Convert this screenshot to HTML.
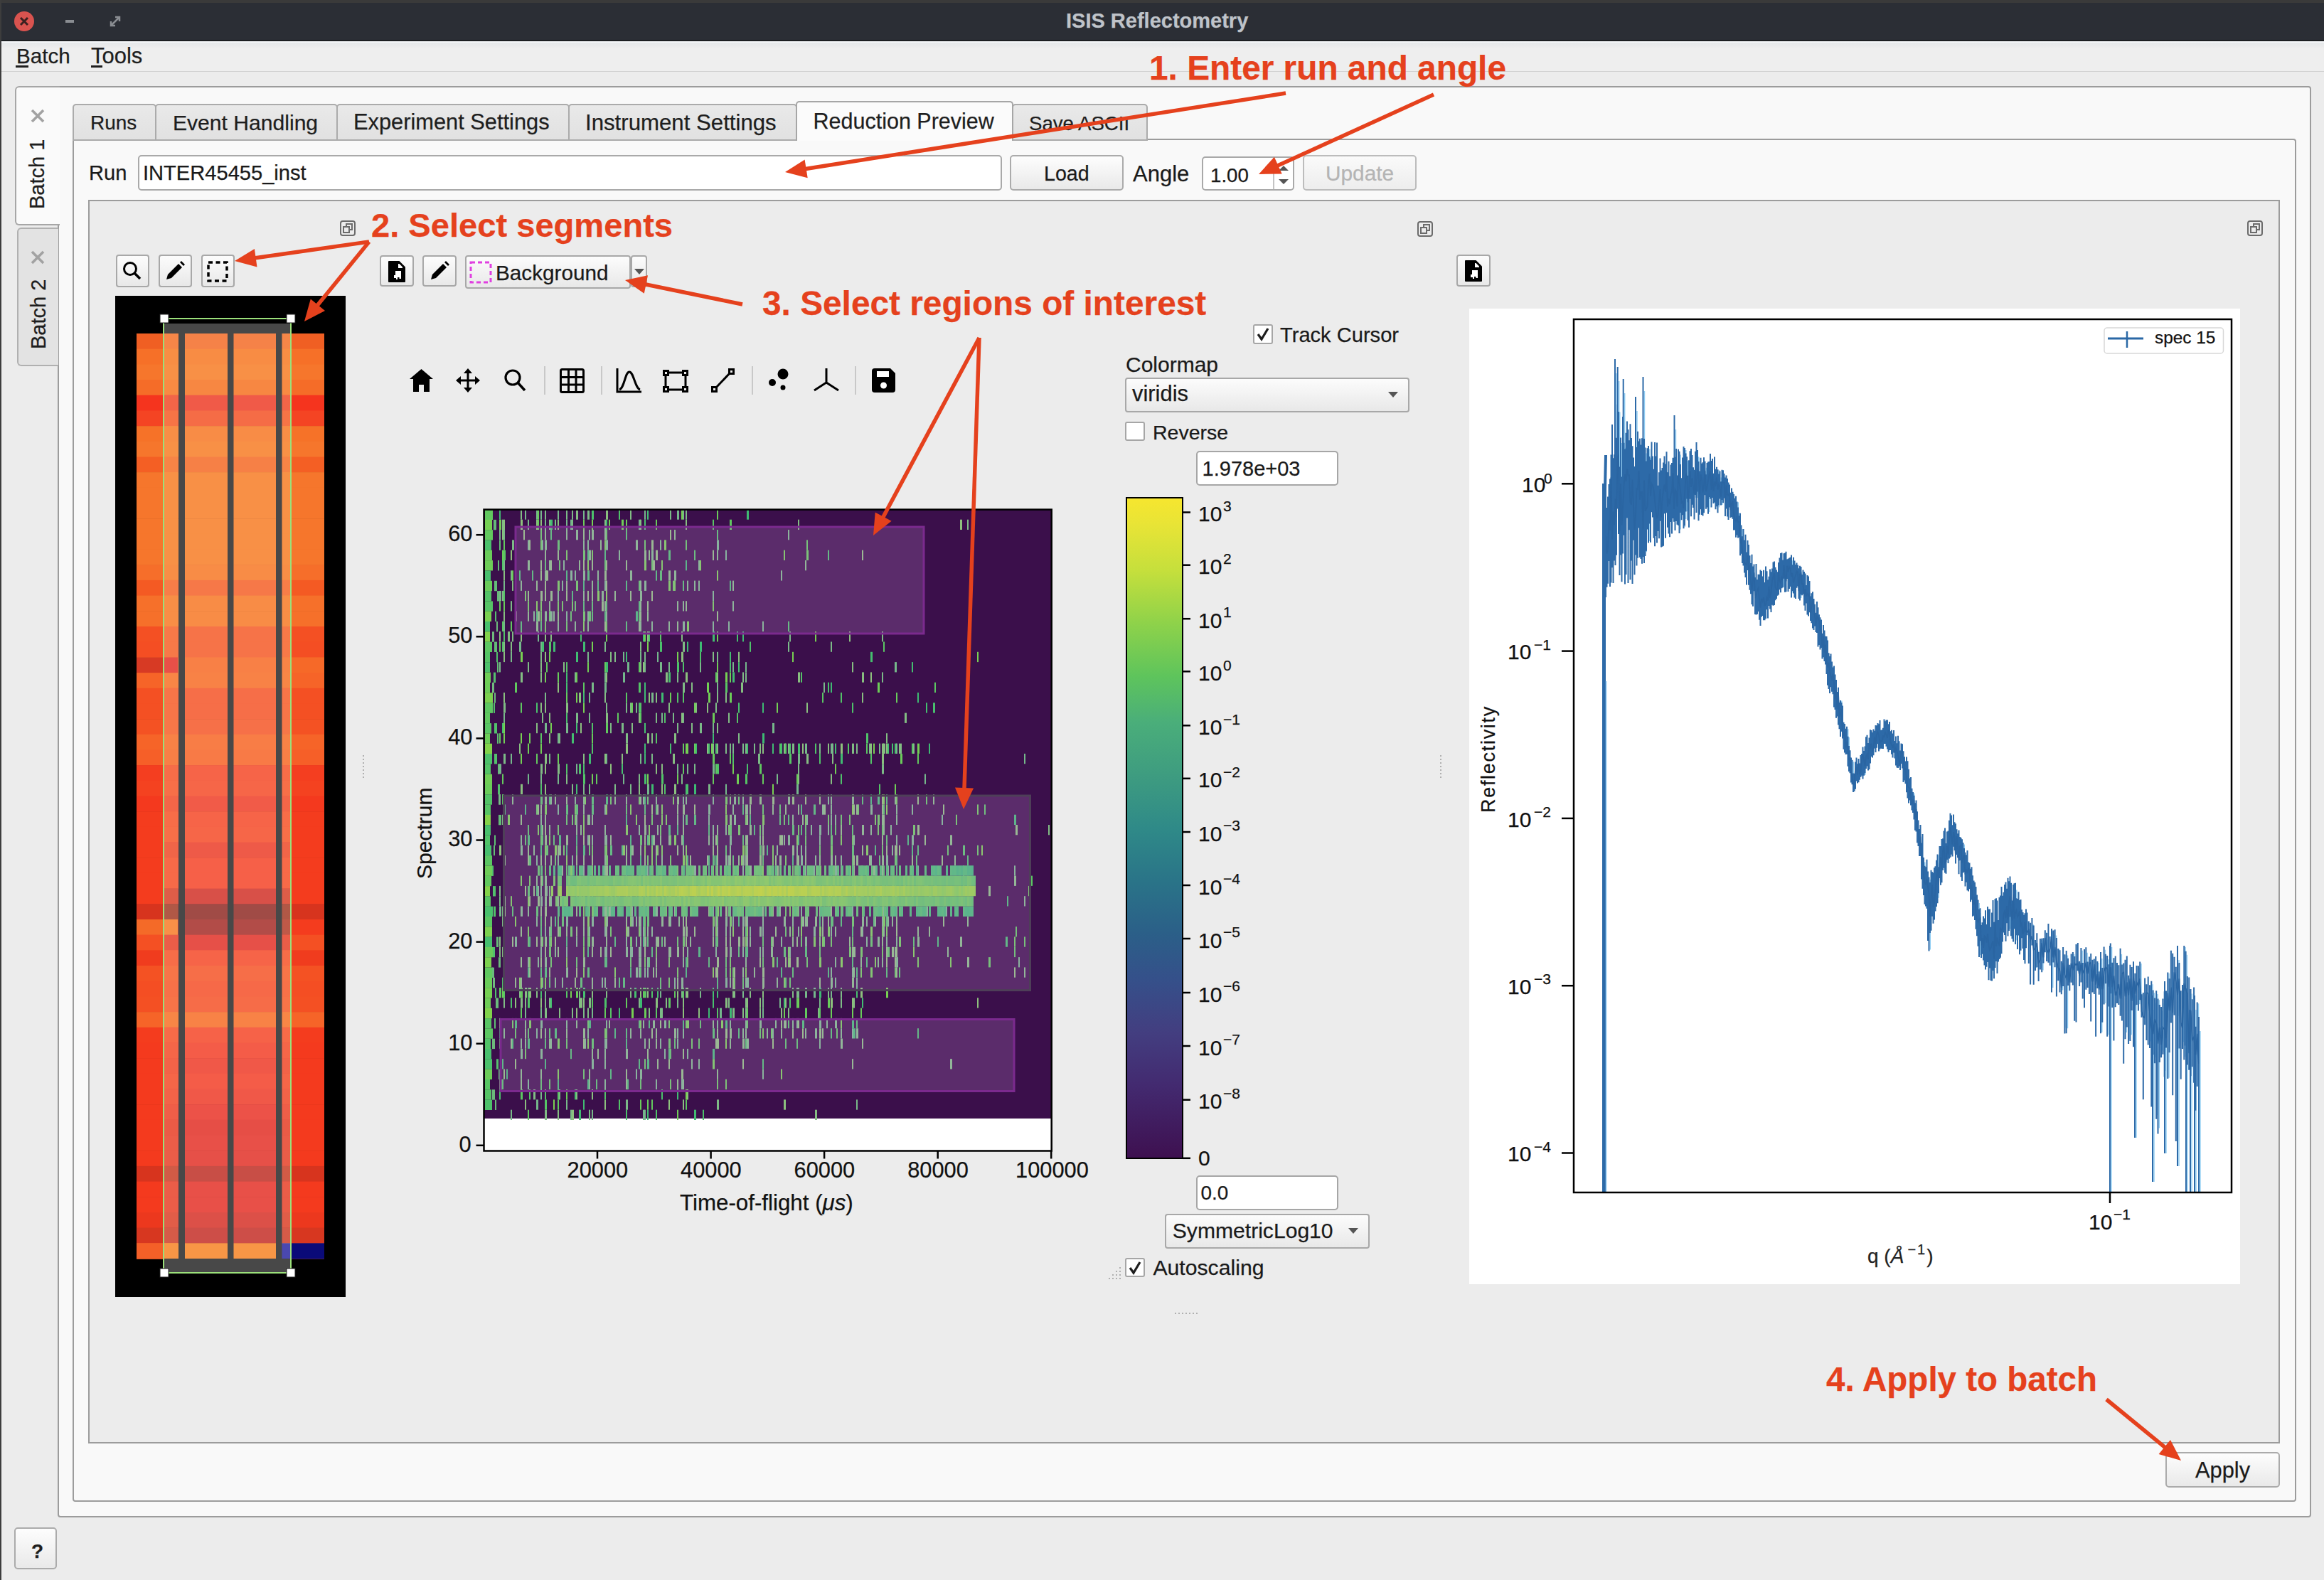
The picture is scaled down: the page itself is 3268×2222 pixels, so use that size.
<!DOCTYPE html><html><head><meta charset="utf-8"><style>html,body{margin:0;padding:0;width:3268px;height:2222px;overflow:hidden;background:#ececec;font-family:"Liberation Sans", sans-serif;position:relative}div{-webkit-text-stroke:0.25px currentColor}</style></head><body>
<div style="position:absolute;left:0.0px;top:0.0px;width:3268.0px;height:58.0px;background:#2b2e35"></div>
<div style="position:absolute;left:0.0px;top:0.0px;width:3268.0px;height:4.0px;background:#3a3a3a"></div>
<div style="position:absolute;left:0.0px;top:56.0px;width:3268.0px;height:2.0px;background:#1c1e21"></div>
<div style="position:absolute;left:0.0px;top:0.0px;width:2.0px;height:2222.0px;background:#3d3d3d"></div>
<div style="position:absolute;left:20px;top:16px;width:28px;height:28px;border-radius:50%;background:#d9534f"></div>
<svg style="position:absolute;left:20px;top:16px" width="28" height="28"><path d="M9 9 L19 19 M19 9 L9 19" stroke="#3a2020" stroke-width="3"/></svg>
<div style="position:absolute;left:92.0px;top:28.0px;width:12.0px;height:4.0px;background:#8a8d92"></div>
<svg style="position:absolute;left:152px;top:20px" width="20" height="20"><path d="M4 16 L16 4 M10 4 L16 4 L16 10 M4 10 L4 16 L10 16" stroke="#8a8d92" stroke-width="2.5" fill="none"/></svg>
<div style="position:absolute;left:1499.0px;top:15.1px;font-size:29px;line-height:1;font-weight:bold;color:#bfc3c9;white-space:nowrap;font-family:"Liberation Sans", sans-serif;letter-spacing:0.8px">ISIS Reflectometry</div>
<div style="position:absolute;left:2.0px;top:58.0px;width:3266.0px;height:42.0px;background:#eeeeee"></div>
<div style="position:absolute;left:2.0px;top:100.0px;width:3266.0px;height:2.0px;background:#d2d2d2"></div>
<div style="position:absolute;left:2.0px;top:58.0px;width:3266.0px;height:2.0px;background:#f4f6f8"></div>
<div style="position:absolute;left:2.0px;top:60.0px;width:3266.0px;height:7.0px;background:linear-gradient(#e6e8ea,#ececec)"></div>
<div style="position:absolute;left:23.0px;top:63.9px;font-size:29.6px;line-height:1;font-weight:normal;color:#1e1e1e;white-space:nowrap;font-family:"Liberation Sans", sans-serif;">Batch</div>
<div style="position:absolute;left:22.0px;top:92.0px;width:18.0px;height:3.0px;background:#1e1e1e"></div>
<div style="position:absolute;left:128.0px;top:62.8px;font-size:31px;line-height:1;font-weight:normal;color:#1e1e1e;white-space:nowrap;font-family:"Liberation Sans", sans-serif;">Tools</div>
<div style="position:absolute;left:128.0px;top:92.0px;width:16.0px;height:3.0px;background:#1e1e1e"></div>
<div style="position:absolute;left:2.0px;top:101.0px;width:3266.0px;height:2121.0px;background:#ececec"></div>
<div style="position:absolute;left:81.0px;top:121.0px;width:3169.0px;height:2013.0px;background:#f9f9f9;border:2px solid #9c9c9c;box-sizing:border-box;border-radius:0 4px 4px 4px"></div>
<div style="position:absolute;left:21.0px;top:121.0px;width:63.0px;height:196.0px;background:#fafafa;border:2px solid #a6a6a6;border-right:none;box-sizing:border-box;border-radius:6px 0 0 6px"></div>
<div style="position:absolute;left:24.0px;top:320.0px;width:58.0px;height:195.0px;background:#e3e3e3;border:2px solid #b0b0b0;border-right:none;box-sizing:border-box;border-radius:6px 0 0 6px"></div>
<svg style="position:absolute;left:43px;top:153px" width="20" height="20"><path d="M2 2 L18 18 M18 2 L2 18" stroke="#a2a2a2" stroke-width="3.6"/></svg>
<svg style="position:absolute;left:43px;top:352px" width="20" height="20"><path d="M2 2 L18 18 M18 2 L2 18" stroke="#a2a2a2" stroke-width="3.6"/></svg>
<div style="position:absolute;left:38px;top:294px;transform-origin:0 0;transform:rotate(-90deg);font-size:29px;line-height:1;color:#1e1e1e;white-space:nowrap">Batch 1</div>
<div style="position:absolute;left:40px;top:491px;transform-origin:0 0;transform:rotate(-90deg);font-size:29px;line-height:1;color:#1e1e1e;white-space:nowrap">Batch 2</div>
<div style="position:absolute;left:102.0px;top:195.0px;width:3127.0px;height:1917.0px;background:#f9f9f9;border:2px solid #9c9c9c;box-sizing:border-box;border-radius:0 4px 4px 4px"></div>
<div style="position:absolute;left:102.0px;top:146.0px;width:118.0px;height:52.0px;background:linear-gradient(#e9e9e9,#e1e1e1);border:2px solid #ababab;box-sizing:border-box;border-radius:5px 5px 0 0"></div>
<div style="position:absolute;left:218.0px;top:146.0px;width:257.0px;height:52.0px;background:linear-gradient(#e9e9e9,#e1e1e1);border:2px solid #ababab;box-sizing:border-box;border-radius:5px 5px 0 0"></div>
<div style="position:absolute;left:473.0px;top:146.0px;width:328.0px;height:52.0px;background:linear-gradient(#e9e9e9,#e1e1e1);border:2px solid #ababab;box-sizing:border-box;border-radius:5px 5px 0 0"></div>
<div style="position:absolute;left:799.0px;top:146.0px;width:322.0px;height:52.0px;background:linear-gradient(#e9e9e9,#e1e1e1);border:2px solid #ababab;box-sizing:border-box;border-radius:5px 5px 0 0"></div>
<div style="position:absolute;left:1423.0px;top:146.0px;width:191.0px;height:52.0px;background:linear-gradient(#e9e9e9,#e1e1e1);border:2px solid #ababab;box-sizing:border-box;border-radius:5px 5px 0 0"></div>
<div style="position:absolute;left:127.0px;top:159.3px;font-size:28px;line-height:1;font-weight:normal;color:#1e1e1e;white-space:nowrap;font-family:"Liberation Sans", sans-serif;">Runs</div>
<div style="position:absolute;left:243.0px;top:157.5px;font-size:30.1px;line-height:1;font-weight:normal;color:#1e1e1e;white-space:nowrap;font-family:"Liberation Sans", sans-serif;">Event Handling</div>
<div style="position:absolute;left:497.0px;top:156.9px;font-size:30.8px;line-height:1;font-weight:normal;color:#1e1e1e;white-space:nowrap;font-family:"Liberation Sans", sans-serif;">Experiment Settings</div>
<div style="position:absolute;left:823.0px;top:156.6px;font-size:31.2px;line-height:1;font-weight:normal;color:#1e1e1e;white-space:nowrap;font-family:"Liberation Sans", sans-serif;">Instrument Settings</div>
<div style="position:absolute;left:1447.0px;top:159.6px;font-size:27.6px;line-height:1;font-weight:normal;color:#1e1e1e;white-space:nowrap;font-family:"Liberation Sans", sans-serif;">Save ASCII</div>
<div style="position:absolute;left:1119.0px;top:142.0px;width:306.0px;height:56.0px;background:#fbfbfb;border:2px solid #a6a6a6;border-bottom:none;box-sizing:border-box;border-radius:5px 5px 0 0"></div>
<div style="position:absolute;left:1143.5px;top:155.2px;font-size:30.5px;line-height:1;font-weight:normal;color:#1e1e1e;white-space:nowrap;font-family:"Liberation Sans", sans-serif;">Reduction Preview</div>
<div style="position:absolute;left:125.0px;top:229.4px;font-size:29.1px;line-height:1;font-weight:normal;color:#1a1a1a;white-space:nowrap;font-family:"Liberation Sans", sans-serif;">Run</div>
<div style="position:absolute;left:194.0px;top:218.0px;width:1215.0px;height:50.0px;background:#fff;border:2px solid #a9a9a9;box-sizing:border-box;border-radius:5px"></div>
<div style="position:absolute;left:201.0px;top:229.4px;font-size:29.1px;line-height:1;font-weight:normal;color:#1a1a1a;white-space:nowrap;font-family:"Liberation Sans", sans-serif;">INTER45455_inst</div>
<div style="position:absolute;left:1420.0px;top:218.0px;width:160.0px;height:50.0px;background:linear-gradient(#fdfdfd,#e9e9e9);border:2px solid #ababab;box-sizing:border-box;border-radius:5px"></div>
<div style="position:absolute;left:1468.0px;top:229.8px;font-size:28.6px;line-height:1;font-weight:normal;color:#1a1a1a;white-space:nowrap;font-family:"Liberation Sans", sans-serif;">Load</div>
<div style="position:absolute;left:1593.0px;top:228.8px;font-size:31px;line-height:1;font-weight:normal;color:#1a1a1a;white-space:nowrap;font-family:"Liberation Sans", sans-serif;">Angle</div>
<div style="position:absolute;left:1690.0px;top:220.0px;width:130.0px;height:48.0px;background:#fff;border:2px solid #a9a9a9;box-sizing:border-box;border-radius:5px"></div>
<div style="position:absolute;left:1790.0px;top:222.0px;width:2.0px;height:44.0px;background:#c4c4c4"></div>
<svg style="position:absolute;left:1794px;top:226px" width="22" height="40"><path d="M4 14 L11 7 L18 14 Z M4 26 L11 33 L18 26 Z" fill="#555"/></svg>
<div style="position:absolute;left:1702.0px;top:232.6px;font-size:27.7px;line-height:1;font-weight:normal;color:#1a1a1a;white-space:nowrap;font-family:"Liberation Sans", sans-serif;">1.00</div>
<div style="position:absolute;left:1832.0px;top:218.0px;width:160.0px;height:50.0px;background:linear-gradient(#fafafa,#ededed);border:2px solid #bcbcbc;box-sizing:border-box;border-radius:5px"></div>
<div style="position:absolute;left:1864.0px;top:228.8px;font-size:29.8px;line-height:1;font-weight:normal;color:#b4b4b4;white-space:nowrap;font-family:"Liberation Sans", sans-serif;">Update</div>
<div style="position:absolute;left:124.0px;top:281.0px;width:3082.0px;height:1749.0px;background:#ececec;border:2px solid #9c9c9c;box-sizing:border-box"></div>
<div style="position:absolute;left:3045.0px;top:2042.0px;width:161.0px;height:50.0px;background:linear-gradient(#fdfdfd,#e9e9e9);border:2px solid #ababab;box-sizing:border-box;border-radius:5px"></div>
<div style="position:absolute;left:3087.0px;top:2052.9px;font-size:30.8px;line-height:1;font-weight:normal;color:#1a1a1a;white-space:nowrap;font-family:"Liberation Sans", sans-serif;">Apply</div>
<div style="position:absolute;left:20.0px;top:2148.0px;width:60.0px;height:59.0px;background:linear-gradient(#fdfdfd,#e9e9e9);border:2px solid #ababab;box-sizing:border-box;border-radius:5px"></div>
<div style="position:absolute;left:44.0px;top:2168.3px;font-size:28px;line-height:1;font-weight:bold;color:#1e1e1e;white-space:nowrap;font-family:"Liberation Sans", sans-serif;">?</div>
<svg style="position:absolute;left:478px;top:310px" width="22" height="22"><rect x="1" y="1" width="20" height="20" rx="3" fill="none" stroke="#6b6b6b" stroke-width="2"/><rect x="5" y="9" width="8" height="8" fill="none" stroke="#6b6b6b" stroke-width="2"/><path d="M9 9 V5 H17 V13 H13" fill="none" stroke="#6b6b6b" stroke-width="2"/></svg>
<div style="position:absolute;left:163.0px;top:358.0px;width:47.0px;height:46.0px;background:linear-gradient(#fcfcfc,#e8e8e8);border:2px solid #a8a8a8;box-sizing:border-box;border-radius:4px"></div>
<div style="position:absolute;left:223.0px;top:358.0px;width:47.0px;height:46.0px;background:linear-gradient(#fcfcfc,#e8e8e8);border:2px solid #a8a8a8;box-sizing:border-box;border-radius:4px"></div>
<div style="position:absolute;left:283.0px;top:358.0px;width:47.0px;height:46.0px;background:linear-gradient(#fcfcfc,#e8e8e8);border:2px solid #a8a8a8;box-sizing:border-box;border-radius:4px"></div>
<svg style="position:absolute;left:170px;top:365px" width="34" height="34"><circle cx="13" cy="13" r="8.5" fill="none" stroke="#000" stroke-width="3"/><path d="M19 19 L27 27" stroke="#000" stroke-width="3.5"/></svg>
<svg style="position:absolute;left:231px;top:366px" width="30" height="30"><path d="M3 27 L5 20 L20 5 L25 10 L10 25 Z" fill="#000"/><path d="M22 3 L24 1 L29 6 L27 8 Z" fill="#000"/></svg>
<svg style="position:absolute;left:289px;top:365px" width="34" height="34"><rect x="4" y="4" width="26" height="26" fill="none" stroke="#000" stroke-width="3.5" stroke-dasharray="6 4.5"/></svg>
<svg style="position:absolute;left:1993px;top:311px" width="22" height="22"><rect x="1" y="1" width="20" height="20" rx="3" fill="none" stroke="#6b6b6b" stroke-width="2"/><rect x="5" y="9" width="8" height="8" fill="none" stroke="#6b6b6b" stroke-width="2"/><path d="M9 9 V5 H17 V13 H13" fill="none" stroke="#6b6b6b" stroke-width="2"/></svg>
<div style="position:absolute;left:534.0px;top:359.0px;width:48.0px;height:44.0px;background:linear-gradient(#fcfcfc,#e8e8e8);border:2px solid #a8a8a8;box-sizing:border-box;border-radius:4px"></div>
<svg style="position:absolute;left:545px;top:365px" width="28" height="34"><g transform="translate(1,2)"><path d="M0 1 Q0 0 1 0 H15.5 L24 8.5 V29 Q24 30 23 30 H1 Q0 30 0 29 Z" fill="#000"/><path d="M14 4 L14 10 L20 10 L20 8.5 L15.5 4 Z" fill="#fff"/><path d="M10 14 H18 V25 H15.5 V23 H13 V26 H11 V24 H8 V20 H10 Z" fill="#fff"/></g></svg>
<div style="position:absolute;left:594.0px;top:359.0px;width:48.0px;height:44.0px;background:linear-gradient(#fcfcfc,#e8e8e8);border:2px solid #a8a8a8;box-sizing:border-box;border-radius:4px"></div>
<svg style="position:absolute;left:603px;top:366px" width="30" height="30"><path d="M3 27 L5 20 L20 5 L25 10 L10 25 Z" fill="#000"/><path d="M22 3 L24 1 L29 6 L27 8 Z" fill="#000"/></svg>
<div style="position:absolute;left:654.0px;top:359.0px;width:233.0px;height:47.0px;background:linear-gradient(#fcfcfc,#e8e8e8);border:2px solid #a8a8a8;box-sizing:border-box;border-radius:4px"></div>
<div style="position:absolute;left:887.0px;top:359.0px;width:23.0px;height:45.0px;background:linear-gradient(#fcfcfc,#e8e8e8);border:2px solid #a8a8a8;box-sizing:border-box;border-radius:4px"></div>
<svg style="position:absolute;left:890px;top:376px" width="18" height="12"><path d="M2 2 H16 L9 10 Z" fill="#555"/></svg>
<svg style="position:absolute;left:660px;top:367px" width="32" height="32"><rect x="2" y="2" width="28" height="28" fill="none" stroke="#e040e0" stroke-width="3" stroke-dasharray="6 4"/></svg>
<div style="position:absolute;left:697.0px;top:368.6px;font-size:29.7px;line-height:1;font-weight:normal;color:#1a1a1a;white-space:nowrap;font-family:"Liberation Sans", sans-serif;">Background</div>
<svg style="position:absolute;left:0;top:0" width="1300" height="600"><path transform="translate(576,518)" d="M16.5 1 L33 15 H28 V33 H20 V23 H13 V33 H5 V15 H0 Z" fill="#000"/><g transform="translate(641,518)" stroke="#000" stroke-width="3" fill="#000"><path d="M17 3 V31 M3 17 H31"/><path d="M17 0 L11 7 H23 Z M17 34 L11 27 H23 Z M0 17 L7 11 V23 Z M34 17 L27 11 V23 Z" stroke="none"/></g><g transform="translate(708,518)"><circle cx="13" cy="13" r="10" fill="none" stroke="#000" stroke-width="3.2"/><path d="M20 20 L30 31" stroke="#000" stroke-width="3.5"/></g><path d="M766 515 V555" stroke="#c8c8c8" stroke-width="2"/><g transform="translate(787,518)" fill="none" stroke="#000" stroke-width="3"><rect x="1.5" y="1.5" width="32" height="32" rx="2"/><path d="M12.5 1.5 V33.5 M23 1.5 V33.5 M1.5 12.5 H33.5 M1.5 23 H33.5"/></g><path d="M846 515 V555" stroke="#c8c8c8" stroke-width="2"/><g transform="translate(866,518)" fill="none" stroke="#000" stroke-width="3"><path d="M2 0 V33 H36"/><path d="M5 30 C12 28 13 5 19 5 C25 5 27 28 34 30"/></g><g transform="translate(932,520)" fill="none" stroke="#000" stroke-width="3"><path d="M6 4 H30 M6 28 H30 M4 6 V26 M32 6 V26"/><rect x="1.5" y="1.5" width="6" height="6"/><rect x="28.5" y="1.5" width="6" height="6"/><rect x="1.5" y="24.5" width="6" height="6"/><rect x="28.5" y="24.5" width="6" height="6"/></g><g transform="translate(1000,518)" fill="none" stroke="#000" stroke-width="3"><rect x="1.5" y="26.5" width="6" height="6"/><rect x="25.5" y="1.5" width="6" height="6"/><path d="M7 27 L26 7"/></g><path d="M1058 515 V555" stroke="#c8c8c8" stroke-width="2"/><g transform="translate(1081,518)" fill="#000"><circle cx="20" cy="8" r="7.5"/><circle cx="5" cy="20" r="5"/><circle cx="20" cy="27" r="3.5"/></g><g transform="translate(1144,518)" fill="none" stroke="#000" stroke-width="3"><path d="M18 0 V20 L1 31 M18 20 L35 31"/></g><path d="M1203 515 V555" stroke="#c8c8c8" stroke-width="2"/><g transform="translate(1226,518)"><path d="M0 4 Q0 0 4 0 H26 L33 7 V30 Q33 34 29 34 H4 Q0 34 0 30 Z" fill="#000"/><rect x="7" y="4" width="17" height="8" fill="#fff"/><circle cx="16.5" cy="24" r="4.5" fill="#fff"/></g></svg>
<div style="position:absolute;left:1762.0px;top:456.0px;width:28.0px;height:28.0px;background:#fff;border:2px solid #a6a6a6;box-sizing:border-box;border-radius:3px"></div>
<svg style="position:absolute;left:1764px;top:458px" width="24" height="24"><path d="M5 12 L10 19 L19 4" fill="none" stroke="#1e1e1e" stroke-width="3.2"/></svg>
<div style="position:absolute;left:1800.0px;top:456.9px;font-size:29.1px;line-height:1;font-weight:normal;color:#1a1a1a;white-space:nowrap;font-family:"Liberation Sans", sans-serif;">Track Cursor</div>
<div style="position:absolute;left:1583.0px;top:497.6px;font-size:30px;line-height:1;font-weight:normal;color:#1a1a1a;white-space:nowrap;font-family:"Liberation Sans", sans-serif;">Colormap</div>
<div style="position:absolute;left:1582.0px;top:531.0px;width:400.0px;height:49.0px;background:linear-gradient(#fcfcfc,#e8e8e8);border:2px solid #a8a8a8;box-sizing:border-box;border-radius:4px"></div>
<svg style="position:absolute;left:1950px;top:549px" width="18" height="12"><path d="M2 2 H16 L9 10 Z" fill="#555"/></svg>
<div style="position:absolute;left:1592.0px;top:538.8px;font-size:30.9px;line-height:1;font-weight:normal;color:#1a1a1a;white-space:nowrap;font-family:"Liberation Sans", sans-serif;">viridis</div>
<div style="position:absolute;left:1582.0px;top:593.0px;width:28.0px;height:27.0px;background:#fff;border:2px solid #a6a6a6;box-sizing:border-box;border-radius:3px"></div>
<div style="position:absolute;left:1621.0px;top:593.7px;font-size:28.5px;line-height:1;font-weight:normal;color:#1a1a1a;white-space:nowrap;font-family:"Liberation Sans", sans-serif;">Reverse</div>
<div style="position:absolute;left:1682.0px;top:634.0px;width:200.0px;height:49.0px;background:#fff;border:2px solid #a6a6a6;box-sizing:border-box;border-radius:5px"></div>
<div style="position:absolute;left:1690.6px;top:644.5px;font-size:29px;line-height:1;font-weight:normal;color:#1a1a1a;white-space:nowrap;font-family:"Liberation Sans", sans-serif;">1.978e+03</div>
<div style="position:absolute;left:1682.0px;top:1653.0px;width:200.0px;height:49.0px;background:#fff;border:2px solid #a6a6a6;box-sizing:border-box;border-radius:5px"></div>
<div style="position:absolute;left:1688.6px;top:1663.7px;font-size:27.9px;line-height:1;font-weight:normal;color:#1a1a1a;white-space:nowrap;font-family:"Liberation Sans", sans-serif;">0.0</div>
<div style="position:absolute;left:1638.0px;top:1707.0px;width:288.0px;height:49.0px;background:linear-gradient(#fcfcfc,#e8e8e8);border:2px solid #a8a8a8;box-sizing:border-box;border-radius:4px"></div>
<div style="position:absolute;left:1648.8px;top:1715.5px;font-size:30.1px;line-height:1;font-weight:normal;color:#1a1a1a;white-space:nowrap;font-family:"Liberation Sans", sans-serif;">SymmetricLog10</div>
<svg style="position:absolute;left:1894px;top:1725px" width="18" height="12"><path d="M2 2 H16 L9 10 Z" fill="#555"/></svg>
<div style="position:absolute;left:1582.0px;top:1769.0px;width:28.0px;height:27.0px;background:#fff;border:2px solid #a6a6a6;box-sizing:border-box;border-radius:3px"></div>
<svg style="position:absolute;left:1584px;top:1771px" width="24" height="24"><path d="M5 12 L10 19 L19 4" fill="none" stroke="#1e1e1e" stroke-width="3.2"/></svg>
<div style="position:absolute;left:1621.4px;top:1768.4px;font-size:30.2px;line-height:1;font-weight:normal;color:#1a1a1a;white-space:nowrap;font-family:"Liberation Sans", sans-serif;">Autoscaling</div>
<svg style="position:absolute;left:0;top:0" width="2100" height="1900"><rect x="510" y="1062" width="2" height="2" fill="#b0b0b0"/><rect x="2025" y="1062" width="2" height="2" fill="#b0b0b0"/><rect x="510" y="1067" width="2" height="2" fill="#b0b0b0"/><rect x="2025" y="1067" width="2" height="2" fill="#b0b0b0"/><rect x="510" y="1072" width="2" height="2" fill="#b0b0b0"/><rect x="2025" y="1072" width="2" height="2" fill="#b0b0b0"/><rect x="510" y="1077" width="2" height="2" fill="#b0b0b0"/><rect x="2025" y="1077" width="2" height="2" fill="#b0b0b0"/><rect x="510" y="1082" width="2" height="2" fill="#b0b0b0"/><rect x="2025" y="1082" width="2" height="2" fill="#b0b0b0"/><rect x="510" y="1087" width="2" height="2" fill="#b0b0b0"/><rect x="2025" y="1087" width="2" height="2" fill="#b0b0b0"/><rect x="510" y="1092" width="2" height="2" fill="#b0b0b0"/><rect x="2025" y="1092" width="2" height="2" fill="#b0b0b0"/><rect x="1652" y="1846" width="2" height="2" fill="#b0b0b0"/><rect x="1657" y="1846" width="2" height="2" fill="#b0b0b0"/><rect x="1662" y="1846" width="2" height="2" fill="#b0b0b0"/><rect x="1667" y="1846" width="2" height="2" fill="#b0b0b0"/><rect x="1672" y="1846" width="2" height="2" fill="#b0b0b0"/><rect x="1677" y="1846" width="2" height="2" fill="#b0b0b0"/><rect x="1682" y="1846" width="2" height="2" fill="#b0b0b0"/><rect x="1574" y="1782" width="2" height="2" fill="#b0b0b0"/><rect x="1569" y="1787" width="2" height="2" fill="#b0b0b0"/><rect x="1574" y="1787" width="2" height="2" fill="#b0b0b0"/><rect x="1564" y="1792" width="2" height="2" fill="#b0b0b0"/><rect x="1569" y="1792" width="2" height="2" fill="#b0b0b0"/><rect x="1574" y="1792" width="2" height="2" fill="#b0b0b0"/><rect x="1559" y="1797" width="2" height="2" fill="#b0b0b0"/><rect x="1564" y="1797" width="2" height="2" fill="#b0b0b0"/><rect x="1569" y="1797" width="2" height="2" fill="#b0b0b0"/><rect x="1574" y="1797" width="2" height="2" fill="#b0b0b0"/></svg>
<svg style="position:absolute;left:3160px;top:310px" width="22" height="22"><rect x="1" y="1" width="20" height="20" rx="3" fill="none" stroke="#6b6b6b" stroke-width="2"/><rect x="5" y="9" width="8" height="8" fill="none" stroke="#6b6b6b" stroke-width="2"/><path d="M9 9 V5 H17 V13 H13" fill="none" stroke="#6b6b6b" stroke-width="2"/></svg>
<div style="position:absolute;left:2048.0px;top:358.0px;width:48.0px;height:45.0px;background:linear-gradient(#fcfcfc,#e8e8e8);border:2px solid #a8a8a8;box-sizing:border-box;border-radius:4px"></div>
<svg style="position:absolute;left:2059px;top:364px" width="28" height="34"><g transform="translate(1,2)"><path d="M0 1 Q0 0 1 0 H15.5 L24 8.5 V29 Q24 30 23 30 H1 Q0 30 0 29 Z" fill="#000"/><path d="M14 4 L14 10 L20 10 L20 8.5 L15.5 4 Z" fill="#fff"/><path d="M10 14 H18 V25 H15.5 V23 H13 V26 H11 V24 H8 V20 H10 Z" fill="#fff"/></g></svg>
<div style="position:absolute;left:162.0px;top:416.0px;width:324.0px;height:1408.0px;background:#000"></div>
<svg style="position:absolute;left:0;top:0" width="500" height="1830"><rect x="192" y="469.0" width="38" height="22.3" fill="#f05f23"/><rect x="230" y="469.0" width="179" height="22.3" fill="#f58248"/><rect x="409" y="469.0" width="47" height="22.3" fill="#f05f23"/><rect x="230" y="469.0" width="20" height="22.3" fill="#f68648"/><rect x="396" y="469.0" width="13" height="22.3" fill="#f68648"/><rect x="192" y="490.7" width="38" height="22.3" fill="#f67028"/><rect x="230" y="490.7" width="179" height="22.3" fill="#f88c44"/><rect x="409" y="490.7" width="47" height="22.3" fill="#f67028"/><rect x="230" y="490.7" width="20" height="22.3" fill="#f88e44"/><rect x="396" y="490.7" width="13" height="22.3" fill="#f88e44"/><rect x="192" y="512.4" width="38" height="22.3" fill="#f6762c"/><rect x="230" y="512.4" width="179" height="22.3" fill="#f89046"/><rect x="409" y="512.4" width="47" height="22.3" fill="#f6762c"/><rect x="230" y="512.4" width="20" height="22.3" fill="#f89146"/><rect x="396" y="512.4" width="13" height="22.3" fill="#f89146"/><rect x="192" y="534.0" width="38" height="22.3" fill="#f56c28"/><rect x="230" y="534.0" width="179" height="22.3" fill="#f78742"/><rect x="409" y="534.0" width="47" height="22.3" fill="#f56c28"/><rect x="230" y="534.0" width="20" height="22.3" fill="#f88a43"/><rect x="396" y="534.0" width="13" height="22.3" fill="#f88a43"/><rect x="192" y="555.7" width="38" height="22.3" fill="#f5341e"/><rect x="230" y="555.7" width="179" height="22.3" fill="#f05a48"/><rect x="409" y="555.7" width="47" height="22.3" fill="#f5341e"/><rect x="230" y="555.7" width="20" height="22.3" fill="#f26548"/><rect x="396" y="555.7" width="13" height="22.3" fill="#f26548"/><rect x="192" y="577.4" width="38" height="22.3" fill="#f44423"/><rect x="230" y="577.4" width="179" height="22.3" fill="#f56c46"/><rect x="409" y="577.4" width="47" height="22.3" fill="#f44423"/><rect x="230" y="577.4" width="20" height="22.3" fill="#f67446"/><rect x="396" y="577.4" width="13" height="22.3" fill="#f67446"/><rect x="192" y="599.1" width="38" height="22.3" fill="#f67228"/><rect x="230" y="599.1" width="179" height="22.3" fill="#f88c46"/><rect x="409" y="599.1" width="47" height="22.3" fill="#f67228"/><rect x="230" y="599.1" width="20" height="22.3" fill="#f88e46"/><rect x="396" y="599.1" width="13" height="22.3" fill="#f88e46"/><rect x="192" y="620.8" width="38" height="22.3" fill="#f6762c"/><rect x="230" y="620.8" width="179" height="22.3" fill="#f89046"/><rect x="409" y="620.8" width="47" height="22.3" fill="#f6762c"/><rect x="230" y="620.8" width="20" height="22.3" fill="#f89146"/><rect x="396" y="620.8" width="13" height="22.3" fill="#f89146"/><rect x="192" y="642.5" width="38" height="22.3" fill="#f45f24"/><rect x="230" y="642.5" width="179" height="22.3" fill="#f68046"/><rect x="409" y="642.5" width="47" height="22.3" fill="#f45f24"/><rect x="230" y="642.5" width="20" height="22.3" fill="#f78446"/><rect x="396" y="642.5" width="13" height="22.3" fill="#f78446"/><rect x="192" y="664.1" width="38" height="22.3" fill="#f6762c"/><rect x="230" y="664.1" width="179" height="22.3" fill="#f89046"/><rect x="409" y="664.1" width="47" height="22.3" fill="#f6762c"/><rect x="230" y="664.1" width="20" height="22.3" fill="#f89146"/><rect x="396" y="664.1" width="13" height="22.3" fill="#f89146"/><rect x="192" y="685.8" width="38" height="22.3" fill="#f6762c"/><rect x="230" y="685.8" width="179" height="22.3" fill="#f89046"/><rect x="409" y="685.8" width="47" height="22.3" fill="#f6762c"/><rect x="230" y="685.8" width="20" height="22.3" fill="#f89146"/><rect x="396" y="685.8" width="13" height="22.3" fill="#f89146"/><rect x="192" y="707.5" width="38" height="22.3" fill="#f6762c"/><rect x="230" y="707.5" width="179" height="22.3" fill="#f89046"/><rect x="409" y="707.5" width="47" height="22.3" fill="#f6762c"/><rect x="230" y="707.5" width="20" height="22.3" fill="#f89146"/><rect x="396" y="707.5" width="13" height="22.3" fill="#f89146"/><rect x="192" y="729.2" width="38" height="22.3" fill="#f6762c"/><rect x="230" y="729.2" width="179" height="22.3" fill="#f89046"/><rect x="409" y="729.2" width="47" height="22.3" fill="#f6762c"/><rect x="230" y="729.2" width="20" height="22.3" fill="#f89146"/><rect x="396" y="729.2" width="13" height="22.3" fill="#f89146"/><rect x="192" y="750.9" width="38" height="22.3" fill="#f6762c"/><rect x="230" y="750.9" width="179" height="22.3" fill="#f89046"/><rect x="409" y="750.9" width="47" height="22.3" fill="#f6762c"/><rect x="230" y="750.9" width="20" height="22.3" fill="#f89146"/><rect x="396" y="750.9" width="13" height="22.3" fill="#f89146"/><rect x="192" y="772.6" width="38" height="22.3" fill="#f6762c"/><rect x="230" y="772.6" width="179" height="22.3" fill="#f89046"/><rect x="409" y="772.6" width="47" height="22.3" fill="#f6762c"/><rect x="230" y="772.6" width="20" height="22.3" fill="#f89146"/><rect x="396" y="772.6" width="13" height="22.3" fill="#f89146"/><rect x="192" y="794.2" width="38" height="22.3" fill="#f66e2a"/><rect x="230" y="794.2" width="179" height="22.3" fill="#f88c46"/><rect x="409" y="794.2" width="47" height="22.3" fill="#f66e2a"/><rect x="230" y="794.2" width="20" height="22.3" fill="#f88e46"/><rect x="396" y="794.2" width="13" height="22.3" fill="#f88e46"/><rect x="192" y="815.9" width="38" height="22.3" fill="#f45a23"/><rect x="230" y="815.9" width="179" height="22.3" fill="#f67848"/><rect x="409" y="815.9" width="47" height="22.3" fill="#f45a23"/><rect x="230" y="815.9" width="20" height="22.3" fill="#f77d48"/><rect x="396" y="815.9" width="13" height="22.3" fill="#f77d48"/><rect x="192" y="837.6" width="38" height="22.3" fill="#f6702a"/><rect x="230" y="837.6" width="179" height="22.3" fill="#f88c46"/><rect x="409" y="837.6" width="47" height="22.3" fill="#f6702a"/><rect x="230" y="837.6" width="20" height="22.3" fill="#f88e46"/><rect x="396" y="837.6" width="13" height="22.3" fill="#f88e46"/><rect x="192" y="859.3" width="38" height="22.3" fill="#f6702a"/><rect x="230" y="859.3" width="179" height="22.3" fill="#f88c46"/><rect x="409" y="859.3" width="47" height="22.3" fill="#f6702a"/><rect x="230" y="859.3" width="20" height="22.3" fill="#f88e46"/><rect x="396" y="859.3" width="13" height="22.3" fill="#f88e46"/><rect x="192" y="881.0" width="38" height="22.3" fill="#f45023"/><rect x="230" y="881.0" width="179" height="22.3" fill="#f67348"/><rect x="409" y="881.0" width="47" height="22.3" fill="#f45023"/><rect x="230" y="881.0" width="20" height="22.3" fill="#f77948"/><rect x="396" y="881.0" width="13" height="22.3" fill="#f77948"/><rect x="192" y="902.7" width="38" height="22.3" fill="#f44e23"/><rect x="230" y="902.7" width="179" height="22.3" fill="#f67348"/><rect x="409" y="902.7" width="47" height="22.3" fill="#f44e23"/><rect x="230" y="902.7" width="20" height="22.3" fill="#f77948"/><rect x="396" y="902.7" width="13" height="22.3" fill="#f77948"/><rect x="192" y="924.4" width="38" height="22.3" fill="#f66928"/><rect x="230" y="924.4" width="179" height="22.3" fill="#f88046"/><rect x="409" y="924.4" width="47" height="22.3" fill="#f66928"/><rect x="230" y="924.4" width="20" height="22.3" fill="#f88446"/><rect x="396" y="924.4" width="13" height="22.3" fill="#f88446"/><rect x="192" y="946.0" width="38" height="22.3" fill="#f66428"/><rect x="230" y="946.0" width="179" height="22.3" fill="#f88246"/><rect x="409" y="946.0" width="47" height="22.3" fill="#f66428"/><rect x="230" y="946.0" width="20" height="22.3" fill="#f88646"/><rect x="396" y="946.0" width="13" height="22.3" fill="#f88646"/><rect x="192" y="967.7" width="38" height="22.3" fill="#f45023"/><rect x="230" y="967.7" width="179" height="22.3" fill="#f66e48"/><rect x="409" y="967.7" width="47" height="22.3" fill="#f45023"/><rect x="230" y="967.7" width="20" height="22.3" fill="#f77548"/><rect x="396" y="967.7" width="13" height="22.3" fill="#f77548"/><rect x="192" y="989.4" width="38" height="22.3" fill="#f45023"/><rect x="230" y="989.4" width="179" height="22.3" fill="#f66e48"/><rect x="409" y="989.4" width="47" height="22.3" fill="#f45023"/><rect x="230" y="989.4" width="20" height="22.3" fill="#f77548"/><rect x="396" y="989.4" width="13" height="22.3" fill="#f77548"/><rect x="192" y="1011.1" width="38" height="22.3" fill="#f45223"/><rect x="230" y="1011.1" width="179" height="22.3" fill="#f67048"/><rect x="409" y="1011.1" width="47" height="22.3" fill="#f45223"/><rect x="230" y="1011.1" width="20" height="22.3" fill="#f77748"/><rect x="396" y="1011.1" width="13" height="22.3" fill="#f77748"/><rect x="192" y="1032.8" width="38" height="22.3" fill="#f66428"/><rect x="230" y="1032.8" width="179" height="22.3" fill="#f87d46"/><rect x="409" y="1032.8" width="47" height="22.3" fill="#f66428"/><rect x="230" y="1032.8" width="20" height="22.3" fill="#f88246"/><rect x="396" y="1032.8" width="13" height="22.3" fill="#f88246"/><rect x="192" y="1054.5" width="38" height="22.3" fill="#f65f28"/><rect x="230" y="1054.5" width="179" height="22.3" fill="#f87a46"/><rect x="409" y="1054.5" width="47" height="22.3" fill="#f65f28"/><rect x="230" y="1054.5" width="20" height="22.3" fill="#f87f46"/><rect x="396" y="1054.5" width="13" height="22.3" fill="#f87f46"/><rect x="192" y="1076.1" width="38" height="22.3" fill="#f43e20"/><rect x="230" y="1076.1" width="179" height="22.3" fill="#f66448"/><rect x="409" y="1076.1" width="47" height="22.3" fill="#f43e20"/><rect x="230" y="1076.1" width="20" height="22.3" fill="#f76d48"/><rect x="396" y="1076.1" width="13" height="22.3" fill="#f76d48"/><rect x="192" y="1097.8" width="38" height="22.3" fill="#f44220"/><rect x="230" y="1097.8" width="179" height="22.3" fill="#f66648"/><rect x="409" y="1097.8" width="47" height="22.3" fill="#f44220"/><rect x="230" y="1097.8" width="20" height="22.3" fill="#f76f48"/><rect x="396" y="1097.8" width="13" height="22.3" fill="#f76f48"/><rect x="192" y="1119.5" width="38" height="22.3" fill="#f4391e"/><rect x="230" y="1119.5" width="179" height="22.3" fill="#f15b48"/><rect x="409" y="1119.5" width="47" height="22.3" fill="#f4391e"/><rect x="230" y="1119.5" width="20" height="22.3" fill="#f36648"/><rect x="396" y="1119.5" width="13" height="22.3" fill="#f36648"/><rect x="192" y="1141.2" width="38" height="22.3" fill="#f43c1e"/><rect x="230" y="1141.2" width="179" height="22.3" fill="#f66448"/><rect x="409" y="1141.2" width="47" height="22.3" fill="#f43c1e"/><rect x="230" y="1141.2" width="20" height="22.3" fill="#f76d48"/><rect x="396" y="1141.2" width="13" height="22.3" fill="#f76d48"/><rect x="192" y="1162.9" width="38" height="22.3" fill="#f43c1e"/><rect x="230" y="1162.9" width="179" height="22.3" fill="#f66648"/><rect x="409" y="1162.9" width="47" height="22.3" fill="#f43c1e"/><rect x="230" y="1162.9" width="20" height="22.3" fill="#f76f48"/><rect x="396" y="1162.9" width="13" height="22.3" fill="#f76f48"/><rect x="192" y="1184.5" width="38" height="22.3" fill="#f43c1e"/><rect x="230" y="1184.5" width="179" height="22.3" fill="#ee5a48"/><rect x="409" y="1184.5" width="47" height="22.3" fill="#f43c1e"/><rect x="230" y="1184.5" width="20" height="22.3" fill="#f06548"/><rect x="396" y="1184.5" width="13" height="22.3" fill="#f06548"/><rect x="192" y="1206.2" width="38" height="22.3" fill="#f43c1e"/><rect x="230" y="1206.2" width="179" height="22.3" fill="#f66048"/><rect x="409" y="1206.2" width="47" height="22.3" fill="#f43c1e"/><rect x="230" y="1206.2" width="20" height="22.3" fill="#f76a48"/><rect x="396" y="1206.2" width="13" height="22.3" fill="#f76a48"/><rect x="192" y="1227.9" width="38" height="22.3" fill="#f43c1e"/><rect x="230" y="1227.9" width="179" height="22.3" fill="#f66048"/><rect x="409" y="1227.9" width="47" height="22.3" fill="#f43c1e"/><rect x="230" y="1227.9" width="20" height="22.3" fill="#f76a48"/><rect x="396" y="1227.9" width="13" height="22.3" fill="#f76a48"/><rect x="192" y="1249.6" width="38" height="22.3" fill="#f43c1e"/><rect x="230" y="1249.6" width="179" height="22.3" fill="#d85048"/><rect x="409" y="1249.6" width="47" height="22.3" fill="#f43c1e"/><rect x="230" y="1249.6" width="20" height="22.3" fill="#de5d48"/><rect x="396" y="1249.6" width="13" height="22.3" fill="#de5d48"/><rect x="192" y="1271.3" width="38" height="22.3" fill="#d7341e"/><rect x="230" y="1271.3" width="179" height="22.3" fill="#a04b46"/><rect x="409" y="1271.3" width="47" height="22.3" fill="#d7341e"/><rect x="230" y="1271.3" width="20" height="22.3" fill="#b05846"/><rect x="396" y="1271.3" width="13" height="22.3" fill="#b05846"/><rect x="192" y="1293.0" width="38" height="22.3" fill="#f43c1e"/><rect x="230" y="1293.0" width="179" height="22.3" fill="#b24c48"/><rect x="409" y="1293.0" width="47" height="22.3" fill="#f43c1e"/><rect x="230" y="1293.0" width="20" height="22.3" fill="#bf5948"/><rect x="396" y="1293.0" width="13" height="22.3" fill="#bf5948"/><rect x="192" y="1314.7" width="38" height="22.3" fill="#f45023"/><rect x="230" y="1314.7" width="179" height="22.3" fill="#e65048"/><rect x="409" y="1314.7" width="47" height="22.3" fill="#f45023"/><rect x="230" y="1314.7" width="20" height="22.3" fill="#ea5d48"/><rect x="396" y="1314.7" width="13" height="22.3" fill="#ea5d48"/><rect x="192" y="1336.3" width="38" height="22.3" fill="#f03c1e"/><rect x="230" y="1336.3" width="179" height="22.3" fill="#f66448"/><rect x="409" y="1336.3" width="47" height="22.3" fill="#f03c1e"/><rect x="230" y="1336.3" width="20" height="22.3" fill="#f76d48"/><rect x="396" y="1336.3" width="13" height="22.3" fill="#f76d48"/><rect x="192" y="1358.0" width="38" height="22.3" fill="#f45223"/><rect x="230" y="1358.0" width="179" height="22.3" fill="#f66e48"/><rect x="409" y="1358.0" width="47" height="22.3" fill="#f45223"/><rect x="230" y="1358.0" width="20" height="22.3" fill="#f77548"/><rect x="396" y="1358.0" width="13" height="22.3" fill="#f77548"/><rect x="192" y="1379.7" width="38" height="22.3" fill="#f44e23"/><rect x="230" y="1379.7" width="179" height="22.3" fill="#f66948"/><rect x="409" y="1379.7" width="47" height="22.3" fill="#f44e23"/><rect x="230" y="1379.7" width="20" height="22.3" fill="#f77148"/><rect x="396" y="1379.7" width="13" height="22.3" fill="#f77148"/><rect x="192" y="1401.4" width="38" height="22.3" fill="#f45023"/><rect x="230" y="1401.4" width="179" height="22.3" fill="#f66c48"/><rect x="409" y="1401.4" width="47" height="22.3" fill="#f45023"/><rect x="230" y="1401.4" width="20" height="22.3" fill="#f77448"/><rect x="396" y="1401.4" width="13" height="22.3" fill="#f77448"/><rect x="192" y="1423.1" width="38" height="22.3" fill="#f66428"/><rect x="230" y="1423.1" width="179" height="22.3" fill="#f88246"/><rect x="409" y="1423.1" width="47" height="22.3" fill="#f66428"/><rect x="230" y="1423.1" width="20" height="22.3" fill="#f88646"/><rect x="396" y="1423.1" width="13" height="22.3" fill="#f88646"/><rect x="192" y="1444.8" width="38" height="22.3" fill="#f43c1e"/><rect x="230" y="1444.8" width="179" height="22.3" fill="#f66248"/><rect x="409" y="1444.8" width="47" height="22.3" fill="#f43c1e"/><rect x="230" y="1444.8" width="20" height="22.3" fill="#f76b48"/><rect x="396" y="1444.8" width="13" height="22.3" fill="#f76b48"/><rect x="192" y="1466.4" width="38" height="22.3" fill="#f43a1e"/><rect x="230" y="1466.4" width="179" height="22.3" fill="#f45c48"/><rect x="409" y="1466.4" width="47" height="22.3" fill="#f43a1e"/><rect x="230" y="1466.4" width="20" height="22.3" fill="#f56648"/><rect x="396" y="1466.4" width="13" height="22.3" fill="#f56648"/><rect x="192" y="1488.1" width="38" height="22.3" fill="#f43a1e"/><rect x="230" y="1488.1" width="179" height="22.3" fill="#f05848"/><rect x="409" y="1488.1" width="47" height="22.3" fill="#f43a1e"/><rect x="230" y="1488.1" width="20" height="22.3" fill="#f26348"/><rect x="396" y="1488.1" width="13" height="22.3" fill="#f26348"/><rect x="192" y="1509.8" width="38" height="22.3" fill="#f43a1e"/><rect x="230" y="1509.8" width="179" height="22.3" fill="#f45c48"/><rect x="409" y="1509.8" width="47" height="22.3" fill="#f43a1e"/><rect x="230" y="1509.8" width="20" height="22.3" fill="#f56648"/><rect x="396" y="1509.8" width="13" height="22.3" fill="#f56648"/><rect x="192" y="1531.5" width="38" height="22.3" fill="#f43a1e"/><rect x="230" y="1531.5" width="179" height="22.3" fill="#f05848"/><rect x="409" y="1531.5" width="47" height="22.3" fill="#f43a1e"/><rect x="230" y="1531.5" width="20" height="22.3" fill="#f26348"/><rect x="396" y="1531.5" width="13" height="22.3" fill="#f26348"/><rect x="192" y="1553.2" width="38" height="22.3" fill="#f43a1e"/><rect x="230" y="1553.2" width="179" height="22.3" fill="#ec5248"/><rect x="409" y="1553.2" width="47" height="22.3" fill="#f43a1e"/><rect x="230" y="1553.2" width="20" height="22.3" fill="#ef5e48"/><rect x="396" y="1553.2" width="13" height="22.3" fill="#ef5e48"/><rect x="192" y="1574.8" width="38" height="22.3" fill="#f43a1e"/><rect x="230" y="1574.8" width="179" height="22.3" fill="#e64e46"/><rect x="409" y="1574.8" width="47" height="22.3" fill="#f43a1e"/><rect x="230" y="1574.8" width="20" height="22.3" fill="#ea5b46"/><rect x="396" y="1574.8" width="13" height="22.3" fill="#ea5b46"/><rect x="192" y="1596.5" width="38" height="22.3" fill="#f43a1e"/><rect x="230" y="1596.5" width="179" height="22.3" fill="#e85048"/><rect x="409" y="1596.5" width="47" height="22.3" fill="#f43a1e"/><rect x="230" y="1596.5" width="20" height="22.3" fill="#eb5d48"/><rect x="396" y="1596.5" width="13" height="22.3" fill="#eb5d48"/><rect x="192" y="1618.2" width="38" height="22.3" fill="#f43a1e"/><rect x="230" y="1618.2" width="179" height="22.3" fill="#e65048"/><rect x="409" y="1618.2" width="47" height="22.3" fill="#f43a1e"/><rect x="230" y="1618.2" width="20" height="22.3" fill="#ea5d48"/><rect x="396" y="1618.2" width="13" height="22.3" fill="#ea5d48"/><rect x="192" y="1639.9" width="38" height="22.3" fill="#d7341e"/><rect x="230" y="1639.9" width="179" height="22.3" fill="#c84e46"/><rect x="409" y="1639.9" width="47" height="22.3" fill="#d7341e"/><rect x="230" y="1639.9" width="20" height="22.3" fill="#d15b46"/><rect x="396" y="1639.9" width="13" height="22.3" fill="#d15b46"/><rect x="192" y="1661.6" width="38" height="22.3" fill="#f43a1e"/><rect x="230" y="1661.6" width="179" height="22.3" fill="#e85048"/><rect x="409" y="1661.6" width="47" height="22.3" fill="#f43a1e"/><rect x="230" y="1661.6" width="20" height="22.3" fill="#eb5d48"/><rect x="396" y="1661.6" width="13" height="22.3" fill="#eb5d48"/><rect x="192" y="1683.3" width="38" height="22.3" fill="#f43a1e"/><rect x="230" y="1683.3" width="179" height="22.3" fill="#e85048"/><rect x="409" y="1683.3" width="47" height="22.3" fill="#f43a1e"/><rect x="230" y="1683.3" width="20" height="22.3" fill="#eb5d48"/><rect x="396" y="1683.3" width="13" height="22.3" fill="#eb5d48"/><rect x="192" y="1705.0" width="38" height="22.3" fill="#ec381e"/><rect x="230" y="1705.0" width="179" height="22.3" fill="#dc5048"/><rect x="409" y="1705.0" width="47" height="22.3" fill="#ec381e"/><rect x="230" y="1705.0" width="20" height="22.3" fill="#e15d48"/><rect x="396" y="1705.0" width="13" height="22.3" fill="#e15d48"/><rect x="192" y="1726.6" width="38" height="22.3" fill="#d73720"/><rect x="230" y="1726.6" width="179" height="22.3" fill="#cd4e48"/><rect x="409" y="1726.6" width="47" height="22.3" fill="#d73720"/><rect x="230" y="1726.6" width="20" height="22.3" fill="#d55b48"/><rect x="396" y="1726.6" width="13" height="22.3" fill="#d55b48"/><rect x="192" y="1748.3" width="38" height="22.3" fill="#f65f28"/><rect x="230" y="1748.3" width="179" height="22.3" fill="#f89646"/><rect x="409" y="1748.3" width="47" height="22.3" fill="#f65f28"/><rect x="230" y="1748.3" width="20" height="22.3" fill="#f89646"/><rect x="396" y="1748.3" width="13" height="22.3" fill="#f89646"/><rect x="192" y="924.4" width="38" height="21.7" fill="#d73a24"/><rect x="230" y="924.4" width="20" height="21.7" fill="#e85048"/><rect x="192" y="1293.0" width="38" height="21.7" fill="#f46a28"/><rect x="230" y="1293.0" width="20" height="21.7" fill="#f89048"/><rect x="396" y="1748.3" width="13" height="22.3" fill="#4a48b0"/><rect x="409" y="1748.3" width="47" height="22.3" fill="#0a0a78"/><rect x="192" y="1748.3" width="38" height="22.3" fill="#f46028"/><rect x="231" y="455" width="178" height="14" fill="#484848"/><rect x="231" y="1770" width="178" height="20" fill="#484848"/><rect x="251" y="455" width="9" height="1335" fill="#484848"/><rect x="320" y="455" width="8.5" height="1335" fill="#484848"/><rect x="388" y="455" width="8.5" height="1335" fill="#484848"/><rect x="230" y="448" width="179" height="1342" fill="none" stroke="#9be07a" stroke-width="2"/><rect x="225" y="442" width="12" height="12" fill="#fff" stroke="#222" stroke-width="1"/><rect x="403" y="442" width="12" height="12" fill="#fff" stroke="#222" stroke-width="1"/><rect x="225" y="1784" width="12" height="12" fill="#fff" stroke="#222" stroke-width="1"/><rect x="403" y="1784" width="12" height="12" fill="#fff" stroke="#222" stroke-width="1"/></svg>
<svg style="position:absolute;left:0;top:0" width="1500" height="1700"><rect x="680.5" y="716.6" width="798.2" height="901.9" fill="#fff"/><rect x="680.5" y="716.6" width="798.2" height="856.4" fill="#3b0f4b"/><rect x="682" y="716.6" width="11" height="14.4" fill="#61c85f"/><rect x="682" y="730.9" width="10" height="14.4" fill="#76d053"/><rect x="694" y="730.9" width="4" height="14.4" fill="#64bc77"/><rect x="682" y="745.2" width="11" height="14.4" fill="#62c95e"/><rect x="682" y="759.5" width="9" height="14.4" fill="#4ac06c"/><rect x="702" y="759.5" width="2" height="14.4" fill="#62bd76"/><rect x="682" y="773.8" width="10" height="14.4" fill="#6acc5a"/><rect x="682" y="788.1" width="11" height="14.4" fill="#6ecd58"/><rect x="700" y="788.1" width="2" height="14.4" fill="#65bc78"/><rect x="682" y="802.5" width="8" height="14.4" fill="#48bf6e"/><rect x="682" y="816.8" width="10" height="14.4" fill="#6acc5a"/><rect x="695" y="816.8" width="4" height="14.4" fill="#64bc77"/><rect x="682" y="831.1" width="9" height="14.4" fill="#53c367"/><rect x="699" y="831.1" width="4" height="14.4" fill="#67bc79"/><rect x="682" y="845.4" width="11" height="14.4" fill="#56c466"/><rect x="682" y="859.7" width="9" height="14.4" fill="#7ad151"/><rect x="696" y="859.7" width="2" height="14.4" fill="#57c06f"/><rect x="682" y="874.0" width="7" height="14.4" fill="#48c06d"/><rect x="698" y="874.0" width="2" height="14.4" fill="#6dba7d"/><rect x="682" y="888.3" width="7" height="14.4" fill="#83d34b"/><rect x="692" y="888.3" width="3" height="14.4" fill="#70b97e"/><rect x="682" y="902.6" width="10" height="14.4" fill="#5cc762"/><rect x="695" y="902.6" width="4" height="14.4" fill="#63bd76"/><rect x="682" y="916.9" width="7" height="14.4" fill="#55c466"/><rect x="698" y="916.9" width="2" height="14.4" fill="#50c26a"/><rect x="682" y="931.2" width="7" height="14.4" fill="#4dc16b"/><rect x="699" y="931.2" width="2" height="14.4" fill="#60be74"/><rect x="682" y="945.6" width="8" height="14.4" fill="#6fce57"/><rect x="694" y="945.6" width="3" height="14.4" fill="#56c06e"/><rect x="682" y="959.9" width="7" height="14.4" fill="#6dcd58"/><rect x="692" y="959.9" width="3" height="14.4" fill="#72b980"/><rect x="682" y="974.2" width="11" height="14.4" fill="#7cd14f"/><rect x="695" y="974.2" width="2" height="14.4" fill="#6eba7d"/><rect x="682" y="988.5" width="11" height="14.4" fill="#5dc761"/><rect x="694" y="988.5" width="2" height="14.4" fill="#53c16c"/><rect x="682" y="1002.8" width="7" height="14.4" fill="#60c860"/><rect x="682" y="1017.1" width="9" height="14.4" fill="#59c664"/><rect x="695" y="1017.1" width="4" height="14.4" fill="#52c16c"/><rect x="682" y="1031.4" width="7" height="14.4" fill="#6ccd58"/><rect x="699" y="1031.4" width="2" height="14.4" fill="#5cbe72"/><rect x="682" y="1045.7" width="10" height="14.4" fill="#83d34b"/><rect x="682" y="1060.0" width="10" height="14.4" fill="#4dc16b"/><rect x="695" y="1060.0" width="4" height="14.4" fill="#54c16d"/><rect x="682" y="1074.3" width="8" height="14.4" fill="#54c467"/><rect x="700" y="1074.3" width="2" height="14.4" fill="#65bc78"/><rect x="682" y="1088.7" width="10" height="14.4" fill="#70ce56"/><rect x="682" y="1103.0" width="10" height="14.4" fill="#6acc5a"/><rect x="700" y="1103.0" width="3" height="14.4" fill="#53c16c"/><rect x="682" y="1117.3" width="10" height="14.4" fill="#53c367"/><rect x="701" y="1117.3" width="3" height="14.4" fill="#6cba7c"/><rect x="682" y="1131.6" width="8" height="14.4" fill="#57c565"/><rect x="682" y="1145.9" width="8" height="14.4" fill="#85d34a"/><rect x="701" y="1145.9" width="4" height="14.4" fill="#63bd76"/><rect x="682" y="1160.2" width="8" height="14.4" fill="#49c06d"/><rect x="682" y="1174.5" width="7" height="14.4" fill="#51c368"/><rect x="695" y="1174.5" width="2" height="14.4" fill="#5ebe73"/><rect x="682" y="1188.8" width="9" height="14.4" fill="#47bf6e"/><rect x="694" y="1188.8" width="2" height="14.4" fill="#63bd77"/><rect x="682" y="1203.1" width="10" height="14.4" fill="#5bc663"/><rect x="682" y="1217.5" width="11" height="14.4" fill="#6ecd58"/><rect x="692" y="1217.5" width="2" height="14.4" fill="#54c16d"/><rect x="682" y="1231.8" width="9" height="14.4" fill="#62c95e"/><rect x="682" y="1246.1" width="7" height="14.4" fill="#84d34a"/><rect x="693" y="1246.1" width="4" height="14.4" fill="#52c16c"/><rect x="682" y="1260.4" width="8" height="14.4" fill="#58c564"/><rect x="682" y="1274.7" width="11" height="14.4" fill="#49c06d"/><rect x="694" y="1274.7" width="3" height="14.4" fill="#51c26b"/><rect x="682" y="1289.0" width="10" height="14.4" fill="#5ac663"/><rect x="682" y="1303.3" width="10" height="14.4" fill="#7cd24f"/><rect x="682" y="1317.6" width="10" height="14.4" fill="#46bf6f"/><rect x="698" y="1317.6" width="3" height="14.4" fill="#65bc78"/><rect x="682" y="1331.9" width="11" height="14.4" fill="#69cb5a"/><rect x="693" y="1331.9" width="3" height="14.4" fill="#52c16c"/><rect x="682" y="1346.2" width="9" height="14.4" fill="#7dd24f"/><rect x="701" y="1346.2" width="3" height="14.4" fill="#69bb7a"/><rect x="682" y="1360.6" width="11" height="14.4" fill="#60c860"/><rect x="692" y="1360.6" width="3" height="14.4" fill="#6abb7b"/><rect x="682" y="1374.9" width="10" height="14.4" fill="#6acc5a"/><rect x="693" y="1374.9" width="3" height="14.4" fill="#71b97f"/><rect x="682" y="1389.2" width="10" height="14.4" fill="#76d053"/><rect x="696" y="1389.2" width="2" height="14.4" fill="#4fc26a"/><rect x="682" y="1403.5" width="8" height="14.4" fill="#6fcd57"/><rect x="697" y="1403.5" width="4" height="14.4" fill="#6abb7b"/><rect x="682" y="1417.8" width="10" height="14.4" fill="#81d34c"/><rect x="682" y="1432.1" width="9" height="14.4" fill="#59c564"/><rect x="695" y="1432.1" width="2" height="14.4" fill="#5ebe73"/><rect x="682" y="1446.4" width="11" height="14.4" fill="#5cc762"/><rect x="682" y="1460.7" width="8" height="14.4" fill="#51c368"/><rect x="692" y="1460.7" width="4" height="14.4" fill="#6dba7c"/><rect x="682" y="1475.0" width="9" height="14.4" fill="#48bf6e"/><rect x="682" y="1489.3" width="10" height="14.4" fill="#4bc16c"/><rect x="698" y="1489.3" width="3" height="14.4" fill="#57c06f"/><rect x="682" y="1503.7" width="10" height="14.4" fill="#6ccc59"/><rect x="701" y="1503.7" width="3" height="14.4" fill="#68bb7a"/><rect x="682" y="1518.0" width="7" height="14.4" fill="#58c564"/><rect x="702" y="1518.0" width="4" height="14.4" fill="#65bc77"/><rect x="682" y="1532.3" width="9" height="14.4" fill="#56c466"/><rect x="692" y="1532.3" width="4" height="14.4" fill="#6bba7b"/><rect x="682" y="1546.6" width="10" height="14.4" fill="#4dc16b"/><rect x="696" y="1546.6" width="2" height="14.4" fill="#6abb7b"/><rect x="718" y="1560.7" width="2" height="14.3" fill="#79b989"/><rect x="742" y="1560.7" width="2" height="14.3" fill="#5fc860"/><rect x="766" y="1560.7" width="3" height="14.3" fill="#80bc85"/><rect x="784" y="1560.7" width="2" height="14.3" fill="#86be81"/><rect x="802" y="1560.7" width="2" height="14.3" fill="#7bba88"/><rect x="804" y="1560.7" width="3" height="14.3" fill="#8cc07e"/><rect x="814" y="1560.7" width="3" height="14.3" fill="#41bc72"/><rect x="828" y="1560.7" width="2" height="14.3" fill="#7ebb86"/><rect x="832" y="1560.7" width="2" height="14.3" fill="#77b88a"/><rect x="880" y="1560.7" width="2" height="14.3" fill="#4bc06c"/><rect x="904" y="1560.7" width="3" height="14.3" fill="#75b78c"/><rect x="906" y="1560.7" width="2" height="14.3" fill="#74b78c"/><rect x="910" y="1560.7" width="2" height="14.3" fill="#41bc72"/><rect x="922" y="1560.7" width="2" height="14.3" fill="#4fc269"/><rect x="952" y="1560.7" width="2" height="14.3" fill="#6fcd57"/><rect x="976" y="1560.7" width="3" height="14.3" fill="#41bc72"/><rect x="988" y="1560.7" width="2" height="14.3" fill="#4dc16b"/><rect x="1146" y="1560.7" width="3" height="14.3" fill="#85bd82"/><rect x="738" y="1546.4" width="2" height="14.3" fill="#8abf7f"/><rect x="754" y="1546.4" width="3" height="14.3" fill="#75b78b"/><rect x="766" y="1546.4" width="3" height="14.3" fill="#56c466"/><rect x="778" y="1546.4" width="2" height="14.3" fill="#78d151"/><rect x="784" y="1546.4" width="2" height="14.3" fill="#61c95f"/><rect x="796" y="1546.4" width="2" height="14.3" fill="#77b98a"/><rect x="820" y="1546.4" width="2" height="14.3" fill="#41bc72"/><rect x="850" y="1546.4" width="2" height="14.3" fill="#8cc07e"/><rect x="870" y="1546.4" width="2" height="14.3" fill="#53c367"/><rect x="880" y="1546.4" width="3" height="14.3" fill="#7bba88"/><rect x="900" y="1546.4" width="2" height="14.3" fill="#6acc5a"/><rect x="910" y="1546.4" width="2" height="14.3" fill="#67ca5c"/><rect x="916" y="1546.4" width="2" height="14.3" fill="#63c95e"/><rect x="940" y="1546.4" width="2" height="14.3" fill="#8ec17d"/><rect x="960" y="1546.4" width="2" height="14.3" fill="#8abf80"/><rect x="964" y="1546.4" width="2" height="14.3" fill="#5ec761"/><rect x="1008" y="1546.4" width="3" height="14.3" fill="#7ebb86"/><rect x="1102" y="1546.4" width="3" height="14.3" fill="#8cc07e"/><rect x="1204" y="1546.4" width="2" height="14.3" fill="#79b989"/><rect x="702" y="1532.1" width="2" height="14.3" fill="#4cc16b"/><rect x="732" y="1532.1" width="3" height="14.3" fill="#5cc762"/><rect x="744" y="1532.1" width="2" height="14.3" fill="#56c466"/><rect x="750" y="1532.1" width="3" height="14.3" fill="#80bc85"/><rect x="760" y="1532.1" width="2" height="14.3" fill="#76b88b"/><rect x="766" y="1532.1" width="2" height="14.3" fill="#54c466"/><rect x="784" y="1532.1" width="3" height="14.3" fill="#59c664"/><rect x="786" y="1532.1" width="2" height="14.3" fill="#7ebb86"/><rect x="796" y="1532.1" width="2" height="14.3" fill="#69cb5a"/><rect x="808" y="1532.1" width="2" height="14.3" fill="#49c06d"/><rect x="810" y="1532.1" width="2" height="14.3" fill="#82bd84"/><rect x="832" y="1532.1" width="2" height="14.3" fill="#8ac07f"/><rect x="850" y="1532.1" width="2" height="14.3" fill="#53c367"/><rect x="930" y="1532.1" width="2" height="14.3" fill="#4bc16c"/><rect x="952" y="1532.1" width="2" height="14.3" fill="#40bb73"/><rect x="964" y="1532.1" width="3" height="14.3" fill="#79d151"/><rect x="966" y="1532.1" width="2" height="14.3" fill="#8bc07e"/><rect x="702" y="1517.8" width="2" height="14.3" fill="#87be81"/><rect x="706" y="1517.8" width="2" height="14.3" fill="#51c368"/><rect x="732" y="1517.8" width="2" height="14.3" fill="#85bd82"/><rect x="742" y="1517.8" width="2" height="14.3" fill="#74b78c"/><rect x="760" y="1517.8" width="2" height="14.3" fill="#55c466"/><rect x="772" y="1517.8" width="2" height="14.3" fill="#5ec761"/><rect x="784" y="1517.8" width="2" height="14.3" fill="#42bc71"/><rect x="826" y="1517.8" width="2" height="14.3" fill="#3dba74"/><rect x="828" y="1517.8" width="2" height="14.3" fill="#7cba88"/><rect x="838" y="1517.8" width="2" height="14.3" fill="#50c269"/><rect x="850" y="1517.8" width="2" height="14.3" fill="#77b98a"/><rect x="880" y="1517.8" width="3" height="14.3" fill="#87be80"/><rect x="882" y="1517.8" width="2" height="14.3" fill="#47bf6e"/><rect x="900" y="1517.8" width="2" height="14.3" fill="#5bc662"/><rect x="922" y="1517.8" width="2" height="14.3" fill="#76b88b"/><rect x="942" y="1517.8" width="2" height="14.3" fill="#63c95e"/><rect x="952" y="1517.8" width="2" height="14.3" fill="#87be81"/><rect x="958" y="1517.8" width="3" height="14.3" fill="#76b88b"/><rect x="960" y="1517.8" width="2" height="14.3" fill="#7dbb86"/><rect x="1008" y="1517.8" width="2" height="14.3" fill="#64ca5d"/><rect x="1020" y="1517.8" width="2" height="14.3" fill="#68cb5b"/><rect x="708" y="1503.5" width="2" height="14.3" fill="#8bc07e"/><rect x="712" y="1503.5" width="2" height="14.3" fill="#3eba73"/><rect x="732" y="1503.5" width="2" height="14.3" fill="#80bc85"/><rect x="760" y="1503.5" width="2" height="14.3" fill="#7fbc85"/><rect x="784" y="1503.5" width="2" height="14.3" fill="#76d053"/><rect x="820" y="1503.5" width="2" height="14.3" fill="#5dc761"/><rect x="828" y="1503.5" width="2" height="14.3" fill="#82bd84"/><rect x="858" y="1503.5" width="2" height="14.3" fill="#43bd71"/><rect x="880" y="1503.5" width="2" height="14.3" fill="#8abf80"/><rect x="894" y="1503.5" width="2" height="14.3" fill="#76b88b"/><rect x="900" y="1503.5" width="3" height="14.3" fill="#78b98a"/><rect x="958" y="1503.5" width="3" height="14.3" fill="#8abf7f"/><rect x="1008" y="1503.5" width="2" height="14.3" fill="#83bd83"/><rect x="1072" y="1503.5" width="2" height="14.3" fill="#76b88a"/><rect x="1098" y="1503.5" width="2" height="14.3" fill="#75d053"/><rect x="706" y="1489.2" width="2" height="14.3" fill="#41bc72"/><rect x="724" y="1489.2" width="2" height="14.3" fill="#8dc17d"/><rect x="766" y="1489.2" width="2" height="14.3" fill="#3db974"/><rect x="832" y="1489.2" width="3" height="14.3" fill="#76b88b"/><rect x="850" y="1489.2" width="2" height="14.3" fill="#78b98a"/><rect x="898" y="1489.2" width="2" height="14.3" fill="#42bc71"/><rect x="906" y="1489.2" width="2" height="14.3" fill="#60c860"/><rect x="910" y="1489.2" width="3" height="14.3" fill="#40bb72"/><rect x="924" y="1489.2" width="2" height="14.3" fill="#88bf80"/><rect x="940" y="1489.2" width="2" height="14.3" fill="#8bc07e"/><rect x="972" y="1489.2" width="2" height="14.3" fill="#7bba88"/><rect x="982" y="1489.2" width="2" height="14.3" fill="#79b989"/><rect x="1002" y="1489.2" width="3" height="14.3" fill="#6fcd57"/><rect x="1044" y="1489.2" width="2" height="14.3" fill="#8cc07e"/><rect x="1072" y="1489.2" width="2" height="14.3" fill="#48c06d"/><rect x="1198" y="1489.2" width="2" height="14.3" fill="#88bf80"/><rect x="1336" y="1489.2" width="3" height="14.3" fill="#80bc85"/><rect x="732" y="1474.9" width="3" height="14.3" fill="#79b989"/><rect x="738" y="1474.9" width="2" height="14.3" fill="#66ca5c"/><rect x="760" y="1474.9" width="3" height="14.3" fill="#79b989"/><rect x="802" y="1474.9" width="2" height="14.3" fill="#4ac06c"/><rect x="832" y="1474.9" width="2" height="14.3" fill="#81bc85"/><rect x="840" y="1474.9" width="2" height="14.3" fill="#88be80"/><rect x="850" y="1474.9" width="2" height="14.3" fill="#7bba88"/><rect x="880" y="1474.9" width="3" height="14.3" fill="#7ebb86"/><rect x="910" y="1474.9" width="2" height="14.3" fill="#88bf80"/><rect x="934" y="1474.9" width="2" height="14.3" fill="#75b78c"/><rect x="940" y="1474.9" width="2" height="14.3" fill="#49c06d"/><rect x="942" y="1474.9" width="2" height="14.3" fill="#57c565"/><rect x="960" y="1474.9" width="2" height="14.3" fill="#8ac07f"/><rect x="966" y="1474.9" width="2" height="14.3" fill="#74b78c"/><rect x="1002" y="1474.9" width="3" height="14.3" fill="#3eba73"/><rect x="702" y="1460.5" width="3" height="14.3" fill="#5fc860"/><rect x="718" y="1460.5" width="2" height="14.3" fill="#86be81"/><rect x="720" y="1460.5" width="2" height="14.3" fill="#43be70"/><rect x="732" y="1460.5" width="2" height="14.3" fill="#7cba87"/><rect x="738" y="1460.5" width="2" height="14.3" fill="#7cbb87"/><rect x="742" y="1460.5" width="3" height="14.3" fill="#42bd71"/><rect x="766" y="1460.5" width="2" height="14.3" fill="#49c06d"/><rect x="772" y="1460.5" width="2" height="14.3" fill="#81bc85"/><rect x="774" y="1460.5" width="2" height="14.3" fill="#7aba88"/><rect x="784" y="1460.5" width="3" height="14.3" fill="#71ce56"/><rect x="796" y="1460.5" width="2" height="14.3" fill="#5dc762"/><rect x="820" y="1460.5" width="2" height="14.3" fill="#8ec17c"/><rect x="822" y="1460.5" width="2" height="14.3" fill="#76b88a"/><rect x="826" y="1460.5" width="2" height="14.3" fill="#78d151"/><rect x="832" y="1460.5" width="3" height="14.3" fill="#57c565"/><rect x="850" y="1460.5" width="2" height="14.3" fill="#74b78c"/><rect x="852" y="1460.5" width="2" height="14.3" fill="#79b989"/><rect x="880" y="1460.5" width="2" height="14.3" fill="#3fba73"/><rect x="906" y="1460.5" width="2" height="14.3" fill="#7bba88"/><rect x="912" y="1460.5" width="2" height="14.3" fill="#82bd84"/><rect x="922" y="1460.5" width="2" height="14.3" fill="#85bd82"/><rect x="928" y="1460.5" width="2" height="14.3" fill="#75b88b"/><rect x="940" y="1460.5" width="3" height="14.3" fill="#62c95f"/><rect x="948" y="1460.5" width="2" height="14.3" fill="#53c467"/><rect x="952" y="1460.5" width="2" height="14.3" fill="#74b78c"/><rect x="972" y="1460.5" width="2" height="14.3" fill="#63c95e"/><rect x="982" y="1460.5" width="2" height="14.3" fill="#5cc762"/><rect x="1006" y="1460.5" width="2" height="14.3" fill="#8abf7f"/><rect x="1008" y="1460.5" width="3" height="14.3" fill="#8bc07e"/><rect x="1020" y="1460.5" width="2" height="14.3" fill="#78d151"/><rect x="1026" y="1460.5" width="2" height="14.3" fill="#7fbb85"/><rect x="1044" y="1460.5" width="3" height="14.3" fill="#82bd84"/><rect x="1048" y="1460.5" width="2" height="14.3" fill="#4dc16b"/><rect x="1050" y="1460.5" width="3" height="14.3" fill="#7cba88"/><rect x="1086" y="1460.5" width="2" height="14.3" fill="#8ec17c"/><rect x="1104" y="1460.5" width="2" height="14.3" fill="#54c467"/><rect x="1120" y="1460.5" width="2" height="14.3" fill="#53c367"/><rect x="1152" y="1460.5" width="2" height="14.3" fill="#77b88a"/><rect x="1182" y="1460.5" width="3" height="14.3" fill="#80bc85"/><rect x="1212" y="1460.5" width="2" height="14.3" fill="#87be81"/><rect x="702" y="1446.2" width="2" height="14.3" fill="#42bd71"/><rect x="708" y="1446.2" width="2" height="14.3" fill="#7cba88"/><rect x="724" y="1446.2" width="2" height="14.3" fill="#5dc762"/><rect x="738" y="1446.2" width="2" height="14.3" fill="#83bd83"/><rect x="742" y="1446.2" width="2" height="14.3" fill="#54c467"/><rect x="754" y="1446.2" width="2" height="14.3" fill="#75b78c"/><rect x="760" y="1446.2" width="2" height="14.3" fill="#8abf7f"/><rect x="766" y="1446.2" width="2" height="14.3" fill="#7bba88"/><rect x="772" y="1446.2" width="2" height="14.3" fill="#54c467"/><rect x="780" y="1446.2" width="3" height="14.3" fill="#44be70"/><rect x="796" y="1446.2" width="2" height="14.3" fill="#83bd83"/><rect x="820" y="1446.2" width="3" height="14.3" fill="#85bd82"/><rect x="826" y="1446.2" width="2" height="14.3" fill="#79b989"/><rect x="850" y="1446.2" width="2" height="14.3" fill="#6ccc58"/><rect x="852" y="1446.2" width="2" height="14.3" fill="#62c95f"/><rect x="864" y="1446.2" width="2" height="14.3" fill="#40bb72"/><rect x="880" y="1446.2" width="2" height="14.3" fill="#47bf6e"/><rect x="886" y="1446.2" width="2" height="14.3" fill="#7ebb86"/><rect x="900" y="1446.2" width="2" height="14.3" fill="#7ebb86"/><rect x="916" y="1446.2" width="2" height="14.3" fill="#89bf80"/><rect x="922" y="1446.2" width="2" height="14.3" fill="#84bd83"/><rect x="948" y="1446.2" width="3" height="14.3" fill="#81bc84"/><rect x="952" y="1446.2" width="2" height="14.3" fill="#76b88b"/><rect x="960" y="1446.2" width="2" height="14.3" fill="#76b88b"/><rect x="1002" y="1446.2" width="3" height="14.3" fill="#4ec26a"/><rect x="1008" y="1446.2" width="2" height="14.3" fill="#85be82"/><rect x="1020" y="1446.2" width="3" height="14.3" fill="#8ec17d"/><rect x="1026" y="1446.2" width="3" height="14.3" fill="#85bd82"/><rect x="1038" y="1446.2" width="2" height="14.3" fill="#48bf6e"/><rect x="1044" y="1446.2" width="2" height="14.3" fill="#7cba87"/><rect x="1048" y="1446.2" width="2" height="14.3" fill="#7fbc85"/><rect x="1068" y="1446.2" width="2" height="14.3" fill="#5bc663"/><rect x="1072" y="1446.2" width="2" height="14.3" fill="#72cf55"/><rect x="1078" y="1446.2" width="2" height="14.3" fill="#7bba88"/><rect x="1084" y="1446.2" width="2" height="14.3" fill="#65ca5d"/><rect x="1086" y="1446.2" width="2" height="14.3" fill="#75b88b"/><rect x="1098" y="1446.2" width="2" height="14.3" fill="#7cbb87"/><rect x="1114" y="1446.2" width="2" height="14.3" fill="#89bf80"/><rect x="1128" y="1446.2" width="2" height="14.3" fill="#8ec17c"/><rect x="1132" y="1446.2" width="2" height="14.3" fill="#7bba88"/><rect x="1146" y="1446.2" width="3" height="14.3" fill="#7aba89"/><rect x="1152" y="1446.2" width="3" height="14.3" fill="#8ac07f"/><rect x="1156" y="1446.2" width="2" height="14.3" fill="#87be81"/><rect x="1168" y="1446.2" width="2" height="14.3" fill="#4cc16b"/><rect x="1176" y="1446.2" width="2" height="14.3" fill="#5ec761"/><rect x="1182" y="1446.2" width="2" height="14.3" fill="#7aba88"/><rect x="1198" y="1446.2" width="2" height="14.3" fill="#74b78c"/><rect x="1200" y="1446.2" width="3" height="14.3" fill="#41bc72"/><rect x="1204" y="1446.2" width="3" height="14.3" fill="#7dbb87"/><rect x="1290" y="1446.2" width="2" height="14.3" fill="#48bf6e"/><rect x="702" y="1431.9" width="2" height="14.3" fill="#87be81"/><rect x="720" y="1431.9" width="2" height="14.3" fill="#68cb5b"/><rect x="724" y="1431.9" width="3" height="14.3" fill="#40bb73"/><rect x="738" y="1431.9" width="2" height="14.3" fill="#7bba88"/><rect x="744" y="1431.9" width="3" height="14.3" fill="#73cf55"/><rect x="760" y="1431.9" width="3" height="14.3" fill="#76b88b"/><rect x="796" y="1431.9" width="2" height="14.3" fill="#77b88a"/><rect x="810" y="1431.9" width="2" height="14.3" fill="#7fbc85"/><rect x="826" y="1431.9" width="2" height="14.3" fill="#60c85f"/><rect x="828" y="1431.9" width="3" height="14.3" fill="#3dba74"/><rect x="852" y="1431.9" width="2" height="14.3" fill="#74b78c"/><rect x="856" y="1431.9" width="2" height="14.3" fill="#82bd84"/><rect x="898" y="1431.9" width="2" height="14.3" fill="#4dc16b"/><rect x="900" y="1431.9" width="2" height="14.3" fill="#70ce56"/><rect x="904" y="1431.9" width="2" height="14.3" fill="#7cba87"/><rect x="912" y="1431.9" width="2" height="14.3" fill="#43bd71"/><rect x="918" y="1431.9" width="3" height="14.3" fill="#7ebb86"/><rect x="928" y="1431.9" width="2" height="14.3" fill="#8ec17d"/><rect x="934" y="1431.9" width="3" height="14.3" fill="#75b88b"/><rect x="940" y="1431.9" width="2" height="14.3" fill="#64c95d"/><rect x="960" y="1431.9" width="2" height="14.3" fill="#41bc72"/><rect x="964" y="1431.9" width="2" height="14.3" fill="#67cb5b"/><rect x="966" y="1431.9" width="3" height="14.3" fill="#72ce55"/><rect x="984" y="1431.9" width="2" height="14.3" fill="#57c565"/><rect x="1002" y="1431.9" width="2" height="14.3" fill="#81bc85"/><rect x="1008" y="1431.9" width="2" height="14.3" fill="#75b88b"/><rect x="1014" y="1431.9" width="3" height="14.3" fill="#77d052"/><rect x="1020" y="1431.9" width="3" height="14.3" fill="#3fbb73"/><rect x="1026" y="1431.9" width="2" height="14.3" fill="#78b98a"/><rect x="1048" y="1431.9" width="3" height="14.3" fill="#77b88a"/><rect x="1050" y="1431.9" width="2" height="14.3" fill="#60c860"/><rect x="1068" y="1431.9" width="3" height="14.3" fill="#7aba88"/><rect x="1090" y="1431.9" width="2" height="14.3" fill="#7aba88"/><rect x="1098" y="1431.9" width="2" height="14.3" fill="#8dc17d"/><rect x="1102" y="1431.9" width="3" height="14.3" fill="#81bc84"/><rect x="1104" y="1431.9" width="2" height="14.3" fill="#87be81"/><rect x="1108" y="1431.9" width="2" height="14.3" fill="#52c368"/><rect x="1114" y="1431.9" width="2" height="14.3" fill="#79b989"/><rect x="1120" y="1431.9" width="2" height="14.3" fill="#78b98a"/><rect x="1122" y="1431.9" width="2" height="14.3" fill="#8ec17c"/><rect x="1128" y="1431.9" width="3" height="14.3" fill="#42bd71"/><rect x="1152" y="1431.9" width="3" height="14.3" fill="#76b88b"/><rect x="1162" y="1431.9" width="2" height="14.3" fill="#7aba89"/><rect x="1174" y="1431.9" width="3" height="14.3" fill="#7bba88"/><rect x="1182" y="1431.9" width="2" height="14.3" fill="#72ce55"/><rect x="1198" y="1431.9" width="3" height="14.3" fill="#3fbb73"/><rect x="1204" y="1431.9" width="2" height="14.3" fill="#4bc06c"/><rect x="732" y="1417.6" width="2" height="14.3" fill="#62c95e"/><rect x="738" y="1417.6" width="2" height="14.3" fill="#76b88b"/><rect x="760" y="1417.6" width="2" height="14.3" fill="#76b88b"/><rect x="766" y="1417.6" width="3" height="14.3" fill="#82bd84"/><rect x="786" y="1417.6" width="2" height="14.3" fill="#85bd82"/><rect x="804" y="1417.6" width="2" height="14.3" fill="#80bc85"/><rect x="810" y="1417.6" width="2" height="14.3" fill="#8dc07e"/><rect x="820" y="1417.6" width="2" height="14.3" fill="#7cbb87"/><rect x="826" y="1417.6" width="2" height="14.3" fill="#80bc85"/><rect x="832" y="1417.6" width="2" height="14.3" fill="#75b88b"/><rect x="850" y="1417.6" width="2" height="14.3" fill="#64c95d"/><rect x="858" y="1417.6" width="2" height="14.3" fill="#58c564"/><rect x="870" y="1417.6" width="2" height="14.3" fill="#43be70"/><rect x="888" y="1417.6" width="3" height="14.3" fill="#78d052"/><rect x="906" y="1417.6" width="3" height="14.3" fill="#6bcc59"/><rect x="912" y="1417.6" width="2" height="14.3" fill="#82bd84"/><rect x="922" y="1417.6" width="2" height="14.3" fill="#5cc762"/><rect x="928" y="1417.6" width="3" height="14.3" fill="#7cba87"/><rect x="930" y="1417.6" width="2" height="14.3" fill="#7ebb86"/><rect x="960" y="1417.6" width="2" height="14.3" fill="#8ec17c"/><rect x="982" y="1417.6" width="2" height="14.3" fill="#8cc07e"/><rect x="996" y="1417.6" width="2" height="14.3" fill="#3fbb73"/><rect x="1008" y="1417.6" width="2" height="14.3" fill="#57c565"/><rect x="1012" y="1417.6" width="3" height="14.3" fill="#74b78c"/><rect x="1026" y="1417.6" width="3" height="14.3" fill="#3fba73"/><rect x="1030" y="1417.6" width="3" height="14.3" fill="#80bc85"/><rect x="1044" y="1417.6" width="2" height="14.3" fill="#83bd83"/><rect x="1048" y="1417.6" width="2" height="14.3" fill="#7bba88"/><rect x="1050" y="1417.6" width="2" height="14.3" fill="#65ca5d"/><rect x="1068" y="1417.6" width="2" height="14.3" fill="#84bd82"/><rect x="1072" y="1417.6" width="2" height="14.3" fill="#74b78c"/><rect x="1098" y="1417.6" width="2" height="14.3" fill="#87be80"/><rect x="1102" y="1417.6" width="2" height="14.3" fill="#6dcd58"/><rect x="1108" y="1417.6" width="2" height="14.3" fill="#82bd84"/><rect x="1132" y="1417.6" width="3" height="14.3" fill="#63c95e"/><rect x="1150" y="1417.6" width="2" height="14.3" fill="#80bc85"/><rect x="1152" y="1417.6" width="2" height="14.3" fill="#5ec761"/><rect x="1168" y="1417.6" width="2" height="14.3" fill="#6bcc59"/><rect x="1198" y="1417.6" width="2" height="14.3" fill="#6fcd57"/><rect x="1210" y="1417.6" width="2" height="14.3" fill="#68cb5b"/><rect x="708" y="1403.3" width="2" height="14.3" fill="#80bc85"/><rect x="718" y="1403.3" width="2" height="14.3" fill="#4cc16b"/><rect x="724" y="1403.3" width="2" height="14.3" fill="#8dc17d"/><rect x="732" y="1403.3" width="3" height="14.3" fill="#83bd83"/><rect x="738" y="1403.3" width="2" height="14.3" fill="#81bd84"/><rect x="742" y="1403.3" width="3" height="14.3" fill="#52c368"/><rect x="760" y="1403.3" width="2" height="14.3" fill="#8cc07e"/><rect x="766" y="1403.3" width="2" height="14.3" fill="#7dbb86"/><rect x="772" y="1403.3" width="2" height="14.3" fill="#7cbb87"/><rect x="774" y="1403.3" width="2" height="14.3" fill="#44be70"/><rect x="814" y="1403.3" width="2" height="14.3" fill="#7cbb87"/><rect x="816" y="1403.3" width="3" height="14.3" fill="#87be80"/><rect x="820" y="1403.3" width="2" height="14.3" fill="#86be81"/><rect x="828" y="1403.3" width="3" height="14.3" fill="#84bd83"/><rect x="832" y="1403.3" width="2" height="14.3" fill="#5bc663"/><rect x="850" y="1403.3" width="3" height="14.3" fill="#4ec26a"/><rect x="880" y="1403.3" width="2" height="14.3" fill="#65ca5d"/><rect x="898" y="1403.3" width="2" height="14.3" fill="#7ebb86"/><rect x="900" y="1403.3" width="3" height="14.3" fill="#3eba73"/><rect x="922" y="1403.3" width="3" height="14.3" fill="#8ac07f"/><rect x="936" y="1403.3" width="2" height="14.3" fill="#84bd82"/><rect x="940" y="1403.3" width="3" height="14.3" fill="#5ec761"/><rect x="952" y="1403.3" width="2" height="14.3" fill="#7aba88"/><rect x="960" y="1403.3" width="2" height="14.3" fill="#88bf80"/><rect x="1002" y="1403.3" width="2" height="14.3" fill="#49c06d"/><rect x="1020" y="1403.3" width="3" height="14.3" fill="#87be80"/><rect x="1024" y="1403.3" width="2" height="14.3" fill="#7fbc85"/><rect x="1048" y="1403.3" width="2" height="14.3" fill="#80bc85"/><rect x="1050" y="1403.3" width="2" height="14.3" fill="#8cc07e"/><rect x="1068" y="1403.3" width="2" height="14.3" fill="#8ac07f"/><rect x="1072" y="1403.3" width="2" height="14.3" fill="#79b989"/><rect x="1096" y="1403.3" width="2" height="14.3" fill="#76b88b"/><rect x="1102" y="1403.3" width="2" height="14.3" fill="#41bc72"/><rect x="1104" y="1403.3" width="2" height="14.3" fill="#87be81"/><rect x="1110" y="1403.3" width="2" height="14.3" fill="#51c369"/><rect x="1120" y="1403.3" width="2" height="14.3" fill="#65ca5d"/><rect x="1122" y="1403.3" width="2" height="14.3" fill="#6fcd57"/><rect x="1152" y="1403.3" width="2" height="14.3" fill="#77b88a"/><rect x="1164" y="1403.3" width="3" height="14.3" fill="#68cb5b"/><rect x="1168" y="1403.3" width="3" height="14.3" fill="#8ec17d"/><rect x="1182" y="1403.3" width="2" height="14.3" fill="#7ebb86"/><rect x="1198" y="1403.3" width="2" height="14.3" fill="#8dc17d"/><rect x="1200" y="1403.3" width="2" height="14.3" fill="#85bd82"/><rect x="1212" y="1403.3" width="2" height="14.3" fill="#41bc72"/><rect x="1374" y="1403.3" width="2" height="14.3" fill="#8ec17d"/><rect x="702" y="1389.0" width="3" height="14.3" fill="#5fc860"/><rect x="706" y="1389.0" width="2" height="14.3" fill="#6bcc59"/><rect x="708" y="1389.0" width="2" height="14.3" fill="#58c564"/><rect x="730" y="1389.0" width="2" height="14.3" fill="#80bc85"/><rect x="732" y="1389.0" width="3" height="14.3" fill="#66ca5c"/><rect x="738" y="1389.0" width="3" height="14.3" fill="#86be81"/><rect x="742" y="1389.0" width="2" height="14.3" fill="#53c367"/><rect x="744" y="1389.0" width="3" height="14.3" fill="#8cc07e"/><rect x="754" y="1389.0" width="2" height="14.3" fill="#83bd83"/><rect x="760" y="1389.0" width="2" height="14.3" fill="#47bf6e"/><rect x="766" y="1389.0" width="2" height="14.3" fill="#76b88b"/><rect x="796" y="1389.0" width="2" height="14.3" fill="#57c565"/><rect x="802" y="1389.0" width="2" height="14.3" fill="#77d052"/><rect x="810" y="1389.0" width="3" height="14.3" fill="#6acc5a"/><rect x="814" y="1389.0" width="2" height="14.3" fill="#7fbb86"/><rect x="820" y="1389.0" width="3" height="14.3" fill="#46bf6f"/><rect x="832" y="1389.0" width="2" height="14.3" fill="#87be81"/><rect x="852" y="1389.0" width="2" height="14.3" fill="#81bc85"/><rect x="886" y="1389.0" width="2" height="14.3" fill="#80bc85"/><rect x="892" y="1389.0" width="3" height="14.3" fill="#47bf6e"/><rect x="900" y="1389.0" width="2" height="14.3" fill="#8dc07e"/><rect x="904" y="1389.0" width="2" height="14.3" fill="#61c85f"/><rect x="906" y="1389.0" width="3" height="14.3" fill="#5ac663"/><rect x="910" y="1389.0" width="2" height="14.3" fill="#8ac07f"/><rect x="916" y="1389.0" width="2" height="14.3" fill="#51c368"/><rect x="924" y="1389.0" width="2" height="14.3" fill="#47bf6e"/><rect x="928" y="1389.0" width="2" height="14.3" fill="#75b78c"/><rect x="948" y="1389.0" width="2" height="14.3" fill="#61c85f"/><rect x="952" y="1389.0" width="2" height="14.3" fill="#8dc17d"/><rect x="958" y="1389.0" width="2" height="14.3" fill="#7dbb87"/><rect x="960" y="1389.0" width="2" height="14.3" fill="#5ac663"/><rect x="964" y="1389.0" width="2" height="14.3" fill="#85bd82"/><rect x="966" y="1389.0" width="2" height="14.3" fill="#8cc07e"/><rect x="984" y="1389.0" width="2" height="14.3" fill="#79b989"/><rect x="1002" y="1389.0" width="2" height="14.3" fill="#45be6f"/><rect x="1008" y="1389.0" width="2" height="14.3" fill="#40bb72"/><rect x="1030" y="1389.0" width="2" height="14.3" fill="#85be82"/><rect x="1032" y="1389.0" width="2" height="14.3" fill="#82bd84"/><rect x="1044" y="1389.0" width="2" height="14.3" fill="#78b98a"/><rect x="1054" y="1389.0" width="2" height="14.3" fill="#84bd83"/><rect x="1072" y="1389.0" width="2" height="14.3" fill="#88bf80"/><rect x="1114" y="1389.0" width="2" height="14.3" fill="#7fbc85"/><rect x="1120" y="1389.0" width="2" height="14.3" fill="#7cba87"/><rect x="1122" y="1389.0" width="2" height="14.3" fill="#79b989"/><rect x="1132" y="1389.0" width="3" height="14.3" fill="#77b88a"/><rect x="1144" y="1389.0" width="3" height="14.3" fill="#74b78c"/><rect x="1152" y="1389.0" width="3" height="14.3" fill="#3eba74"/><rect x="1164" y="1389.0" width="2" height="14.3" fill="#7ebb86"/><rect x="1168" y="1389.0" width="2" height="14.3" fill="#76b88b"/><rect x="1182" y="1389.0" width="2" height="14.3" fill="#7dbb86"/><rect x="1204" y="1389.0" width="2" height="14.3" fill="#47bf6e"/><rect x="1210" y="1389.0" width="3" height="14.3" fill="#8dc17d"/><rect x="1246" y="1389.0" width="3" height="14.3" fill="#77d052"/><rect x="706" y="1374.7" width="2" height="14.3" fill="#4fc26a"/><rect x="708" y="1374.7" width="2" height="14.3" fill="#54c467"/><rect x="724" y="1374.7" width="2" height="14.3" fill="#86be81"/><rect x="730" y="1374.7" width="2" height="14.3" fill="#73cf54"/><rect x="732" y="1374.7" width="2" height="14.3" fill="#84bd83"/><rect x="760" y="1374.7" width="2" height="14.3" fill="#78d152"/><rect x="762" y="1374.7" width="2" height="14.3" fill="#61c85f"/><rect x="766" y="1374.7" width="2" height="14.3" fill="#71ce56"/><rect x="772" y="1374.7" width="2" height="14.3" fill="#52c368"/><rect x="780" y="1374.7" width="2" height="14.3" fill="#7bba88"/><rect x="790" y="1374.7" width="2" height="14.3" fill="#78b98a"/><rect x="808" y="1374.7" width="2" height="14.3" fill="#8bc07f"/><rect x="816" y="1374.7" width="3" height="14.3" fill="#50c269"/><rect x="832" y="1374.7" width="2" height="14.3" fill="#81bc84"/><rect x="846" y="1374.7" width="2" height="14.3" fill="#76b88b"/><rect x="850" y="1374.7" width="2" height="14.3" fill="#78b98a"/><rect x="864" y="1374.7" width="2" height="14.3" fill="#87be81"/><rect x="870" y="1374.7" width="2" height="14.3" fill="#48bf6e"/><rect x="876" y="1374.7" width="3" height="14.3" fill="#49c06d"/><rect x="928" y="1374.7" width="2" height="14.3" fill="#56c466"/><rect x="940" y="1374.7" width="2" height="14.3" fill="#66ca5c"/><rect x="948" y="1374.7" width="2" height="14.3" fill="#75b88b"/><rect x="952" y="1374.7" width="2" height="14.3" fill="#84bd83"/><rect x="958" y="1374.7" width="3" height="14.3" fill="#7aba89"/><rect x="1008" y="1374.7" width="2" height="14.3" fill="#44be70"/><rect x="1020" y="1374.7" width="3" height="14.3" fill="#74b78c"/><rect x="1026" y="1374.7" width="2" height="14.3" fill="#7ebb86"/><rect x="1030" y="1374.7" width="2" height="14.3" fill="#8cc07e"/><rect x="1032" y="1374.7" width="2" height="14.3" fill="#67cb5b"/><rect x="1044" y="1374.7" width="2" height="14.3" fill="#58c564"/><rect x="1048" y="1374.7" width="2" height="14.3" fill="#77b88a"/><rect x="1050" y="1374.7" width="3" height="14.3" fill="#74b78c"/><rect x="1072" y="1374.7" width="3" height="14.3" fill="#84bd82"/><rect x="1092" y="1374.7" width="2" height="14.3" fill="#7dbb87"/><rect x="1102" y="1374.7" width="2" height="14.3" fill="#71ce55"/><rect x="1104" y="1374.7" width="2" height="14.3" fill="#52c368"/><rect x="1110" y="1374.7" width="2" height="14.3" fill="#5cc762"/><rect x="1152" y="1374.7" width="2" height="14.3" fill="#88bf80"/><rect x="1168" y="1374.7" width="3" height="14.3" fill="#7dbb86"/><rect x="1174" y="1374.7" width="2" height="14.3" fill="#73b68c"/><rect x="1198" y="1374.7" width="3" height="14.3" fill="#83bd83"/><rect x="1204" y="1374.7" width="2" height="14.3" fill="#73b68c"/><rect x="742" y="1360.4" width="2" height="14.3" fill="#3fbb73"/><rect x="744" y="1360.4" width="2" height="14.3" fill="#86be81"/><rect x="760" y="1360.4" width="2" height="14.3" fill="#48c06d"/><rect x="766" y="1360.4" width="3" height="14.3" fill="#45be70"/><rect x="772" y="1360.4" width="2" height="14.3" fill="#8bc07f"/><rect x="796" y="1360.4" width="3" height="14.3" fill="#7bba88"/><rect x="810" y="1360.4" width="2" height="14.3" fill="#8ec17c"/><rect x="820" y="1360.4" width="2" height="14.3" fill="#70ce56"/><rect x="826" y="1360.4" width="3" height="14.3" fill="#4bc06c"/><rect x="864" y="1360.4" width="2" height="14.3" fill="#73cf55"/><rect x="886" y="1360.4" width="2" height="14.3" fill="#41bc72"/><rect x="894" y="1360.4" width="3" height="14.3" fill="#79b989"/><rect x="898" y="1360.4" width="2" height="14.3" fill="#76b88b"/><rect x="900" y="1360.4" width="2" height="14.3" fill="#52c368"/><rect x="906" y="1360.4" width="2" height="14.3" fill="#76b88b"/><rect x="910" y="1360.4" width="2" height="14.3" fill="#74b78c"/><rect x="918" y="1360.4" width="2" height="14.3" fill="#83bd83"/><rect x="922" y="1360.4" width="2" height="14.3" fill="#82bd84"/><rect x="952" y="1360.4" width="2" height="14.3" fill="#69cb5a"/><rect x="964" y="1360.4" width="2" height="14.3" fill="#3eba74"/><rect x="1002" y="1360.4" width="2" height="14.3" fill="#78d152"/><rect x="1006" y="1360.4" width="3" height="14.3" fill="#8ec17d"/><rect x="1008" y="1360.4" width="2" height="14.3" fill="#8cc07e"/><rect x="1020" y="1360.4" width="2" height="14.3" fill="#55c466"/><rect x="1026" y="1360.4" width="2" height="14.3" fill="#71ce56"/><rect x="1030" y="1360.4" width="3" height="14.3" fill="#64ca5d"/><rect x="1032" y="1360.4" width="2" height="14.3" fill="#8cc07e"/><rect x="1044" y="1360.4" width="2" height="14.3" fill="#80bc85"/><rect x="1048" y="1360.4" width="2" height="14.3" fill="#72ce55"/><rect x="1060" y="1360.4" width="2" height="14.3" fill="#81bc85"/><rect x="1072" y="1360.4" width="3" height="14.3" fill="#8bc07f"/><rect x="1098" y="1360.4" width="2" height="14.3" fill="#3eba74"/><rect x="1114" y="1360.4" width="2" height="14.3" fill="#4ec26a"/><rect x="1164" y="1360.4" width="2" height="14.3" fill="#41bc72"/><rect x="1168" y="1360.4" width="2" height="14.3" fill="#76b88b"/><rect x="1198" y="1360.4" width="3" height="14.3" fill="#78b98a"/><rect x="1200" y="1360.4" width="2" height="14.3" fill="#81bd84"/><rect x="1204" y="1360.4" width="2" height="14.3" fill="#42bd71"/><rect x="1210" y="1360.4" width="2" height="14.3" fill="#6ccc59"/><rect x="1224" y="1360.4" width="3" height="14.3" fill="#6fcd57"/><rect x="1246" y="1360.4" width="2" height="14.3" fill="#4ac06c"/><rect x="1258" y="1360.4" width="3" height="14.3" fill="#62c95e"/><rect x="1260" y="1360.4" width="2" height="14.3" fill="#8abf7f"/><rect x="1264" y="1360.4" width="2" height="14.3" fill="#51c369"/><rect x="1426" y="1360.4" width="2" height="14.3" fill="#8cc07e"/><rect x="1440" y="1360.4" width="2" height="14.3" fill="#81bc85"/><rect x="708" y="1346.1" width="2" height="14.3" fill="#6ccc59"/><rect x="732" y="1346.1" width="2" height="14.3" fill="#87be81"/><rect x="742" y="1346.1" width="3" height="14.3" fill="#79b989"/><rect x="744" y="1346.1" width="2" height="14.3" fill="#73cf55"/><rect x="756" y="1346.1" width="2" height="14.3" fill="#78b98a"/><rect x="760" y="1346.1" width="2" height="14.3" fill="#8bc07e"/><rect x="766" y="1346.1" width="3" height="14.3" fill="#7bba88"/><rect x="774" y="1346.1" width="2" height="14.3" fill="#60c860"/><rect x="796" y="1346.1" width="2" height="14.3" fill="#76d053"/><rect x="810" y="1346.1" width="2" height="14.3" fill="#5ac663"/><rect x="820" y="1346.1" width="3" height="14.3" fill="#86be81"/><rect x="850" y="1346.1" width="2" height="14.3" fill="#4ac06c"/><rect x="852" y="1346.1" width="2" height="14.3" fill="#43bd71"/><rect x="886" y="1346.1" width="2" height="14.3" fill="#5bc663"/><rect x="898" y="1346.1" width="2" height="14.3" fill="#77b88a"/><rect x="900" y="1346.1" width="2" height="14.3" fill="#7dbb87"/><rect x="906" y="1346.1" width="2" height="14.3" fill="#67ca5c"/><rect x="910" y="1346.1" width="2" height="14.3" fill="#74b78c"/><rect x="912" y="1346.1" width="2" height="14.3" fill="#4dc16b"/><rect x="922" y="1346.1" width="2" height="14.3" fill="#88bf80"/><rect x="940" y="1346.1" width="2" height="14.3" fill="#6acc5a"/><rect x="960" y="1346.1" width="2" height="14.3" fill="#78b98a"/><rect x="964" y="1346.1" width="2" height="14.3" fill="#3eba74"/><rect x="966" y="1346.1" width="2" height="14.3" fill="#62c95f"/><rect x="996" y="1346.1" width="2" height="14.3" fill="#49c06d"/><rect x="1008" y="1346.1" width="3" height="14.3" fill="#8cc07e"/><rect x="1020" y="1346.1" width="2" height="14.3" fill="#57c565"/><rect x="1026" y="1346.1" width="2" height="14.3" fill="#68cb5b"/><rect x="1048" y="1346.1" width="2" height="14.3" fill="#7dbb86"/><rect x="1068" y="1346.1" width="2" height="14.3" fill="#8ec17d"/><rect x="1072" y="1346.1" width="2" height="14.3" fill="#5bc663"/><rect x="1086" y="1346.1" width="3" height="14.3" fill="#71ce55"/><rect x="1092" y="1346.1" width="2" height="14.3" fill="#40bb72"/><rect x="1104" y="1346.1" width="2" height="14.3" fill="#8bc07e"/><rect x="1108" y="1346.1" width="2" height="14.3" fill="#74cf54"/><rect x="1110" y="1346.1" width="2" height="14.3" fill="#8ec17d"/><rect x="1120" y="1346.1" width="3" height="14.3" fill="#8cc07e"/><rect x="1134" y="1346.1" width="2" height="14.3" fill="#60c85f"/><rect x="1152" y="1346.1" width="3" height="14.3" fill="#75d053"/><rect x="1174" y="1346.1" width="2" height="14.3" fill="#77b88a"/><rect x="1182" y="1346.1" width="3" height="14.3" fill="#78d151"/><rect x="1198" y="1346.1" width="2" height="14.3" fill="#45be70"/><rect x="1210" y="1346.1" width="2" height="14.3" fill="#81bc85"/><rect x="1218" y="1346.1" width="2" height="14.3" fill="#45be70"/><rect x="1230" y="1346.1" width="2" height="14.3" fill="#75d053"/><rect x="1234" y="1346.1" width="2" height="14.3" fill="#7ebb86"/><rect x="1240" y="1346.1" width="2" height="14.3" fill="#7ab989"/><rect x="1246" y="1346.1" width="2" height="14.3" fill="#8cc07e"/><rect x="1258" y="1346.1" width="2" height="14.3" fill="#8ec17d"/><rect x="1260" y="1346.1" width="3" height="14.3" fill="#77b88a"/><rect x="1290" y="1346.1" width="2" height="14.3" fill="#6fcd57"/><rect x="1336" y="1346.1" width="2" height="14.3" fill="#73cf54"/><rect x="1360" y="1346.1" width="3" height="14.3" fill="#84bd83"/><rect x="1390" y="1346.1" width="3" height="14.3" fill="#5fc860"/><rect x="1432" y="1346.1" width="2" height="14.3" fill="#75b88b"/><rect x="702" y="1331.8" width="2" height="14.3" fill="#85be81"/><rect x="706" y="1331.8" width="3" height="14.3" fill="#84bd82"/><rect x="760" y="1331.8" width="2" height="14.3" fill="#74b78c"/><rect x="766" y="1331.8" width="2" height="14.3" fill="#88be80"/><rect x="772" y="1331.8" width="3" height="14.3" fill="#5dc761"/><rect x="780" y="1331.8" width="2" height="14.3" fill="#77b88a"/><rect x="784" y="1331.8" width="2" height="14.3" fill="#88bf80"/><rect x="796" y="1331.8" width="2" height="14.3" fill="#74b78c"/><rect x="820" y="1331.8" width="2" height="14.3" fill="#6dcd58"/><rect x="826" y="1331.8" width="2" height="14.3" fill="#3fbb73"/><rect x="832" y="1331.8" width="2" height="14.3" fill="#87be81"/><rect x="844" y="1331.8" width="2" height="14.3" fill="#88bf80"/><rect x="850" y="1331.8" width="2" height="14.3" fill="#76b88b"/><rect x="852" y="1331.8" width="2" height="14.3" fill="#75b78b"/><rect x="858" y="1331.8" width="2" height="14.3" fill="#8bc07e"/><rect x="880" y="1331.8" width="3" height="14.3" fill="#7aba88"/><rect x="886" y="1331.8" width="3" height="14.3" fill="#74b78c"/><rect x="888" y="1331.8" width="2" height="14.3" fill="#75b78b"/><rect x="898" y="1331.8" width="3" height="14.3" fill="#80bc85"/><rect x="900" y="1331.8" width="2" height="14.3" fill="#76b88b"/><rect x="906" y="1331.8" width="2" height="14.3" fill="#8bc07e"/><rect x="916" y="1331.8" width="2" height="14.3" fill="#45be6f"/><rect x="922" y="1331.8" width="2" height="14.3" fill="#6fcd57"/><rect x="940" y="1331.8" width="3" height="14.3" fill="#81bc84"/><rect x="942" y="1331.8" width="2" height="14.3" fill="#7fbc85"/><rect x="952" y="1331.8" width="3" height="14.3" fill="#85be82"/><rect x="960" y="1331.8" width="2" height="14.3" fill="#89bf80"/><rect x="966" y="1331.8" width="2" height="14.3" fill="#77b88a"/><rect x="982" y="1331.8" width="3" height="14.3" fill="#3eba73"/><rect x="1006" y="1331.8" width="2" height="14.3" fill="#75b78b"/><rect x="1020" y="1331.8" width="3" height="14.3" fill="#8ac07f"/><rect x="1026" y="1331.8" width="3" height="14.3" fill="#79b989"/><rect x="1038" y="1331.8" width="2" height="14.3" fill="#4cc16b"/><rect x="1044" y="1331.8" width="2" height="14.3" fill="#75b78c"/><rect x="1048" y="1331.8" width="3" height="14.3" fill="#48c06e"/><rect x="1050" y="1331.8" width="2" height="14.3" fill="#42bd71"/><rect x="1068" y="1331.8" width="2" height="14.3" fill="#76b88b"/><rect x="1072" y="1331.8" width="2" height="14.3" fill="#7bba88"/><rect x="1084" y="1331.8" width="3" height="14.3" fill="#7fbc85"/><rect x="1102" y="1331.8" width="3" height="14.3" fill="#51c368"/><rect x="1108" y="1331.8" width="3" height="14.3" fill="#72ce55"/><rect x="1110" y="1331.8" width="2" height="14.3" fill="#74b78c"/><rect x="1132" y="1331.8" width="3" height="14.3" fill="#49c06d"/><rect x="1152" y="1331.8" width="2" height="14.3" fill="#58c564"/><rect x="1194" y="1331.8" width="3" height="14.3" fill="#64c95d"/><rect x="1198" y="1331.8" width="2" height="14.3" fill="#87be81"/><rect x="1200" y="1331.8" width="3" height="14.3" fill="#85be82"/><rect x="1210" y="1331.8" width="3" height="14.3" fill="#68cb5b"/><rect x="1240" y="1331.8" width="2" height="14.3" fill="#66ca5c"/><rect x="1246" y="1331.8" width="2" height="14.3" fill="#8ac07f"/><rect x="1248" y="1331.8" width="3" height="14.3" fill="#58c565"/><rect x="1254" y="1331.8" width="3" height="14.3" fill="#89bf80"/><rect x="1258" y="1331.8" width="2" height="14.3" fill="#82bd84"/><rect x="1260" y="1331.8" width="2" height="14.3" fill="#8dc17d"/><rect x="1284" y="1331.8" width="2" height="14.3" fill="#78d152"/><rect x="1332" y="1331.8" width="2" height="14.3" fill="#80bc85"/><rect x="1426" y="1331.8" width="2" height="14.3" fill="#5cc662"/><rect x="702" y="1317.4" width="2" height="14.3" fill="#86be81"/><rect x="720" y="1317.4" width="2" height="14.3" fill="#8abf7f"/><rect x="724" y="1317.4" width="3" height="14.3" fill="#74b78c"/><rect x="742" y="1317.4" width="3" height="14.3" fill="#55c466"/><rect x="744" y="1317.4" width="2" height="14.3" fill="#3fba73"/><rect x="754" y="1317.4" width="2" height="14.3" fill="#8ec17d"/><rect x="760" y="1317.4" width="2" height="14.3" fill="#85bd82"/><rect x="762" y="1317.4" width="2" height="14.3" fill="#64ca5d"/><rect x="766" y="1317.4" width="3" height="14.3" fill="#82bd84"/><rect x="772" y="1317.4" width="2" height="14.3" fill="#50c269"/><rect x="774" y="1317.4" width="2" height="14.3" fill="#71ce56"/><rect x="780" y="1317.4" width="2" height="14.3" fill="#8dc17d"/><rect x="796" y="1317.4" width="2" height="14.3" fill="#40bb72"/><rect x="810" y="1317.4" width="2" height="14.3" fill="#79b989"/><rect x="820" y="1317.4" width="2" height="14.3" fill="#60c860"/><rect x="826" y="1317.4" width="2" height="14.3" fill="#5cc662"/><rect x="828" y="1317.4" width="2" height="14.3" fill="#61c85f"/><rect x="832" y="1317.4" width="3" height="14.3" fill="#82bd84"/><rect x="852" y="1317.4" width="2" height="14.3" fill="#84bd83"/><rect x="864" y="1317.4" width="2" height="14.3" fill="#44be70"/><rect x="880" y="1317.4" width="2" height="14.3" fill="#78b98a"/><rect x="886" y="1317.4" width="3" height="14.3" fill="#61c85f"/><rect x="894" y="1317.4" width="2" height="14.3" fill="#74b78c"/><rect x="900" y="1317.4" width="2" height="14.3" fill="#80bc85"/><rect x="904" y="1317.4" width="3" height="14.3" fill="#3eba74"/><rect x="906" y="1317.4" width="3" height="14.3" fill="#83bd83"/><rect x="910" y="1317.4" width="2" height="14.3" fill="#4fc26a"/><rect x="922" y="1317.4" width="2" height="14.3" fill="#80bc85"/><rect x="924" y="1317.4" width="3" height="14.3" fill="#88bf80"/><rect x="930" y="1317.4" width="2" height="14.3" fill="#52c368"/><rect x="934" y="1317.4" width="2" height="14.3" fill="#7fbc85"/><rect x="952" y="1317.4" width="2" height="14.3" fill="#5cc762"/><rect x="960" y="1317.4" width="3" height="14.3" fill="#61c85f"/><rect x="964" y="1317.4" width="2" height="14.3" fill="#8cc07e"/><rect x="970" y="1317.4" width="2" height="14.3" fill="#7fbc85"/><rect x="1002" y="1317.4" width="2" height="14.3" fill="#8ec17d"/><rect x="1006" y="1317.4" width="2" height="14.3" fill="#4bc16c"/><rect x="1008" y="1317.4" width="2" height="14.3" fill="#55c466"/><rect x="1020" y="1317.4" width="2" height="14.3" fill="#8abf80"/><rect x="1026" y="1317.4" width="2" height="14.3" fill="#89bf80"/><rect x="1038" y="1317.4" width="3" height="14.3" fill="#88bf80"/><rect x="1044" y="1317.4" width="3" height="14.3" fill="#8abf7f"/><rect x="1048" y="1317.4" width="2" height="14.3" fill="#6ecd57"/><rect x="1050" y="1317.4" width="2" height="14.3" fill="#79b989"/><rect x="1054" y="1317.4" width="2" height="14.3" fill="#7ebb86"/><rect x="1072" y="1317.4" width="2" height="14.3" fill="#57c565"/><rect x="1084" y="1317.4" width="2" height="14.3" fill="#5cc762"/><rect x="1086" y="1317.4" width="2" height="14.3" fill="#88bf80"/><rect x="1098" y="1317.4" width="2" height="14.3" fill="#77b88a"/><rect x="1114" y="1317.4" width="2" height="14.3" fill="#81bd84"/><rect x="1120" y="1317.4" width="2" height="14.3" fill="#87be80"/><rect x="1126" y="1317.4" width="2" height="14.3" fill="#5cc762"/><rect x="1132" y="1317.4" width="3" height="14.3" fill="#78b98a"/><rect x="1144" y="1317.4" width="3" height="14.3" fill="#71ce56"/><rect x="1152" y="1317.4" width="2" height="14.3" fill="#83bd83"/><rect x="1156" y="1317.4" width="2" height="14.3" fill="#71ce56"/><rect x="1158" y="1317.4" width="2" height="14.3" fill="#5dc761"/><rect x="1168" y="1317.4" width="2" height="14.3" fill="#64c95d"/><rect x="1194" y="1317.4" width="2" height="14.3" fill="#86be81"/><rect x="1198" y="1317.4" width="2" height="14.3" fill="#5cc762"/><rect x="1218" y="1317.4" width="2" height="14.3" fill="#76b88b"/><rect x="1224" y="1317.4" width="3" height="14.3" fill="#5ac663"/><rect x="1234" y="1317.4" width="3" height="14.3" fill="#7cba87"/><rect x="1240" y="1317.4" width="2" height="14.3" fill="#83bd83"/><rect x="1246" y="1317.4" width="2" height="14.3" fill="#78b989"/><rect x="1260" y="1317.4" width="2" height="14.3" fill="#75b88b"/><rect x="1264" y="1317.4" width="3" height="14.3" fill="#6bcc59"/><rect x="1284" y="1317.4" width="2" height="14.3" fill="#51c368"/><rect x="1290" y="1317.4" width="3" height="14.3" fill="#7ebb86"/><rect x="1318" y="1317.4" width="2" height="14.3" fill="#42bd71"/><rect x="1350" y="1317.4" width="3" height="14.3" fill="#81bc84"/><rect x="1414" y="1317.4" width="3" height="14.3" fill="#45be70"/><rect x="1426" y="1317.4" width="2" height="14.3" fill="#66ca5c"/><rect x="1440" y="1317.4" width="2" height="14.3" fill="#5fc860"/><rect x="708" y="1303.1" width="2" height="14.3" fill="#74cf54"/><rect x="732" y="1303.1" width="2" height="14.3" fill="#88bf80"/><rect x="742" y="1303.1" width="2" height="14.3" fill="#70ce56"/><rect x="760" y="1303.1" width="2" height="14.3" fill="#4bc06c"/><rect x="766" y="1303.1" width="2" height="14.3" fill="#75b78c"/><rect x="772" y="1303.1" width="2" height="14.3" fill="#7cba88"/><rect x="774" y="1303.1" width="2" height="14.3" fill="#50c269"/><rect x="784" y="1303.1" width="2" height="14.3" fill="#8abf80"/><rect x="786" y="1303.1" width="3" height="14.3" fill="#5ec761"/><rect x="796" y="1303.1" width="2" height="14.3" fill="#82bd84"/><rect x="802" y="1303.1" width="3" height="14.3" fill="#61c95f"/><rect x="810" y="1303.1" width="2" height="14.3" fill="#88be80"/><rect x="820" y="1303.1" width="2" height="14.3" fill="#80bc85"/><rect x="826" y="1303.1" width="3" height="14.3" fill="#63c95e"/><rect x="828" y="1303.1" width="2" height="14.3" fill="#75b78b"/><rect x="850" y="1303.1" width="3" height="14.3" fill="#76b88b"/><rect x="852" y="1303.1" width="2" height="14.3" fill="#82bd84"/><rect x="858" y="1303.1" width="2" height="14.3" fill="#65ca5d"/><rect x="880" y="1303.1" width="2" height="14.3" fill="#78d152"/><rect x="882" y="1303.1" width="3" height="14.3" fill="#85bd82"/><rect x="898" y="1303.1" width="2" height="14.3" fill="#6ccc58"/><rect x="900" y="1303.1" width="2" height="14.3" fill="#74b78c"/><rect x="904" y="1303.1" width="2" height="14.3" fill="#76b88b"/><rect x="906" y="1303.1" width="2" height="14.3" fill="#59c664"/><rect x="910" y="1303.1" width="2" height="14.3" fill="#7dbb86"/><rect x="916" y="1303.1" width="2" height="14.3" fill="#79b989"/><rect x="960" y="1303.1" width="3" height="14.3" fill="#85bd82"/><rect x="964" y="1303.1" width="3" height="14.3" fill="#86be81"/><rect x="976" y="1303.1" width="2" height="14.3" fill="#8abf7f"/><rect x="1002" y="1303.1" width="2" height="14.3" fill="#76b88b"/><rect x="1006" y="1303.1" width="2" height="14.3" fill="#6ecd58"/><rect x="1008" y="1303.1" width="2" height="14.3" fill="#7aba89"/><rect x="1020" y="1303.1" width="2" height="14.3" fill="#7cba88"/><rect x="1026" y="1303.1" width="2" height="14.3" fill="#7bba88"/><rect x="1030" y="1303.1" width="2" height="14.3" fill="#78d152"/><rect x="1044" y="1303.1" width="2" height="14.3" fill="#88be80"/><rect x="1048" y="1303.1" width="2" height="14.3" fill="#4cc16b"/><rect x="1050" y="1303.1" width="2" height="14.3" fill="#77d052"/><rect x="1054" y="1303.1" width="2" height="14.3" fill="#74b78c"/><rect x="1068" y="1303.1" width="3" height="14.3" fill="#7cba88"/><rect x="1072" y="1303.1" width="2" height="14.3" fill="#75b78b"/><rect x="1090" y="1303.1" width="2" height="14.3" fill="#89bf80"/><rect x="1104" y="1303.1" width="2" height="14.3" fill="#5ac663"/><rect x="1110" y="1303.1" width="2" height="14.3" fill="#85bd82"/><rect x="1114" y="1303.1" width="2" height="14.3" fill="#67cb5b"/><rect x="1122" y="1303.1" width="2" height="14.3" fill="#78b98a"/><rect x="1126" y="1303.1" width="2" height="14.3" fill="#77d052"/><rect x="1144" y="1303.1" width="3" height="14.3" fill="#76b88b"/><rect x="1152" y="1303.1" width="3" height="14.3" fill="#72ce55"/><rect x="1156" y="1303.1" width="2" height="14.3" fill="#84bd83"/><rect x="1164" y="1303.1" width="3" height="14.3" fill="#6ecd57"/><rect x="1168" y="1303.1" width="2" height="14.3" fill="#76b88a"/><rect x="1174" y="1303.1" width="2" height="14.3" fill="#80bc85"/><rect x="1198" y="1303.1" width="2" height="14.3" fill="#46bf6f"/><rect x="1210" y="1303.1" width="3" height="14.3" fill="#89bf80"/><rect x="1212" y="1303.1" width="2" height="14.3" fill="#78b98a"/><rect x="1224" y="1303.1" width="3" height="14.3" fill="#74cf54"/><rect x="1240" y="1303.1" width="3" height="14.3" fill="#69cb5b"/><rect x="1242" y="1303.1" width="2" height="14.3" fill="#7dbb86"/><rect x="1246" y="1303.1" width="2" height="14.3" fill="#6ecd58"/><rect x="1260" y="1303.1" width="2" height="14.3" fill="#8dc17d"/><rect x="1290" y="1303.1" width="2" height="14.3" fill="#82bd84"/><rect x="1306" y="1303.1" width="2" height="14.3" fill="#85bd82"/><rect x="1428" y="1303.1" width="2" height="14.3" fill="#5ec761"/><rect x="706" y="1288.8" width="2" height="14.3" fill="#7ebb86"/><rect x="708" y="1288.8" width="2" height="14.3" fill="#7fbc85"/><rect x="724" y="1288.8" width="2" height="14.3" fill="#79d151"/><rect x="754" y="1288.8" width="2" height="14.3" fill="#79b989"/><rect x="760" y="1288.8" width="2" height="14.3" fill="#4fc26a"/><rect x="766" y="1288.8" width="2" height="14.3" fill="#8cc07e"/><rect x="774" y="1288.8" width="2" height="14.3" fill="#80bc85"/><rect x="780" y="1288.8" width="2" height="14.3" fill="#42bc71"/><rect x="784" y="1288.8" width="2" height="14.3" fill="#53c367"/><rect x="790" y="1288.8" width="3" height="14.3" fill="#54c467"/><rect x="796" y="1288.8" width="3" height="14.3" fill="#74b78c"/><rect x="820" y="1288.8" width="2" height="14.3" fill="#81bc84"/><rect x="826" y="1288.8" width="3" height="14.3" fill="#74cf54"/><rect x="832" y="1288.8" width="3" height="14.3" fill="#76b88b"/><rect x="850" y="1288.8" width="2" height="14.3" fill="#70ce56"/><rect x="852" y="1288.8" width="3" height="14.3" fill="#82bd84"/><rect x="880" y="1288.8" width="2" height="14.3" fill="#87be81"/><rect x="886" y="1288.8" width="2" height="14.3" fill="#68cb5b"/><rect x="888" y="1288.8" width="3" height="14.3" fill="#78b989"/><rect x="894" y="1288.8" width="2" height="14.3" fill="#78b98a"/><rect x="898" y="1288.8" width="3" height="14.3" fill="#85be82"/><rect x="900" y="1288.8" width="2" height="14.3" fill="#7aba88"/><rect x="904" y="1288.8" width="2" height="14.3" fill="#3fbb73"/><rect x="906" y="1288.8" width="2" height="14.3" fill="#5fc860"/><rect x="910" y="1288.8" width="3" height="14.3" fill="#58c564"/><rect x="930" y="1288.8" width="3" height="14.3" fill="#80bc85"/><rect x="940" y="1288.8" width="2" height="14.3" fill="#88bf80"/><rect x="942" y="1288.8" width="2" height="14.3" fill="#76b88b"/><rect x="954" y="1288.8" width="2" height="14.3" fill="#80bc85"/><rect x="960" y="1288.8" width="2" height="14.3" fill="#85be82"/><rect x="964" y="1288.8" width="2" height="14.3" fill="#8cc07e"/><rect x="1002" y="1288.8" width="3" height="14.3" fill="#69cb5a"/><rect x="1006" y="1288.8" width="2" height="14.3" fill="#83bd83"/><rect x="1008" y="1288.8" width="2" height="14.3" fill="#5ec761"/><rect x="1020" y="1288.8" width="3" height="14.3" fill="#7aba88"/><rect x="1026" y="1288.8" width="3" height="14.3" fill="#6ccc58"/><rect x="1030" y="1288.8" width="2" height="14.3" fill="#74b78c"/><rect x="1038" y="1288.8" width="2" height="14.3" fill="#40bb72"/><rect x="1044" y="1288.8" width="3" height="14.3" fill="#78b98a"/><rect x="1048" y="1288.8" width="2" height="14.3" fill="#8ac07f"/><rect x="1050" y="1288.8" width="2" height="14.3" fill="#78b98a"/><rect x="1072" y="1288.8" width="2" height="14.3" fill="#78b98a"/><rect x="1102" y="1288.8" width="3" height="14.3" fill="#7dbb86"/><rect x="1114" y="1288.8" width="2" height="14.3" fill="#78b98a"/><rect x="1126" y="1288.8" width="2" height="14.3" fill="#63c95e"/><rect x="1128" y="1288.8" width="3" height="14.3" fill="#82bd84"/><rect x="1132" y="1288.8" width="2" height="14.3" fill="#80bc85"/><rect x="1134" y="1288.8" width="2" height="14.3" fill="#81bc85"/><rect x="1146" y="1288.8" width="3" height="14.3" fill="#84bd82"/><rect x="1152" y="1288.8" width="2" height="14.3" fill="#42bd71"/><rect x="1156" y="1288.8" width="2" height="14.3" fill="#7fbc85"/><rect x="1164" y="1288.8" width="2" height="14.3" fill="#88bf80"/><rect x="1168" y="1288.8" width="2" height="14.3" fill="#4ec16a"/><rect x="1170" y="1288.8" width="2" height="14.3" fill="#4fc26a"/><rect x="1182" y="1288.8" width="2" height="14.3" fill="#47bf6e"/><rect x="1198" y="1288.8" width="3" height="14.3" fill="#62c95f"/><rect x="1212" y="1288.8" width="3" height="14.3" fill="#7ebb86"/><rect x="1218" y="1288.8" width="2" height="14.3" fill="#77b88a"/><rect x="1228" y="1288.8" width="2" height="14.3" fill="#49c06d"/><rect x="1230" y="1288.8" width="2" height="14.3" fill="#80bc85"/><rect x="1240" y="1288.8" width="2" height="14.3" fill="#77b88a"/><rect x="1242" y="1288.8" width="3" height="14.3" fill="#71ce55"/><rect x="1246" y="1288.8" width="2" height="14.3" fill="#4bc16c"/><rect x="1248" y="1288.8" width="2" height="14.3" fill="#7dbb87"/><rect x="1254" y="1288.8" width="2" height="14.3" fill="#7dbb86"/><rect x="1260" y="1288.8" width="2" height="14.3" fill="#86be81"/><rect x="1326" y="1288.8" width="2" height="14.3" fill="#89bf80"/><rect x="1360" y="1288.8" width="2" height="14.3" fill="#81bd84"/><rect x="702" y="1274.5" width="3" height="14.3" fill="#75b88b"/><rect x="706" y="1274.5" width="3" height="14.3" fill="#7cbb87"/><rect x="708" y="1274.5" width="3" height="14.3" fill="#8dc17d"/><rect x="720" y="1274.5" width="2" height="14.3" fill="#4ec16a"/><rect x="732" y="1274.5" width="3" height="14.3" fill="#7aba88"/><rect x="742" y="1274.5" width="2" height="14.3" fill="#7dbb87"/><rect x="754" y="1274.5" width="3" height="14.3" fill="#52c368"/><rect x="760" y="1274.5" width="2" height="14.3" fill="#83bd83"/><rect x="766" y="1274.5" width="3" height="14.3" fill="#8bc07f"/><rect x="784" y="1274.5" width="2" height="14.3" fill="#8ec17d"/><rect x="796" y="1274.5" width="2" height="14.3" fill="#81bc84"/><rect x="802" y="1274.5" width="3" height="14.3" fill="#86be81"/><rect x="804" y="1274.5" width="2" height="14.3" fill="#52c368"/><rect x="810" y="1274.5" width="2" height="14.3" fill="#86be81"/><rect x="820" y="1274.5" width="2" height="14.3" fill="#6dcd58"/><rect x="826" y="1274.5" width="2" height="14.3" fill="#60c860"/><rect x="828" y="1274.5" width="2" height="14.3" fill="#6dcd58"/><rect x="832" y="1274.5" width="3" height="14.3" fill="#6bcc59"/><rect x="834" y="1274.5" width="3" height="14.3" fill="#60c860"/><rect x="850" y="1274.5" width="2" height="14.3" fill="#7ebb86"/><rect x="852" y="1274.5" width="2" height="14.3" fill="#8ec17d"/><rect x="856" y="1274.5" width="2" height="14.3" fill="#89bf80"/><rect x="858" y="1274.5" width="2" height="14.3" fill="#78b989"/><rect x="880" y="1274.5" width="3" height="14.3" fill="#5cc762"/><rect x="886" y="1274.5" width="3" height="14.3" fill="#60c860"/><rect x="888" y="1274.5" width="2" height="14.3" fill="#78b98a"/><rect x="898" y="1274.5" width="2" height="14.3" fill="#66ca5c"/><rect x="900" y="1274.5" width="2" height="14.3" fill="#83bd83"/><rect x="904" y="1274.5" width="3" height="14.3" fill="#87be80"/><rect x="906" y="1274.5" width="2" height="14.3" fill="#48c06d"/><rect x="910" y="1274.5" width="2" height="14.3" fill="#7dbb87"/><rect x="918" y="1274.5" width="2" height="14.3" fill="#50c269"/><rect x="922" y="1274.5" width="3" height="14.3" fill="#78b98a"/><rect x="936" y="1274.5" width="2" height="14.3" fill="#67ca5c"/><rect x="940" y="1274.5" width="3" height="14.3" fill="#6ecd58"/><rect x="948" y="1274.5" width="2" height="14.3" fill="#7dbb86"/><rect x="960" y="1274.5" width="3" height="14.3" fill="#43bd71"/><rect x="996" y="1274.5" width="2" height="14.3" fill="#8ec17d"/><rect x="1002" y="1274.5" width="2" height="14.3" fill="#74b78c"/><rect x="1006" y="1274.5" width="2" height="14.3" fill="#8cc07e"/><rect x="1008" y="1274.5" width="3" height="14.3" fill="#77d052"/><rect x="1020" y="1274.5" width="3" height="14.3" fill="#8bc07f"/><rect x="1026" y="1274.5" width="2" height="14.3" fill="#74b78c"/><rect x="1030" y="1274.5" width="2" height="14.3" fill="#49c06d"/><rect x="1038" y="1274.5" width="2" height="14.3" fill="#6ccc58"/><rect x="1044" y="1274.5" width="2" height="14.3" fill="#54c466"/><rect x="1048" y="1274.5" width="2" height="14.3" fill="#76b88a"/><rect x="1050" y="1274.5" width="2" height="14.3" fill="#87be81"/><rect x="1066" y="1274.5" width="2" height="14.3" fill="#8ec17d"/><rect x="1072" y="1274.5" width="2" height="14.3" fill="#85be82"/><rect x="1086" y="1274.5" width="2" height="14.3" fill="#8dc17d"/><rect x="1092" y="1274.5" width="2" height="14.3" fill="#7aba88"/><rect x="1096" y="1274.5" width="2" height="14.3" fill="#7dbb86"/><rect x="1104" y="1274.5" width="2" height="14.3" fill="#61c95f"/><rect x="1110" y="1274.5" width="2" height="14.3" fill="#73cf54"/><rect x="1114" y="1274.5" width="2" height="14.3" fill="#61c85f"/><rect x="1122" y="1274.5" width="2" height="14.3" fill="#7cba87"/><rect x="1126" y="1274.5" width="2" height="14.3" fill="#76b88a"/><rect x="1152" y="1274.5" width="3" height="14.3" fill="#82bd84"/><rect x="1158" y="1274.5" width="2" height="14.3" fill="#62c95f"/><rect x="1168" y="1274.5" width="2" height="14.3" fill="#8abf7f"/><rect x="1174" y="1274.5" width="2" height="14.3" fill="#78b98a"/><rect x="1176" y="1274.5" width="3" height="14.3" fill="#78b98a"/><rect x="1182" y="1274.5" width="2" height="14.3" fill="#6bcc59"/><rect x="1198" y="1274.5" width="2" height="14.3" fill="#74b78c"/><rect x="1212" y="1274.5" width="2" height="14.3" fill="#67ca5c"/><rect x="1234" y="1274.5" width="2" height="14.3" fill="#7cba88"/><rect x="1240" y="1274.5" width="3" height="14.3" fill="#6acc5a"/><rect x="1242" y="1274.5" width="2" height="14.3" fill="#76b88b"/><rect x="1246" y="1274.5" width="2" height="14.3" fill="#73b68c"/><rect x="1254" y="1274.5" width="2" height="14.3" fill="#7cba88"/><rect x="1260" y="1274.5" width="2" height="14.3" fill="#8cc07e"/><rect x="1302" y="1274.5" width="3" height="14.3" fill="#7aba88"/><rect x="1326" y="1274.5" width="2" height="14.3" fill="#41bc72"/><rect x="1330" y="1274.5" width="2" height="14.3" fill="#74b78c"/><rect x="702" y="1260.2" width="2" height="14.3" fill="#7aba89"/><rect x="708" y="1260.2" width="3" height="14.3" fill="#85be82"/><rect x="718" y="1260.2" width="2" height="14.3" fill="#70ce56"/><rect x="742" y="1260.2" width="2" height="14.3" fill="#73cf54"/><rect x="744" y="1260.2" width="2" height="14.3" fill="#8bc07e"/><rect x="756" y="1260.2" width="3" height="14.3" fill="#8ac07f"/><rect x="760" y="1260.2" width="3" height="14.3" fill="#77b88a"/><rect x="766" y="1260.2" width="3" height="14.3" fill="#80bc85"/><rect x="772" y="1260.2" width="2" height="14.3" fill="#8ac07f"/><rect x="774" y="1260.2" width="2" height="14.3" fill="#78b989"/><rect x="784" y="1260.2" width="2" height="14.3" fill="#80bc85"/><rect x="790" y="1260.2" width="3" height="14.3" fill="#68cb5b"/><rect x="796" y="1260.2" width="2" height="14.3" fill="#4ac06d"/><rect x="810" y="1260.2" width="2" height="14.3" fill="#7bba88"/><rect x="814" y="1260.2" width="2" height="14.3" fill="#52c368"/><rect x="816" y="1260.2" width="2" height="14.3" fill="#78d151"/><rect x="820" y="1260.2" width="2" height="14.3" fill="#54c467"/><rect x="826" y="1260.2" width="2" height="14.3" fill="#67ca5c"/><rect x="828" y="1260.2" width="2" height="14.3" fill="#7fbb86"/><rect x="832" y="1260.2" width="2" height="14.3" fill="#74cf54"/><rect x="850" y="1260.2" width="2" height="14.3" fill="#56c565"/><rect x="852" y="1260.2" width="3" height="14.3" fill="#7ebb86"/><rect x="858" y="1260.2" width="3" height="14.3" fill="#81bd84"/><rect x="864" y="1260.2" width="2" height="14.3" fill="#7bba88"/><rect x="870" y="1260.2" width="2" height="14.3" fill="#58c564"/><rect x="880" y="1260.2" width="2" height="14.3" fill="#5ac663"/><rect x="886" y="1260.2" width="3" height="14.3" fill="#8bc07e"/><rect x="894" y="1260.2" width="2" height="14.3" fill="#77d052"/><rect x="898" y="1260.2" width="2" height="14.3" fill="#44be70"/><rect x="900" y="1260.2" width="2" height="14.3" fill="#78d152"/><rect x="904" y="1260.2" width="2" height="14.3" fill="#85be82"/><rect x="906" y="1260.2" width="2" height="14.3" fill="#7fbc85"/><rect x="910" y="1260.2" width="3" height="14.3" fill="#45be6f"/><rect x="922" y="1260.2" width="2" height="14.3" fill="#78b98a"/><rect x="930" y="1260.2" width="2" height="14.3" fill="#59c564"/><rect x="936" y="1260.2" width="2" height="14.3" fill="#49c06d"/><rect x="940" y="1260.2" width="2" height="14.3" fill="#76d053"/><rect x="942" y="1260.2" width="2" height="14.3" fill="#89bf80"/><rect x="952" y="1260.2" width="3" height="14.3" fill="#6ccc59"/><rect x="954" y="1260.2" width="2" height="14.3" fill="#57c565"/><rect x="958" y="1260.2" width="2" height="14.3" fill="#54c466"/><rect x="960" y="1260.2" width="3" height="14.3" fill="#74b78c"/><rect x="964" y="1260.2" width="2" height="14.3" fill="#42bd71"/><rect x="966" y="1260.2" width="2" height="14.3" fill="#6acc5a"/><rect x="978" y="1260.2" width="2" height="14.3" fill="#6fcd57"/><rect x="1002" y="1260.2" width="2" height="14.3" fill="#63c95e"/><rect x="1006" y="1260.2" width="2" height="14.3" fill="#56c565"/><rect x="1008" y="1260.2" width="2" height="14.3" fill="#78b98a"/><rect x="1020" y="1260.2" width="2" height="14.3" fill="#73cf54"/><rect x="1026" y="1260.2" width="2" height="14.3" fill="#4fc269"/><rect x="1030" y="1260.2" width="3" height="14.3" fill="#42bd71"/><rect x="1044" y="1260.2" width="2" height="14.3" fill="#78b98a"/><rect x="1048" y="1260.2" width="2" height="14.3" fill="#55c466"/><rect x="1050" y="1260.2" width="3" height="14.3" fill="#69cb5a"/><rect x="1054" y="1260.2" width="3" height="14.3" fill="#86be81"/><rect x="1056" y="1260.2" width="2" height="14.3" fill="#70ce56"/><rect x="1066" y="1260.2" width="2" height="14.3" fill="#86be81"/><rect x="1072" y="1260.2" width="2" height="14.3" fill="#56c565"/><rect x="1086" y="1260.2" width="3" height="14.3" fill="#74b78c"/><rect x="1092" y="1260.2" width="2" height="14.3" fill="#80bc85"/><rect x="1096" y="1260.2" width="3" height="14.3" fill="#85bd82"/><rect x="1098" y="1260.2" width="2" height="14.3" fill="#89bf80"/><rect x="1102" y="1260.2" width="3" height="14.3" fill="#51c368"/><rect x="1108" y="1260.2" width="3" height="14.3" fill="#7cba87"/><rect x="1114" y="1260.2" width="3" height="14.3" fill="#8bc07e"/><rect x="1122" y="1260.2" width="2" height="14.3" fill="#80bc85"/><rect x="1132" y="1260.2" width="2" height="14.3" fill="#76b88b"/><rect x="1146" y="1260.2" width="2" height="14.3" fill="#89bf80"/><rect x="1152" y="1260.2" width="2" height="14.3" fill="#52c368"/><rect x="1164" y="1260.2" width="2" height="14.3" fill="#7ebb86"/><rect x="1168" y="1260.2" width="2" height="14.3" fill="#8ec17d"/><rect x="1174" y="1260.2" width="2" height="14.3" fill="#7cba87"/><rect x="1182" y="1260.2" width="3" height="14.3" fill="#76b88b"/><rect x="1198" y="1260.2" width="2" height="14.3" fill="#7bba88"/><rect x="1204" y="1260.2" width="2" height="14.3" fill="#43bd71"/><rect x="1210" y="1260.2" width="2" height="14.3" fill="#82bd84"/><rect x="1212" y="1260.2" width="3" height="14.3" fill="#7aba88"/><rect x="1224" y="1260.2" width="2" height="14.3" fill="#81bc84"/><rect x="1234" y="1260.2" width="3" height="14.3" fill="#70ce56"/><rect x="1240" y="1260.2" width="2" height="14.3" fill="#40bb72"/><rect x="1254" y="1260.2" width="3" height="14.3" fill="#4ec16a"/><rect x="1258" y="1260.2" width="3" height="14.3" fill="#80bc85"/><rect x="1260" y="1260.2" width="2" height="14.3" fill="#86be81"/><rect x="1282" y="1260.2" width="2" height="14.3" fill="#40bb72"/><rect x="1306" y="1260.2" width="2" height="14.3" fill="#7bba88"/><rect x="1308" y="1260.2" width="2" height="14.3" fill="#7aba88"/><rect x="1416" y="1260.2" width="2" height="14.3" fill="#43bd71"/><rect x="1440" y="1260.2" width="2" height="14.3" fill="#7cba87"/><rect x="702" y="1245.9" width="2" height="14.3" fill="#7ebb86"/><rect x="738" y="1245.9" width="2" height="14.3" fill="#8ec17d"/><rect x="742" y="1245.9" width="3" height="14.3" fill="#50c269"/><rect x="750" y="1245.9" width="2" height="14.3" fill="#88bf80"/><rect x="754" y="1245.9" width="2" height="14.3" fill="#3fbb73"/><rect x="756" y="1245.9" width="2" height="14.3" fill="#79b989"/><rect x="760" y="1245.9" width="2" height="14.3" fill="#77b88a"/><rect x="766" y="1245.9" width="2" height="14.3" fill="#85bd82"/><rect x="768" y="1245.9" width="2" height="14.3" fill="#78b98a"/><rect x="772" y="1245.9" width="2" height="14.3" fill="#7bba88"/><rect x="784" y="1245.9" width="3" height="14.3" fill="#7cbb87"/><rect x="796" y="1245.9" width="3" height="14.3" fill="#72cf55"/><rect x="802" y="1245.9" width="2" height="14.3" fill="#78b989"/><rect x="810" y="1245.9" width="2" height="14.3" fill="#7cba87"/><rect x="820" y="1245.9" width="3" height="14.3" fill="#82bd84"/><rect x="826" y="1245.9" width="2" height="14.3" fill="#85be82"/><rect x="828" y="1245.9" width="2" height="14.3" fill="#88bf80"/><rect x="832" y="1245.9" width="2" height="14.3" fill="#75d053"/><rect x="850" y="1245.9" width="2" height="14.3" fill="#61c95f"/><rect x="852" y="1245.9" width="2" height="14.3" fill="#7cba87"/><rect x="880" y="1245.9" width="3" height="14.3" fill="#72ce55"/><rect x="882" y="1245.9" width="2" height="14.3" fill="#83bd83"/><rect x="900" y="1245.9" width="3" height="14.3" fill="#7bba88"/><rect x="906" y="1245.9" width="2" height="14.3" fill="#7dbb86"/><rect x="910" y="1245.9" width="3" height="14.3" fill="#56c466"/><rect x="916" y="1245.9" width="2" height="14.3" fill="#72ce55"/><rect x="918" y="1245.9" width="2" height="14.3" fill="#7dbb87"/><rect x="922" y="1245.9" width="2" height="14.3" fill="#76b88b"/><rect x="928" y="1245.9" width="2" height="14.3" fill="#7ab989"/><rect x="930" y="1245.9" width="3" height="14.3" fill="#44be70"/><rect x="936" y="1245.9" width="2" height="14.3" fill="#80bc85"/><rect x="940" y="1245.9" width="2" height="14.3" fill="#79b989"/><rect x="948" y="1245.9" width="3" height="14.3" fill="#5fc860"/><rect x="952" y="1245.9" width="2" height="14.3" fill="#7cbb87"/><rect x="960" y="1245.9" width="3" height="14.3" fill="#80bc85"/><rect x="976" y="1245.9" width="2" height="14.3" fill="#84bd83"/><rect x="982" y="1245.9" width="2" height="14.3" fill="#7cba87"/><rect x="984" y="1245.9" width="2" height="14.3" fill="#81bc84"/><rect x="996" y="1245.9" width="2" height="14.3" fill="#51c368"/><rect x="1002" y="1245.9" width="2" height="14.3" fill="#74b78c"/><rect x="1008" y="1245.9" width="2" height="14.3" fill="#4dc16b"/><rect x="1020" y="1245.9" width="2" height="14.3" fill="#75b88b"/><rect x="1026" y="1245.9" width="2" height="14.3" fill="#76b88b"/><rect x="1030" y="1245.9" width="2" height="14.3" fill="#43bd71"/><rect x="1038" y="1245.9" width="2" height="14.3" fill="#40bb72"/><rect x="1044" y="1245.9" width="2" height="14.3" fill="#73b78c"/><rect x="1048" y="1245.9" width="2" height="14.3" fill="#7cba87"/><rect x="1050" y="1245.9" width="2" height="14.3" fill="#7dbb86"/><rect x="1068" y="1245.9" width="2" height="14.3" fill="#59c664"/><rect x="1072" y="1245.9" width="3" height="14.3" fill="#41bc72"/><rect x="1086" y="1245.9" width="3" height="14.3" fill="#7dbb87"/><rect x="1092" y="1245.9" width="2" height="14.3" fill="#87be81"/><rect x="1096" y="1245.9" width="2" height="14.3" fill="#4fc26a"/><rect x="1098" y="1245.9" width="2" height="14.3" fill="#7fbb85"/><rect x="1102" y="1245.9" width="2" height="14.3" fill="#74b78c"/><rect x="1114" y="1245.9" width="2" height="14.3" fill="#3eba74"/><rect x="1122" y="1245.9" width="2" height="14.3" fill="#50c269"/><rect x="1132" y="1245.9" width="3" height="14.3" fill="#43bd70"/><rect x="1138" y="1245.9" width="2" height="14.3" fill="#6fcd57"/><rect x="1146" y="1245.9" width="2" height="14.3" fill="#88bf80"/><rect x="1152" y="1245.9" width="2" height="14.3" fill="#84bd82"/><rect x="1164" y="1245.9" width="2" height="14.3" fill="#43bd71"/><rect x="1168" y="1245.9" width="3" height="14.3" fill="#8cc07e"/><rect x="1174" y="1245.9" width="3" height="14.3" fill="#8bc07f"/><rect x="1182" y="1245.9" width="3" height="14.3" fill="#7aba88"/><rect x="1198" y="1245.9" width="2" height="14.3" fill="#7ebb86"/><rect x="1204" y="1245.9" width="2" height="14.3" fill="#7cbb87"/><rect x="1218" y="1245.9" width="3" height="14.3" fill="#85bd82"/><rect x="1224" y="1245.9" width="2" height="14.3" fill="#71ce56"/><rect x="1230" y="1245.9" width="3" height="14.3" fill="#87be81"/><rect x="1234" y="1245.9" width="2" height="14.3" fill="#78d052"/><rect x="1240" y="1245.9" width="2" height="14.3" fill="#45be70"/><rect x="1242" y="1245.9" width="2" height="14.3" fill="#83bd83"/><rect x="1246" y="1245.9" width="2" height="14.3" fill="#79b989"/><rect x="1254" y="1245.9" width="2" height="14.3" fill="#5dc762"/><rect x="1258" y="1245.9" width="2" height="14.3" fill="#8bc07f"/><rect x="1260" y="1245.9" width="3" height="14.3" fill="#5cc762"/><rect x="1264" y="1245.9" width="3" height="14.3" fill="#6fcd57"/><rect x="1300" y="1245.9" width="2" height="14.3" fill="#78d152"/><rect x="1302" y="1245.9" width="2" height="14.3" fill="#52c368"/><rect x="1342" y="1245.9" width="3" height="14.3" fill="#82bd84"/><rect x="1390" y="1245.9" width="3" height="14.3" fill="#87be80"/><rect x="1446" y="1245.9" width="2" height="14.3" fill="#6dcd58"/><rect x="708" y="1231.6" width="2" height="14.3" fill="#87be80"/><rect x="732" y="1231.6" width="2" height="14.3" fill="#71ce56"/><rect x="744" y="1231.6" width="2" height="14.3" fill="#6ccc59"/><rect x="754" y="1231.6" width="2" height="14.3" fill="#7fbb86"/><rect x="760" y="1231.6" width="2" height="14.3" fill="#8bc07e"/><rect x="762" y="1231.6" width="2" height="14.3" fill="#58c564"/><rect x="766" y="1231.6" width="3" height="14.3" fill="#80bc85"/><rect x="778" y="1231.6" width="2" height="14.3" fill="#74b78c"/><rect x="784" y="1231.6" width="2" height="14.3" fill="#83bd83"/><rect x="786" y="1231.6" width="2" height="14.3" fill="#3eba73"/><rect x="796" y="1231.6" width="3" height="14.3" fill="#77d052"/><rect x="802" y="1231.6" width="3" height="14.3" fill="#78d151"/><rect x="810" y="1231.6" width="2" height="14.3" fill="#7bba88"/><rect x="820" y="1231.6" width="2" height="14.3" fill="#8dc17d"/><rect x="826" y="1231.6" width="2" height="14.3" fill="#66ca5c"/><rect x="828" y="1231.6" width="2" height="14.3" fill="#76b88b"/><rect x="832" y="1231.6" width="2" height="14.3" fill="#77b88a"/><rect x="850" y="1231.6" width="2" height="14.3" fill="#86be81"/><rect x="852" y="1231.6" width="3" height="14.3" fill="#75b88b"/><rect x="880" y="1231.6" width="2" height="14.3" fill="#87be81"/><rect x="888" y="1231.6" width="2" height="14.3" fill="#87be80"/><rect x="894" y="1231.6" width="2" height="14.3" fill="#70ce56"/><rect x="898" y="1231.6" width="2" height="14.3" fill="#8ec17d"/><rect x="900" y="1231.6" width="2" height="14.3" fill="#7dbb87"/><rect x="904" y="1231.6" width="3" height="14.3" fill="#75b78b"/><rect x="906" y="1231.6" width="2" height="14.3" fill="#8dc17d"/><rect x="910" y="1231.6" width="2" height="14.3" fill="#83bd83"/><rect x="912" y="1231.6" width="3" height="14.3" fill="#7ebb86"/><rect x="918" y="1231.6" width="3" height="14.3" fill="#63c95e"/><rect x="922" y="1231.6" width="2" height="14.3" fill="#8cc07e"/><rect x="936" y="1231.6" width="2" height="14.3" fill="#76b88b"/><rect x="952" y="1231.6" width="2" height="14.3" fill="#8cc07e"/><rect x="960" y="1231.6" width="2" height="14.3" fill="#3db974"/><rect x="964" y="1231.6" width="3" height="14.3" fill="#78b98a"/><rect x="982" y="1231.6" width="2" height="14.3" fill="#7fbc85"/><rect x="988" y="1231.6" width="2" height="14.3" fill="#40bb73"/><rect x="996" y="1231.6" width="2" height="14.3" fill="#54c467"/><rect x="1002" y="1231.6" width="2" height="14.3" fill="#7bba88"/><rect x="1008" y="1231.6" width="3" height="14.3" fill="#7aba88"/><rect x="1020" y="1231.6" width="3" height="14.3" fill="#81bd84"/><rect x="1026" y="1231.6" width="2" height="14.3" fill="#3db974"/><rect x="1044" y="1231.6" width="2" height="14.3" fill="#71ce55"/><rect x="1048" y="1231.6" width="3" height="14.3" fill="#73b68c"/><rect x="1050" y="1231.6" width="2" height="14.3" fill="#82bd84"/><rect x="1054" y="1231.6" width="2" height="14.3" fill="#59c664"/><rect x="1060" y="1231.6" width="2" height="14.3" fill="#75b78b"/><rect x="1072" y="1231.6" width="2" height="14.3" fill="#75b88b"/><rect x="1086" y="1231.6" width="2" height="14.3" fill="#7cbb87"/><rect x="1092" y="1231.6" width="2" height="14.3" fill="#68cb5b"/><rect x="1098" y="1231.6" width="2" height="14.3" fill="#8bc07e"/><rect x="1102" y="1231.6" width="2" height="14.3" fill="#8dc17d"/><rect x="1104" y="1231.6" width="2" height="14.3" fill="#80bc85"/><rect x="1110" y="1231.6" width="2" height="14.3" fill="#75b88b"/><rect x="1114" y="1231.6" width="2" height="14.3" fill="#4ec26a"/><rect x="1120" y="1231.6" width="2" height="14.3" fill="#74b78c"/><rect x="1126" y="1231.6" width="2" height="14.3" fill="#8bc07e"/><rect x="1132" y="1231.6" width="2" height="14.3" fill="#77b88a"/><rect x="1144" y="1231.6" width="2" height="14.3" fill="#58c564"/><rect x="1152" y="1231.6" width="2" height="14.3" fill="#80bc85"/><rect x="1156" y="1231.6" width="2" height="14.3" fill="#61c85f"/><rect x="1168" y="1231.6" width="2" height="14.3" fill="#72ce55"/><rect x="1174" y="1231.6" width="2" height="14.3" fill="#62c95e"/><rect x="1182" y="1231.6" width="2" height="14.3" fill="#56c466"/><rect x="1198" y="1231.6" width="2" height="14.3" fill="#80bc85"/><rect x="1200" y="1231.6" width="3" height="14.3" fill="#7cba87"/><rect x="1204" y="1231.6" width="2" height="14.3" fill="#8ec17d"/><rect x="1210" y="1231.6" width="2" height="14.3" fill="#4fc269"/><rect x="1218" y="1231.6" width="3" height="14.3" fill="#74b78c"/><rect x="1224" y="1231.6" width="2" height="14.3" fill="#8dc17d"/><rect x="1230" y="1231.6" width="2" height="14.3" fill="#62c95e"/><rect x="1240" y="1231.6" width="2" height="14.3" fill="#76b88b"/><rect x="1242" y="1231.6" width="2" height="14.3" fill="#5ec761"/><rect x="1246" y="1231.6" width="2" height="14.3" fill="#82bd84"/><rect x="1254" y="1231.6" width="3" height="14.3" fill="#74cf54"/><rect x="1258" y="1231.6" width="2" height="14.3" fill="#77d052"/><rect x="1272" y="1231.6" width="2" height="14.3" fill="#8abf7f"/><rect x="1300" y="1231.6" width="2" height="14.3" fill="#75b88b"/><rect x="1302" y="1231.6" width="3" height="14.3" fill="#81bd84"/><rect x="1314" y="1231.6" width="3" height="14.3" fill="#7dbb87"/><rect x="1354" y="1231.6" width="2" height="14.3" fill="#50c269"/><rect x="1360" y="1231.6" width="2" height="14.3" fill="#5fc860"/><rect x="1426" y="1231.6" width="3" height="14.3" fill="#83bd83"/><rect x="1450" y="1231.6" width="2" height="14.3" fill="#5ac663"/><rect x="756" y="1217.3" width="3" height="14.3" fill="#59c664"/><rect x="760" y="1217.3" width="3" height="14.3" fill="#4ac06d"/><rect x="766" y="1217.3" width="2" height="14.3" fill="#66ca5c"/><rect x="784" y="1217.3" width="2" height="14.3" fill="#80bc85"/><rect x="790" y="1217.3" width="2" height="14.3" fill="#82bd84"/><rect x="796" y="1217.3" width="2" height="14.3" fill="#58c564"/><rect x="802" y="1217.3" width="3" height="14.3" fill="#75d053"/><rect x="810" y="1217.3" width="2" height="14.3" fill="#48bf6e"/><rect x="820" y="1217.3" width="2" height="14.3" fill="#76b88b"/><rect x="826" y="1217.3" width="2" height="14.3" fill="#80bc85"/><rect x="828" y="1217.3" width="2" height="14.3" fill="#3fba73"/><rect x="832" y="1217.3" width="2" height="14.3" fill="#64ca5d"/><rect x="850" y="1217.3" width="3" height="14.3" fill="#7ebb86"/><rect x="852" y="1217.3" width="3" height="14.3" fill="#8bc07e"/><rect x="880" y="1217.3" width="2" height="14.3" fill="#8ec17d"/><rect x="898" y="1217.3" width="3" height="14.3" fill="#79b989"/><rect x="900" y="1217.3" width="2" height="14.3" fill="#57c565"/><rect x="904" y="1217.3" width="2" height="14.3" fill="#5ec761"/><rect x="906" y="1217.3" width="3" height="14.3" fill="#80bc85"/><rect x="910" y="1217.3" width="2" height="14.3" fill="#76b88b"/><rect x="922" y="1217.3" width="2" height="14.3" fill="#49c06d"/><rect x="924" y="1217.3" width="2" height="14.3" fill="#59c663"/><rect x="930" y="1217.3" width="2" height="14.3" fill="#44be70"/><rect x="940" y="1217.3" width="2" height="14.3" fill="#5bc663"/><rect x="942" y="1217.3" width="3" height="14.3" fill="#4ac06d"/><rect x="948" y="1217.3" width="2" height="14.3" fill="#7bba88"/><rect x="952" y="1217.3" width="2" height="14.3" fill="#63c95e"/><rect x="960" y="1217.3" width="3" height="14.3" fill="#3fba73"/><rect x="964" y="1217.3" width="3" height="14.3" fill="#74b78c"/><rect x="966" y="1217.3" width="3" height="14.3" fill="#56c466"/><rect x="970" y="1217.3" width="3" height="14.3" fill="#51c368"/><rect x="976" y="1217.3" width="3" height="14.3" fill="#77b88a"/><rect x="996" y="1217.3" width="2" height="14.3" fill="#43bd71"/><rect x="1002" y="1217.3" width="2" height="14.3" fill="#69cb5b"/><rect x="1008" y="1217.3" width="2" height="14.3" fill="#89bf80"/><rect x="1020" y="1217.3" width="2" height="14.3" fill="#7ebb86"/><rect x="1024" y="1217.3" width="2" height="14.3" fill="#42bd71"/><rect x="1026" y="1217.3" width="2" height="14.3" fill="#40bc72"/><rect x="1030" y="1217.3" width="2" height="14.3" fill="#5bc663"/><rect x="1036" y="1217.3" width="2" height="14.3" fill="#7cbb87"/><rect x="1044" y="1217.3" width="2" height="14.3" fill="#76b88b"/><rect x="1048" y="1217.3" width="2" height="14.3" fill="#86be81"/><rect x="1050" y="1217.3" width="2" height="14.3" fill="#52c368"/><rect x="1054" y="1217.3" width="3" height="14.3" fill="#7ebb86"/><rect x="1068" y="1217.3" width="2" height="14.3" fill="#8bc07f"/><rect x="1072" y="1217.3" width="2" height="14.3" fill="#71ce56"/><rect x="1086" y="1217.3" width="3" height="14.3" fill="#4ec16a"/><rect x="1092" y="1217.3" width="3" height="14.3" fill="#8bc07e"/><rect x="1110" y="1217.3" width="2" height="14.3" fill="#4fc269"/><rect x="1114" y="1217.3" width="2" height="14.3" fill="#61c95f"/><rect x="1122" y="1217.3" width="2" height="14.3" fill="#7ebb86"/><rect x="1132" y="1217.3" width="2" height="14.3" fill="#76b88b"/><rect x="1144" y="1217.3" width="2" height="14.3" fill="#74b78c"/><rect x="1152" y="1217.3" width="3" height="14.3" fill="#68cb5b"/><rect x="1168" y="1217.3" width="2" height="14.3" fill="#78b98a"/><rect x="1174" y="1217.3" width="3" height="14.3" fill="#75b78b"/><rect x="1182" y="1217.3" width="2" height="14.3" fill="#7ebb86"/><rect x="1194" y="1217.3" width="3" height="14.3" fill="#66ca5c"/><rect x="1198" y="1217.3" width="2" height="14.3" fill="#49c06d"/><rect x="1200" y="1217.3" width="2" height="14.3" fill="#86be81"/><rect x="1210" y="1217.3" width="2" height="14.3" fill="#74b78c"/><rect x="1212" y="1217.3" width="2" height="14.3" fill="#79d151"/><rect x="1218" y="1217.3" width="3" height="14.3" fill="#5ec761"/><rect x="1228" y="1217.3" width="2" height="14.3" fill="#82bd84"/><rect x="1230" y="1217.3" width="3" height="14.3" fill="#80bc85"/><rect x="1240" y="1217.3" width="2" height="14.3" fill="#80bc85"/><rect x="1242" y="1217.3" width="2" height="14.3" fill="#54c467"/><rect x="1246" y="1217.3" width="2" height="14.3" fill="#50c269"/><rect x="1248" y="1217.3" width="2" height="14.3" fill="#7cba87"/><rect x="1260" y="1217.3" width="2" height="14.3" fill="#45be70"/><rect x="1282" y="1217.3" width="2" height="14.3" fill="#4bc06c"/><rect x="1290" y="1217.3" width="2" height="14.3" fill="#75b78c"/><rect x="1354" y="1217.3" width="2" height="14.3" fill="#8abf7f"/><rect x="1426" y="1217.3" width="2" height="14.3" fill="#76b88b"/><rect x="708" y="1203.0" width="3" height="14.3" fill="#85bd82"/><rect x="742" y="1203.0" width="2" height="14.3" fill="#8dc17d"/><rect x="744" y="1203.0" width="3" height="14.3" fill="#51c369"/><rect x="754" y="1203.0" width="2" height="14.3" fill="#74b78c"/><rect x="760" y="1203.0" width="2" height="14.3" fill="#84bd83"/><rect x="766" y="1203.0" width="2" height="14.3" fill="#88bf80"/><rect x="774" y="1203.0" width="2" height="14.3" fill="#84bd83"/><rect x="780" y="1203.0" width="2" height="14.3" fill="#5cc762"/><rect x="784" y="1203.0" width="2" height="14.3" fill="#75b78b"/><rect x="796" y="1203.0" width="2" height="14.3" fill="#76d053"/><rect x="804" y="1203.0" width="2" height="14.3" fill="#75b78b"/><rect x="810" y="1203.0" width="2" height="14.3" fill="#88bf80"/><rect x="820" y="1203.0" width="2" height="14.3" fill="#83bd83"/><rect x="832" y="1203.0" width="2" height="14.3" fill="#8cc07e"/><rect x="850" y="1203.0" width="2" height="14.3" fill="#7bba88"/><rect x="852" y="1203.0" width="3" height="14.3" fill="#65ca5d"/><rect x="880" y="1203.0" width="2" height="14.3" fill="#85be81"/><rect x="886" y="1203.0" width="2" height="14.3" fill="#50c269"/><rect x="900" y="1203.0" width="2" height="14.3" fill="#3db974"/><rect x="906" y="1203.0" width="2" height="14.3" fill="#89bf80"/><rect x="910" y="1203.0" width="2" height="14.3" fill="#62c95e"/><rect x="916" y="1203.0" width="2" height="14.3" fill="#74cf54"/><rect x="922" y="1203.0" width="2" height="14.3" fill="#5ac663"/><rect x="930" y="1203.0" width="2" height="14.3" fill="#7dbb86"/><rect x="942" y="1203.0" width="2" height="14.3" fill="#66ca5c"/><rect x="960" y="1203.0" width="3" height="14.3" fill="#75d053"/><rect x="964" y="1203.0" width="3" height="14.3" fill="#76d053"/><rect x="966" y="1203.0" width="2" height="14.3" fill="#3fba73"/><rect x="970" y="1203.0" width="2" height="14.3" fill="#8ac07f"/><rect x="994" y="1203.0" width="2" height="14.3" fill="#8abf80"/><rect x="996" y="1203.0" width="2" height="14.3" fill="#40bb73"/><rect x="1002" y="1203.0" width="3" height="14.3" fill="#4dc16b"/><rect x="1006" y="1203.0" width="2" height="14.3" fill="#42bd71"/><rect x="1008" y="1203.0" width="2" height="14.3" fill="#8ac07f"/><rect x="1020" y="1203.0" width="3" height="14.3" fill="#7cbb87"/><rect x="1024" y="1203.0" width="3" height="14.3" fill="#75b88b"/><rect x="1026" y="1203.0" width="2" height="14.3" fill="#8ac07f"/><rect x="1030" y="1203.0" width="2" height="14.3" fill="#54c467"/><rect x="1038" y="1203.0" width="2" height="14.3" fill="#83bd83"/><rect x="1042" y="1203.0" width="2" height="14.3" fill="#74cf54"/><rect x="1044" y="1203.0" width="3" height="14.3" fill="#80bc85"/><rect x="1048" y="1203.0" width="2" height="14.3" fill="#80bc85"/><rect x="1050" y="1203.0" width="2" height="14.3" fill="#87be81"/><rect x="1068" y="1203.0" width="3" height="14.3" fill="#8abf7f"/><rect x="1072" y="1203.0" width="2" height="14.3" fill="#53c367"/><rect x="1086" y="1203.0" width="2" height="14.3" fill="#6fcd57"/><rect x="1090" y="1203.0" width="2" height="14.3" fill="#87be81"/><rect x="1096" y="1203.0" width="3" height="14.3" fill="#81bc84"/><rect x="1104" y="1203.0" width="2" height="14.3" fill="#6acc5a"/><rect x="1114" y="1203.0" width="2" height="14.3" fill="#40bc72"/><rect x="1120" y="1203.0" width="2" height="14.3" fill="#84bd82"/><rect x="1122" y="1203.0" width="2" height="14.3" fill="#89bf80"/><rect x="1126" y="1203.0" width="3" height="14.3" fill="#74b78c"/><rect x="1132" y="1203.0" width="2" height="14.3" fill="#87be81"/><rect x="1146" y="1203.0" width="2" height="14.3" fill="#79b989"/><rect x="1152" y="1203.0" width="2" height="14.3" fill="#82bd84"/><rect x="1168" y="1203.0" width="3" height="14.3" fill="#81bd84"/><rect x="1174" y="1203.0" width="2" height="14.3" fill="#85be81"/><rect x="1182" y="1203.0" width="2" height="14.3" fill="#78b98a"/><rect x="1198" y="1203.0" width="2" height="14.3" fill="#57c565"/><rect x="1200" y="1203.0" width="2" height="14.3" fill="#8dc17d"/><rect x="1204" y="1203.0" width="3" height="14.3" fill="#83bd83"/><rect x="1222" y="1203.0" width="2" height="14.3" fill="#87be80"/><rect x="1224" y="1203.0" width="2" height="14.3" fill="#78b98a"/><rect x="1236" y="1203.0" width="2" height="14.3" fill="#53c367"/><rect x="1240" y="1203.0" width="3" height="14.3" fill="#82bd84"/><rect x="1246" y="1203.0" width="3" height="14.3" fill="#75b88b"/><rect x="1258" y="1203.0" width="3" height="14.3" fill="#5dc761"/><rect x="1260" y="1203.0" width="2" height="14.3" fill="#52c368"/><rect x="1282" y="1203.0" width="2" height="14.3" fill="#8ac07f"/><rect x="1288" y="1203.0" width="2" height="14.3" fill="#51c369"/><rect x="1324" y="1203.0" width="2" height="14.3" fill="#8ac07f"/><rect x="1342" y="1203.0" width="2" height="14.3" fill="#80bc85"/><rect x="1360" y="1203.0" width="2" height="14.3" fill="#4ac06d"/><rect x="702" y="1188.7" width="3" height="14.3" fill="#8dc17d"/><rect x="732" y="1188.7" width="3" height="14.3" fill="#78b98a"/><rect x="742" y="1188.7" width="2" height="14.3" fill="#86be81"/><rect x="750" y="1188.7" width="2" height="14.3" fill="#7ebb86"/><rect x="760" y="1188.7" width="2" height="14.3" fill="#40bb73"/><rect x="766" y="1188.7" width="2" height="14.3" fill="#74cf54"/><rect x="768" y="1188.7" width="3" height="14.3" fill="#59c564"/><rect x="780" y="1188.7" width="3" height="14.3" fill="#77d052"/><rect x="784" y="1188.7" width="3" height="14.3" fill="#87be80"/><rect x="786" y="1188.7" width="3" height="14.3" fill="#80bc85"/><rect x="792" y="1188.7" width="2" height="14.3" fill="#65ca5d"/><rect x="796" y="1188.7" width="2" height="14.3" fill="#3fbb73"/><rect x="810" y="1188.7" width="2" height="14.3" fill="#50c269"/><rect x="820" y="1188.7" width="3" height="14.3" fill="#41bc72"/><rect x="828" y="1188.7" width="2" height="14.3" fill="#5cc762"/><rect x="832" y="1188.7" width="2" height="14.3" fill="#65ca5d"/><rect x="850" y="1188.7" width="2" height="14.3" fill="#62c95f"/><rect x="852" y="1188.7" width="2" height="14.3" fill="#6ecd57"/><rect x="858" y="1188.7" width="3" height="14.3" fill="#4ac06c"/><rect x="874" y="1188.7" width="2" height="14.3" fill="#41bc72"/><rect x="876" y="1188.7" width="3" height="14.3" fill="#76d053"/><rect x="880" y="1188.7" width="2" height="14.3" fill="#85bd82"/><rect x="886" y="1188.7" width="2" height="14.3" fill="#4cc16b"/><rect x="888" y="1188.7" width="3" height="14.3" fill="#83bd83"/><rect x="900" y="1188.7" width="2" height="14.3" fill="#7cba87"/><rect x="906" y="1188.7" width="2" height="14.3" fill="#77d052"/><rect x="916" y="1188.7" width="2" height="14.3" fill="#74cf54"/><rect x="922" y="1188.7" width="2" height="14.3" fill="#87be81"/><rect x="924" y="1188.7" width="2" height="14.3" fill="#71ce56"/><rect x="930" y="1188.7" width="2" height="14.3" fill="#72ce55"/><rect x="952" y="1188.7" width="2" height="14.3" fill="#88bf80"/><rect x="960" y="1188.7" width="2" height="14.3" fill="#82bd84"/><rect x="964" y="1188.7" width="2" height="14.3" fill="#73cf55"/><rect x="1002" y="1188.7" width="2" height="14.3" fill="#8bc07f"/><rect x="1008" y="1188.7" width="2" height="14.3" fill="#8ec17c"/><rect x="1020" y="1188.7" width="2" height="14.3" fill="#53c467"/><rect x="1026" y="1188.7" width="2" height="14.3" fill="#7aba89"/><rect x="1044" y="1188.7" width="3" height="14.3" fill="#79d151"/><rect x="1048" y="1188.7" width="2" height="14.3" fill="#67cb5b"/><rect x="1050" y="1188.7" width="2" height="14.3" fill="#7aba88"/><rect x="1068" y="1188.7" width="3" height="14.3" fill="#56c565"/><rect x="1072" y="1188.7" width="3" height="14.3" fill="#86be81"/><rect x="1078" y="1188.7" width="2" height="14.3" fill="#3eba73"/><rect x="1086" y="1188.7" width="2" height="14.3" fill="#6dcd58"/><rect x="1092" y="1188.7" width="2" height="14.3" fill="#7cba87"/><rect x="1114" y="1188.7" width="3" height="14.3" fill="#83bd83"/><rect x="1120" y="1188.7" width="2" height="14.3" fill="#7cba87"/><rect x="1126" y="1188.7" width="2" height="14.3" fill="#77b88a"/><rect x="1132" y="1188.7" width="2" height="14.3" fill="#7bba88"/><rect x="1152" y="1188.7" width="2" height="14.3" fill="#5fc860"/><rect x="1168" y="1188.7" width="3" height="14.3" fill="#66ca5c"/><rect x="1198" y="1188.7" width="3" height="14.3" fill="#51c368"/><rect x="1212" y="1188.7" width="2" height="14.3" fill="#87be80"/><rect x="1218" y="1188.7" width="3" height="14.3" fill="#75d053"/><rect x="1230" y="1188.7" width="2" height="14.3" fill="#42bd71"/><rect x="1240" y="1188.7" width="2" height="14.3" fill="#5fc860"/><rect x="1246" y="1188.7" width="2" height="14.3" fill="#88bf80"/><rect x="1254" y="1188.7" width="2" height="14.3" fill="#76b88a"/><rect x="1258" y="1188.7" width="2" height="14.3" fill="#8abf7f"/><rect x="1260" y="1188.7" width="2" height="14.3" fill="#8bc07e"/><rect x="1264" y="1188.7" width="2" height="14.3" fill="#8ac07f"/><rect x="1282" y="1188.7" width="2" height="14.3" fill="#41bc72"/><rect x="1290" y="1188.7" width="2" height="14.3" fill="#49c06d"/><rect x="1332" y="1188.7" width="2" height="14.3" fill="#5cc762"/><rect x="1354" y="1188.7" width="3" height="14.3" fill="#52c368"/><rect x="1374" y="1188.7" width="2" height="14.3" fill="#61c85f"/><rect x="1380" y="1188.7" width="2" height="14.3" fill="#79d151"/><rect x="708" y="1174.3" width="2" height="14.3" fill="#70ce56"/><rect x="732" y="1174.3" width="2" height="14.3" fill="#7aba88"/><rect x="738" y="1174.3" width="2" height="14.3" fill="#54c467"/><rect x="742" y="1174.3" width="3" height="14.3" fill="#43bd71"/><rect x="760" y="1174.3" width="2" height="14.3" fill="#5dc762"/><rect x="762" y="1174.3" width="2" height="14.3" fill="#52c368"/><rect x="766" y="1174.3" width="3" height="14.3" fill="#86be81"/><rect x="772" y="1174.3" width="2" height="14.3" fill="#74cf54"/><rect x="778" y="1174.3" width="2" height="14.3" fill="#4fc269"/><rect x="786" y="1174.3" width="3" height="14.3" fill="#40bb72"/><rect x="796" y="1174.3" width="3" height="14.3" fill="#86be81"/><rect x="810" y="1174.3" width="2" height="14.3" fill="#3eba74"/><rect x="820" y="1174.3" width="2" height="14.3" fill="#8ec17d"/><rect x="826" y="1174.3" width="3" height="14.3" fill="#74b78c"/><rect x="828" y="1174.3" width="2" height="14.3" fill="#8ec17d"/><rect x="832" y="1174.3" width="2" height="14.3" fill="#7ab989"/><rect x="850" y="1174.3" width="3" height="14.3" fill="#7ab989"/><rect x="852" y="1174.3" width="2" height="14.3" fill="#77b88a"/><rect x="858" y="1174.3" width="2" height="14.3" fill="#83bd83"/><rect x="886" y="1174.3" width="2" height="14.3" fill="#3eba74"/><rect x="900" y="1174.3" width="3" height="14.3" fill="#5ac663"/><rect x="906" y="1174.3" width="2" height="14.3" fill="#8ac07f"/><rect x="910" y="1174.3" width="3" height="14.3" fill="#3fbb73"/><rect x="912" y="1174.3" width="2" height="14.3" fill="#6ecd57"/><rect x="916" y="1174.3" width="2" height="14.3" fill="#41bc72"/><rect x="918" y="1174.3" width="3" height="14.3" fill="#7fbc85"/><rect x="928" y="1174.3" width="2" height="14.3" fill="#80bc85"/><rect x="940" y="1174.3" width="2" height="14.3" fill="#7ebb86"/><rect x="942" y="1174.3" width="2" height="14.3" fill="#65ca5c"/><rect x="948" y="1174.3" width="3" height="14.3" fill="#73cf54"/><rect x="958" y="1174.3" width="2" height="14.3" fill="#85bd82"/><rect x="960" y="1174.3" width="2" height="14.3" fill="#3eba74"/><rect x="996" y="1174.3" width="2" height="14.3" fill="#7fbc85"/><rect x="1002" y="1174.3" width="2" height="14.3" fill="#7cbb87"/><rect x="1006" y="1174.3" width="2" height="14.3" fill="#8abf7f"/><rect x="1008" y="1174.3" width="2" height="14.3" fill="#5bc662"/><rect x="1026" y="1174.3" width="3" height="14.3" fill="#75b88b"/><rect x="1044" y="1174.3" width="2" height="14.3" fill="#50c269"/><rect x="1048" y="1174.3" width="2" height="14.3" fill="#84bd83"/><rect x="1050" y="1174.3" width="2" height="14.3" fill="#84bd83"/><rect x="1068" y="1174.3" width="2" height="14.3" fill="#7bba88"/><rect x="1072" y="1174.3" width="2" height="14.3" fill="#8cc07e"/><rect x="1096" y="1174.3" width="2" height="14.3" fill="#8bc07e"/><rect x="1098" y="1174.3" width="3" height="14.3" fill="#87be81"/><rect x="1102" y="1174.3" width="2" height="14.3" fill="#7cbb87"/><rect x="1108" y="1174.3" width="3" height="14.3" fill="#76b88b"/><rect x="1120" y="1174.3" width="2" height="14.3" fill="#75cf54"/><rect x="1122" y="1174.3" width="2" height="14.3" fill="#3fbb73"/><rect x="1132" y="1174.3" width="2" height="14.3" fill="#5ec761"/><rect x="1152" y="1174.3" width="2" height="14.3" fill="#76b88b"/><rect x="1168" y="1174.3" width="3" height="14.3" fill="#5ac663"/><rect x="1182" y="1174.3" width="2" height="14.3" fill="#71ce56"/><rect x="1198" y="1174.3" width="2" height="14.3" fill="#67ca5c"/><rect x="1200" y="1174.3" width="2" height="14.3" fill="#78b98a"/><rect x="1240" y="1174.3" width="2" height="14.3" fill="#89bf80"/><rect x="1246" y="1174.3" width="2" height="14.3" fill="#54c467"/><rect x="1260" y="1174.3" width="2" height="14.3" fill="#76b88b"/><rect x="1276" y="1174.3" width="2" height="14.3" fill="#3fba73"/><rect x="1282" y="1174.3" width="3" height="14.3" fill="#76b88b"/><rect x="1300" y="1174.3" width="2" height="14.3" fill="#89bf80"/><rect x="1336" y="1174.3" width="3" height="14.3" fill="#83bd83"/><rect x="708" y="1160.0" width="2" height="14.3" fill="#67cb5b"/><rect x="742" y="1160.0" width="2" height="14.3" fill="#55c466"/><rect x="756" y="1160.0" width="2" height="14.3" fill="#72cf55"/><rect x="760" y="1160.0" width="2" height="14.3" fill="#46bf6f"/><rect x="762" y="1160.0" width="2" height="14.3" fill="#82bd84"/><rect x="766" y="1160.0" width="2" height="14.3" fill="#8ec17c"/><rect x="772" y="1160.0" width="2" height="14.3" fill="#7cba87"/><rect x="784" y="1160.0" width="2" height="14.3" fill="#62c95e"/><rect x="810" y="1160.0" width="2" height="14.3" fill="#7bba88"/><rect x="816" y="1160.0" width="2" height="14.3" fill="#7dbb86"/><rect x="820" y="1160.0" width="2" height="14.3" fill="#75cf54"/><rect x="850" y="1160.0" width="2" height="14.3" fill="#7bba88"/><rect x="880" y="1160.0" width="3" height="14.3" fill="#76d053"/><rect x="898" y="1160.0" width="2" height="14.3" fill="#77b98a"/><rect x="906" y="1160.0" width="3" height="14.3" fill="#82bd84"/><rect x="912" y="1160.0" width="2" height="14.3" fill="#72cf55"/><rect x="924" y="1160.0" width="2" height="14.3" fill="#7fbb86"/><rect x="928" y="1160.0" width="2" height="14.3" fill="#62c95e"/><rect x="940" y="1160.0" width="3" height="14.3" fill="#41bc72"/><rect x="952" y="1160.0" width="2" height="14.3" fill="#43bd71"/><rect x="960" y="1160.0" width="2" height="14.3" fill="#85be81"/><rect x="996" y="1160.0" width="2" height="14.3" fill="#44be70"/><rect x="1002" y="1160.0" width="2" height="14.3" fill="#77b88a"/><rect x="1008" y="1160.0" width="2" height="14.3" fill="#82bd84"/><rect x="1020" y="1160.0" width="2" height="14.3" fill="#7ab989"/><rect x="1024" y="1160.0" width="3" height="14.3" fill="#67ca5c"/><rect x="1026" y="1160.0" width="3" height="14.3" fill="#57c565"/><rect x="1038" y="1160.0" width="3" height="14.3" fill="#68cb5b"/><rect x="1054" y="1160.0" width="3" height="14.3" fill="#84bd83"/><rect x="1060" y="1160.0" width="2" height="14.3" fill="#41bc72"/><rect x="1068" y="1160.0" width="2" height="14.3" fill="#5cc762"/><rect x="1072" y="1160.0" width="2" height="14.3" fill="#84bd83"/><rect x="1114" y="1160.0" width="3" height="14.3" fill="#4fc26a"/><rect x="1122" y="1160.0" width="2" height="14.3" fill="#66ca5c"/><rect x="1126" y="1160.0" width="2" height="14.3" fill="#45be6f"/><rect x="1132" y="1160.0" width="2" height="14.3" fill="#55c466"/><rect x="1140" y="1160.0" width="2" height="14.3" fill="#76b88b"/><rect x="1152" y="1160.0" width="3" height="14.3" fill="#75b88b"/><rect x="1164" y="1160.0" width="2" height="14.3" fill="#7aba89"/><rect x="1168" y="1160.0" width="2" height="14.3" fill="#4cc16b"/><rect x="1174" y="1160.0" width="2" height="14.3" fill="#59c663"/><rect x="1182" y="1160.0" width="2" height="14.3" fill="#86be81"/><rect x="1198" y="1160.0" width="2" height="14.3" fill="#51c368"/><rect x="1212" y="1160.0" width="3" height="14.3" fill="#81bd84"/><rect x="1224" y="1160.0" width="2" height="14.3" fill="#7dbb87"/><rect x="1234" y="1160.0" width="2" height="14.3" fill="#67cb5b"/><rect x="1240" y="1160.0" width="2" height="14.3" fill="#5cc762"/><rect x="1242" y="1160.0" width="2" height="14.3" fill="#81bd84"/><rect x="1252" y="1160.0" width="2" height="14.3" fill="#79b989"/><rect x="1284" y="1160.0" width="3" height="14.3" fill="#67cb5c"/><rect x="1290" y="1160.0" width="3" height="14.3" fill="#8bc07e"/><rect x="1428" y="1160.0" width="3" height="14.3" fill="#8abf7f"/><rect x="1474" y="1160.0" width="2" height="14.3" fill="#82bd84"/><rect x="706" y="1145.7" width="2" height="14.3" fill="#7fbc85"/><rect x="708" y="1145.7" width="2" height="14.3" fill="#7dbb87"/><rect x="714" y="1145.7" width="3" height="14.3" fill="#75d053"/><rect x="732" y="1145.7" width="2" height="14.3" fill="#8ac07f"/><rect x="760" y="1145.7" width="2" height="14.3" fill="#77b88a"/><rect x="766" y="1145.7" width="2" height="14.3" fill="#81bd84"/><rect x="796" y="1145.7" width="2" height="14.3" fill="#5ac663"/><rect x="804" y="1145.7" width="2" height="14.3" fill="#5dc761"/><rect x="808" y="1145.7" width="2" height="14.3" fill="#68cb5b"/><rect x="810" y="1145.7" width="2" height="14.3" fill="#7bba88"/><rect x="820" y="1145.7" width="2" height="14.3" fill="#6ecd57"/><rect x="826" y="1145.7" width="2" height="14.3" fill="#86be81"/><rect x="828" y="1145.7" width="2" height="14.3" fill="#79b989"/><rect x="832" y="1145.7" width="2" height="14.3" fill="#7fbc85"/><rect x="880" y="1145.7" width="2" height="14.3" fill="#3dba74"/><rect x="894" y="1145.7" width="2" height="14.3" fill="#73cf54"/><rect x="906" y="1145.7" width="2" height="14.3" fill="#8ec17d"/><rect x="916" y="1145.7" width="2" height="14.3" fill="#61c85f"/><rect x="930" y="1145.7" width="2" height="14.3" fill="#73cf55"/><rect x="936" y="1145.7" width="2" height="14.3" fill="#6ecd57"/><rect x="952" y="1145.7" width="2" height="14.3" fill="#7dbb86"/><rect x="960" y="1145.7" width="2" height="14.3" fill="#74b78c"/><rect x="964" y="1145.7" width="3" height="14.3" fill="#4bc06c"/><rect x="976" y="1145.7" width="3" height="14.3" fill="#47bf6e"/><rect x="996" y="1145.7" width="2" height="14.3" fill="#74b78c"/><rect x="1020" y="1145.7" width="3" height="14.3" fill="#71ce56"/><rect x="1026" y="1145.7" width="3" height="14.3" fill="#84bd83"/><rect x="1032" y="1145.7" width="3" height="14.3" fill="#7aba89"/><rect x="1048" y="1145.7" width="3" height="14.3" fill="#66ca5c"/><rect x="1050" y="1145.7" width="2" height="14.3" fill="#8ec17d"/><rect x="1054" y="1145.7" width="2" height="14.3" fill="#3fbb73"/><rect x="1072" y="1145.7" width="3" height="14.3" fill="#74cf54"/><rect x="1096" y="1145.7" width="2" height="14.3" fill="#4ac06d"/><rect x="1102" y="1145.7" width="2" height="14.3" fill="#5dc761"/><rect x="1108" y="1145.7" width="2" height="14.3" fill="#49c06d"/><rect x="1114" y="1145.7" width="2" height="14.3" fill="#7dbb87"/><rect x="1128" y="1145.7" width="2" height="14.3" fill="#85be82"/><rect x="1132" y="1145.7" width="2" height="14.3" fill="#70ce56"/><rect x="1134" y="1145.7" width="2" height="14.3" fill="#74b78c"/><rect x="1164" y="1145.7" width="2" height="14.3" fill="#64ca5d"/><rect x="1168" y="1145.7" width="2" height="14.3" fill="#75b88b"/><rect x="1174" y="1145.7" width="2" height="14.3" fill="#78b98a"/><rect x="1182" y="1145.7" width="2" height="14.3" fill="#5ec761"/><rect x="1194" y="1145.7" width="2" height="14.3" fill="#64ca5d"/><rect x="1230" y="1145.7" width="2" height="14.3" fill="#6ccc59"/><rect x="1234" y="1145.7" width="3" height="14.3" fill="#64ca5d"/><rect x="1240" y="1145.7" width="2" height="14.3" fill="#82bd84"/><rect x="1242" y="1145.7" width="2" height="14.3" fill="#86be81"/><rect x="1260" y="1145.7" width="2" height="14.3" fill="#7bba88"/><rect x="1324" y="1145.7" width="2" height="14.3" fill="#74b78c"/><rect x="1344" y="1145.7" width="2" height="14.3" fill="#65ca5d"/><rect x="1426" y="1145.7" width="3" height="14.3" fill="#3fba73"/><rect x="708" y="1131.4" width="3" height="14.3" fill="#44be70"/><rect x="738" y="1131.4" width="2" height="14.3" fill="#3eba74"/><rect x="754" y="1131.4" width="2" height="14.3" fill="#5ec761"/><rect x="756" y="1131.4" width="2" height="14.3" fill="#8cc07e"/><rect x="760" y="1131.4" width="2" height="14.3" fill="#84bd83"/><rect x="766" y="1131.4" width="3" height="14.3" fill="#70ce56"/><rect x="784" y="1131.4" width="2" height="14.3" fill="#74b78c"/><rect x="796" y="1131.4" width="3" height="14.3" fill="#4cc16b"/><rect x="808" y="1131.4" width="3" height="14.3" fill="#67ca5c"/><rect x="810" y="1131.4" width="3" height="14.3" fill="#4ec26a"/><rect x="820" y="1131.4" width="2" height="14.3" fill="#7ebb86"/><rect x="832" y="1131.4" width="3" height="14.3" fill="#4ac06d"/><rect x="850" y="1131.4" width="2" height="14.3" fill="#78b98a"/><rect x="852" y="1131.4" width="2" height="14.3" fill="#79d151"/><rect x="880" y="1131.4" width="2" height="14.3" fill="#53c467"/><rect x="886" y="1131.4" width="2" height="14.3" fill="#76d053"/><rect x="906" y="1131.4" width="2" height="14.3" fill="#4bc06c"/><rect x="916" y="1131.4" width="2" height="14.3" fill="#8cc07e"/><rect x="922" y="1131.4" width="2" height="14.3" fill="#51c368"/><rect x="924" y="1131.4" width="2" height="14.3" fill="#83bd83"/><rect x="930" y="1131.4" width="2" height="14.3" fill="#73cf55"/><rect x="952" y="1131.4" width="2" height="14.3" fill="#85be82"/><rect x="960" y="1131.4" width="3" height="14.3" fill="#85be82"/><rect x="976" y="1131.4" width="2" height="14.3" fill="#8dc17d"/><rect x="996" y="1131.4" width="3" height="14.3" fill="#75b88b"/><rect x="1020" y="1131.4" width="2" height="14.3" fill="#77d052"/><rect x="1030" y="1131.4" width="2" height="14.3" fill="#7aba88"/><rect x="1044" y="1131.4" width="2" height="14.3" fill="#45be6f"/><rect x="1048" y="1131.4" width="2" height="14.3" fill="#88bf80"/><rect x="1050" y="1131.4" width="2" height="14.3" fill="#77b88a"/><rect x="1054" y="1131.4" width="2" height="14.3" fill="#85be82"/><rect x="1072" y="1131.4" width="2" height="14.3" fill="#5bc662"/><rect x="1086" y="1131.4" width="2" height="14.3" fill="#82bd84"/><rect x="1096" y="1131.4" width="2" height="14.3" fill="#53c367"/><rect x="1104" y="1131.4" width="2" height="14.3" fill="#85bd82"/><rect x="1122" y="1131.4" width="2" height="14.3" fill="#84bd83"/><rect x="1126" y="1131.4" width="2" height="14.3" fill="#40bb72"/><rect x="1144" y="1131.4" width="3" height="14.3" fill="#46bf6f"/><rect x="1156" y="1131.4" width="2" height="14.3" fill="#78b98a"/><rect x="1158" y="1131.4" width="3" height="14.3" fill="#86be81"/><rect x="1168" y="1131.4" width="2" height="14.3" fill="#78b98a"/><rect x="1198" y="1131.4" width="2" height="14.3" fill="#79d151"/><rect x="1200" y="1131.4" width="2" height="14.3" fill="#89bf80"/><rect x="1204" y="1131.4" width="3" height="14.3" fill="#87be81"/><rect x="1206" y="1131.4" width="2" height="14.3" fill="#63c95e"/><rect x="1224" y="1131.4" width="3" height="14.3" fill="#77b88a"/><rect x="1240" y="1131.4" width="2" height="14.3" fill="#89bf80"/><rect x="1242" y="1131.4" width="2" height="14.3" fill="#52c368"/><rect x="1246" y="1131.4" width="2" height="14.3" fill="#78d152"/><rect x="1260" y="1131.4" width="2" height="14.3" fill="#79b989"/><rect x="1282" y="1131.4" width="2" height="14.3" fill="#76b88b"/><rect x="1326" y="1131.4" width="2" height="14.3" fill="#8bc07f"/><rect x="1374" y="1131.4" width="2" height="14.3" fill="#6acc5a"/><rect x="1384" y="1131.4" width="2" height="14.3" fill="#58c565"/><rect x="702" y="1117.1" width="2" height="14.3" fill="#7cba87"/><rect x="706" y="1117.1" width="3" height="14.3" fill="#5bc663"/><rect x="720" y="1117.1" width="2" height="14.3" fill="#80bc85"/><rect x="760" y="1117.1" width="3" height="14.3" fill="#53c367"/><rect x="766" y="1117.1" width="3" height="14.3" fill="#85be81"/><rect x="772" y="1117.1" width="3" height="14.3" fill="#43bd71"/><rect x="774" y="1117.1" width="2" height="14.3" fill="#7dbb87"/><rect x="780" y="1117.1" width="2" height="14.3" fill="#84bd83"/><rect x="796" y="1117.1" width="2" height="14.3" fill="#85be82"/><rect x="808" y="1117.1" width="2" height="14.3" fill="#76b88b"/><rect x="820" y="1117.1" width="2" height="14.3" fill="#7aba89"/><rect x="822" y="1117.1" width="2" height="14.3" fill="#72ce55"/><rect x="832" y="1117.1" width="3" height="14.3" fill="#4bc06c"/><rect x="852" y="1117.1" width="3" height="14.3" fill="#43bd71"/><rect x="858" y="1117.1" width="2" height="14.3" fill="#61c85f"/><rect x="864" y="1117.1" width="2" height="14.3" fill="#80bc85"/><rect x="880" y="1117.1" width="2" height="14.3" fill="#7ebb86"/><rect x="898" y="1117.1" width="2" height="14.3" fill="#66ca5c"/><rect x="900" y="1117.1" width="2" height="14.3" fill="#82bd84"/><rect x="904" y="1117.1" width="2" height="14.3" fill="#7cba87"/><rect x="906" y="1117.1" width="2" height="14.3" fill="#3fbb73"/><rect x="910" y="1117.1" width="2" height="14.3" fill="#5ac663"/><rect x="922" y="1117.1" width="2" height="14.3" fill="#78b98a"/><rect x="946" y="1117.1" width="2" height="14.3" fill="#6ecd57"/><rect x="952" y="1117.1" width="3" height="14.3" fill="#87be81"/><rect x="960" y="1117.1" width="2" height="14.3" fill="#75b88b"/><rect x="964" y="1117.1" width="2" height="14.3" fill="#79b989"/><rect x="1002" y="1117.1" width="2" height="14.3" fill="#76b88b"/><rect x="1020" y="1117.1" width="3" height="14.3" fill="#68cb5b"/><rect x="1026" y="1117.1" width="2" height="14.3" fill="#83bd83"/><rect x="1032" y="1117.1" width="3" height="14.3" fill="#7bba88"/><rect x="1038" y="1117.1" width="2" height="14.3" fill="#5ac663"/><rect x="1044" y="1117.1" width="2" height="14.3" fill="#7bba88"/><rect x="1054" y="1117.1" width="3" height="14.3" fill="#8bc07e"/><rect x="1068" y="1117.1" width="3" height="14.3" fill="#86be81"/><rect x="1086" y="1117.1" width="3" height="14.3" fill="#8bc07e"/><rect x="1108" y="1117.1" width="3" height="14.3" fill="#80bc85"/><rect x="1114" y="1117.1" width="3" height="14.3" fill="#8dc17d"/><rect x="1132" y="1117.1" width="2" height="14.3" fill="#8ec17d"/><rect x="1152" y="1117.1" width="2" height="14.3" fill="#8ac07f"/><rect x="1164" y="1117.1" width="2" height="14.3" fill="#75b78b"/><rect x="1168" y="1117.1" width="2" height="14.3" fill="#7bba88"/><rect x="1198" y="1117.1" width="3" height="14.3" fill="#80bc85"/><rect x="1212" y="1117.1" width="2" height="14.3" fill="#4bc06c"/><rect x="1224" y="1117.1" width="2" height="14.3" fill="#3fbb73"/><rect x="1234" y="1117.1" width="3" height="14.3" fill="#42bd71"/><rect x="1240" y="1117.1" width="2" height="14.3" fill="#8ec17d"/><rect x="1242" y="1117.1" width="2" height="14.3" fill="#77d052"/><rect x="1246" y="1117.1" width="2" height="14.3" fill="#46bf6f"/><rect x="1258" y="1117.1" width="2" height="14.3" fill="#81bd84"/><rect x="1260" y="1117.1" width="2" height="14.3" fill="#6ccc59"/><rect x="1290" y="1117.1" width="2" height="14.3" fill="#8bc07f"/><rect x="1302" y="1117.1" width="2" height="14.3" fill="#5dc761"/><rect x="1312" y="1117.1" width="2" height="14.3" fill="#83bd83"/><rect x="732" y="1102.8" width="3" height="14.3" fill="#8ac07f"/><rect x="760" y="1102.8" width="2" height="14.3" fill="#4ec26a"/><rect x="766" y="1102.8" width="2" height="14.3" fill="#8ec17c"/><rect x="804" y="1102.8" width="2" height="14.3" fill="#7fbc85"/><rect x="810" y="1102.8" width="2" height="14.3" fill="#43be70"/><rect x="820" y="1102.8" width="2" height="14.3" fill="#7aba88"/><rect x="828" y="1102.8" width="2" height="14.3" fill="#7aba88"/><rect x="864" y="1102.8" width="2" height="14.3" fill="#7cba87"/><rect x="886" y="1102.8" width="2" height="14.3" fill="#7bba88"/><rect x="898" y="1102.8" width="2" height="14.3" fill="#89bf80"/><rect x="910" y="1102.8" width="3" height="14.3" fill="#74b78c"/><rect x="916" y="1102.8" width="3" height="14.3" fill="#40bb72"/><rect x="930" y="1102.8" width="2" height="14.3" fill="#8ec17d"/><rect x="934" y="1102.8" width="2" height="14.3" fill="#53c467"/><rect x="948" y="1102.8" width="3" height="14.3" fill="#8ac07f"/><rect x="964" y="1102.8" width="3" height="14.3" fill="#48c06e"/><rect x="966" y="1102.8" width="2" height="14.3" fill="#4dc16b"/><rect x="976" y="1102.8" width="3" height="14.3" fill="#3eba73"/><rect x="996" y="1102.8" width="3" height="14.3" fill="#7cba88"/><rect x="1020" y="1102.8" width="2" height="14.3" fill="#75b88b"/><rect x="1086" y="1102.8" width="2" height="14.3" fill="#78d151"/><rect x="1120" y="1102.8" width="3" height="14.3" fill="#74b78c"/><rect x="1236" y="1102.8" width="2" height="14.3" fill="#55c466"/><rect x="1258" y="1102.8" width="2" height="14.3" fill="#6ecd57"/><rect x="706" y="1088.5" width="2" height="14.3" fill="#65ca5d"/><rect x="742" y="1088.5" width="2" height="14.3" fill="#73b68c"/><rect x="760" y="1088.5" width="2" height="14.3" fill="#78b98a"/><rect x="784" y="1088.5" width="2" height="14.3" fill="#77b88a"/><rect x="796" y="1088.5" width="2" height="14.3" fill="#82bd84"/><rect x="820" y="1088.5" width="3" height="14.3" fill="#52c368"/><rect x="832" y="1088.5" width="2" height="14.3" fill="#70ce56"/><rect x="838" y="1088.5" width="2" height="14.3" fill="#62c95e"/><rect x="876" y="1088.5" width="2" height="14.3" fill="#74b78c"/><rect x="898" y="1088.5" width="2" height="14.3" fill="#7ebb86"/><rect x="906" y="1088.5" width="3" height="14.3" fill="#48c06d"/><rect x="910" y="1088.5" width="2" height="14.3" fill="#72cf55"/><rect x="930" y="1088.5" width="3" height="14.3" fill="#52c368"/><rect x="952" y="1088.5" width="2" height="14.3" fill="#6ccc58"/><rect x="958" y="1088.5" width="2" height="14.3" fill="#7cba87"/><rect x="1002" y="1088.5" width="2" height="14.3" fill="#67ca5c"/><rect x="1036" y="1088.5" width="3" height="14.3" fill="#71ce56"/><rect x="1048" y="1088.5" width="3" height="14.3" fill="#56c565"/><rect x="1072" y="1088.5" width="2" height="14.3" fill="#66ca5c"/><rect x="1092" y="1088.5" width="2" height="14.3" fill="#78b98a"/><rect x="1120" y="1088.5" width="3" height="14.3" fill="#69cb5b"/><rect x="1122" y="1088.5" width="2" height="14.3" fill="#86be81"/><rect x="1168" y="1088.5" width="2" height="14.3" fill="#86be81"/><rect x="1182" y="1088.5" width="2" height="14.3" fill="#4fc26a"/><rect x="1300" y="1088.5" width="2" height="14.3" fill="#75b78c"/><rect x="702" y="1074.2" width="3" height="14.3" fill="#75b78b"/><rect x="760" y="1074.2" width="3" height="14.3" fill="#80bc85"/><rect x="766" y="1074.2" width="2" height="14.3" fill="#8ec17d"/><rect x="784" y="1074.2" width="3" height="14.3" fill="#83bd83"/><rect x="796" y="1074.2" width="2" height="14.3" fill="#52c368"/><rect x="810" y="1074.2" width="2" height="14.3" fill="#74b78c"/><rect x="814" y="1074.2" width="3" height="14.3" fill="#4fc26a"/><rect x="820" y="1074.2" width="2" height="14.3" fill="#48c06d"/><rect x="858" y="1074.2" width="2" height="14.3" fill="#8ec17d"/><rect x="874" y="1074.2" width="2" height="14.3" fill="#45bf6f"/><rect x="922" y="1074.2" width="2" height="14.3" fill="#8bc07f"/><rect x="930" y="1074.2" width="2" height="14.3" fill="#87be81"/><rect x="952" y="1074.2" width="2" height="14.3" fill="#75b78b"/><rect x="960" y="1074.2" width="2" height="14.3" fill="#5fc860"/><rect x="966" y="1074.2" width="2" height="14.3" fill="#76b88b"/><rect x="976" y="1074.2" width="2" height="14.3" fill="#78b98a"/><rect x="1002" y="1074.2" width="3" height="14.3" fill="#75b88b"/><rect x="1006" y="1074.2" width="2" height="14.3" fill="#5dc762"/><rect x="1008" y="1074.2" width="3" height="14.3" fill="#51c368"/><rect x="1030" y="1074.2" width="2" height="14.3" fill="#72cf55"/><rect x="1050" y="1074.2" width="2" height="14.3" fill="#4ac06c"/><rect x="1068" y="1074.2" width="3" height="14.3" fill="#60c860"/><rect x="1122" y="1074.2" width="2" height="14.3" fill="#7dbb87"/><rect x="1174" y="1074.2" width="2" height="14.3" fill="#70ce56"/><rect x="1240" y="1074.2" width="3" height="14.3" fill="#7dbb87"/><rect x="708" y="1059.9" width="3" height="14.3" fill="#7cba87"/><rect x="718" y="1059.9" width="2" height="14.3" fill="#76b88b"/><rect x="732" y="1059.9" width="2" height="14.3" fill="#73cf55"/><rect x="754" y="1059.9" width="2" height="14.3" fill="#63c95e"/><rect x="766" y="1059.9" width="3" height="14.3" fill="#87be80"/><rect x="772" y="1059.9" width="2" height="14.3" fill="#78b989"/><rect x="784" y="1059.9" width="2" height="14.3" fill="#6bcc59"/><rect x="820" y="1059.9" width="2" height="14.3" fill="#85be81"/><rect x="828" y="1059.9" width="3" height="14.3" fill="#41bc72"/><rect x="850" y="1059.9" width="2" height="14.3" fill="#8cc07e"/><rect x="852" y="1059.9" width="2" height="14.3" fill="#73b68c"/><rect x="874" y="1059.9" width="2" height="14.3" fill="#8abf7f"/><rect x="900" y="1059.9" width="2" height="14.3" fill="#76b88b"/><rect x="906" y="1059.9" width="2" height="14.3" fill="#3fbb73"/><rect x="916" y="1059.9" width="2" height="14.3" fill="#7bba88"/><rect x="946" y="1059.9" width="3" height="14.3" fill="#86be81"/><rect x="1002" y="1059.9" width="3" height="14.3" fill="#65ca5d"/><rect x="1026" y="1059.9" width="2" height="14.3" fill="#66ca5c"/><rect x="1030" y="1059.9" width="2" height="14.3" fill="#51c369"/><rect x="1066" y="1059.9" width="3" height="14.3" fill="#7cba87"/><rect x="1110" y="1059.9" width="3" height="14.3" fill="#57c565"/><rect x="1122" y="1059.9" width="3" height="14.3" fill="#76b88b"/><rect x="1134" y="1059.9" width="3" height="14.3" fill="#85be82"/><rect x="1152" y="1059.9" width="2" height="14.3" fill="#50c269"/><rect x="1170" y="1059.9" width="2" height="14.3" fill="#85bd82"/><rect x="1182" y="1059.9" width="3" height="14.3" fill="#40bb72"/><rect x="1224" y="1059.9" width="2" height="14.3" fill="#53c367"/><rect x="1240" y="1059.9" width="3" height="14.3" fill="#8ac07f"/><rect x="1266" y="1059.9" width="3" height="14.3" fill="#6acb5a"/><rect x="1290" y="1059.9" width="2" height="14.3" fill="#63c95e"/><rect x="1440" y="1059.9" width="2" height="14.3" fill="#76b88b"/><rect x="730" y="1045.6" width="2" height="14.3" fill="#89bf80"/><rect x="742" y="1045.6" width="2" height="14.3" fill="#70ce56"/><rect x="760" y="1045.6" width="2" height="14.3" fill="#72ce55"/><rect x="832" y="1045.6" width="2" height="14.3" fill="#50c269"/><rect x="880" y="1045.6" width="3" height="14.3" fill="#8ec17d"/><rect x="906" y="1045.6" width="2" height="14.3" fill="#40bb72"/><rect x="942" y="1045.6" width="2" height="14.3" fill="#46bf6f"/><rect x="960" y="1045.6" width="2" height="14.3" fill="#64c95d"/><rect x="964" y="1045.6" width="3" height="14.3" fill="#75cf54"/><rect x="966" y="1045.6" width="2" height="14.3" fill="#73cf55"/><rect x="976" y="1045.6" width="2" height="14.3" fill="#6acc5a"/><rect x="978" y="1045.6" width="2" height="14.3" fill="#42bd71"/><rect x="994" y="1045.6" width="2" height="14.3" fill="#8ac07f"/><rect x="996" y="1045.6" width="2" height="14.3" fill="#48c06e"/><rect x="1000" y="1045.6" width="3" height="14.3" fill="#73cf54"/><rect x="1002" y="1045.6" width="2" height="14.3" fill="#82bd84"/><rect x="1006" y="1045.6" width="2" height="14.3" fill="#4dc16b"/><rect x="1008" y="1045.6" width="2" height="14.3" fill="#84bd83"/><rect x="1020" y="1045.6" width="2" height="14.3" fill="#7ebb86"/><rect x="1026" y="1045.6" width="2" height="14.3" fill="#7bba88"/><rect x="1030" y="1045.6" width="2" height="14.3" fill="#78b98a"/><rect x="1044" y="1045.6" width="2" height="14.3" fill="#7aba89"/><rect x="1048" y="1045.6" width="2" height="14.3" fill="#7dbb87"/><rect x="1050" y="1045.6" width="2" height="14.3" fill="#42bc71"/><rect x="1060" y="1045.6" width="2" height="14.3" fill="#7ab989"/><rect x="1068" y="1045.6" width="2" height="14.3" fill="#85bd82"/><rect x="1072" y="1045.6" width="2" height="14.3" fill="#8abf7f"/><rect x="1086" y="1045.6" width="2" height="14.3" fill="#41bc72"/><rect x="1096" y="1045.6" width="3" height="14.3" fill="#55c466"/><rect x="1098" y="1045.6" width="2" height="14.3" fill="#42bd71"/><rect x="1102" y="1045.6" width="3" height="14.3" fill="#85be82"/><rect x="1104" y="1045.6" width="2" height="14.3" fill="#57c565"/><rect x="1108" y="1045.6" width="2" height="14.3" fill="#82bd84"/><rect x="1110" y="1045.6" width="2" height="14.3" fill="#49c06d"/><rect x="1114" y="1045.6" width="3" height="14.3" fill="#7fbb86"/><rect x="1122" y="1045.6" width="3" height="14.3" fill="#46bf6f"/><rect x="1128" y="1045.6" width="2" height="14.3" fill="#8dc17d"/><rect x="1132" y="1045.6" width="3" height="14.3" fill="#76b88b"/><rect x="1146" y="1045.6" width="2" height="14.3" fill="#4fc269"/><rect x="1152" y="1045.6" width="2" height="14.3" fill="#7bba88"/><rect x="1164" y="1045.6" width="2" height="14.3" fill="#89bf80"/><rect x="1168" y="1045.6" width="3" height="14.3" fill="#76b88b"/><rect x="1170" y="1045.6" width="2" height="14.3" fill="#77b88a"/><rect x="1174" y="1045.6" width="2" height="14.3" fill="#45be6f"/><rect x="1182" y="1045.6" width="3" height="14.3" fill="#8ec17d"/><rect x="1192" y="1045.6" width="2" height="14.3" fill="#56c465"/><rect x="1198" y="1045.6" width="3" height="14.3" fill="#81bd84"/><rect x="1204" y="1045.6" width="2" height="14.3" fill="#7dbb86"/><rect x="1218" y="1045.6" width="2" height="14.3" fill="#5ac663"/><rect x="1222" y="1045.6" width="2" height="14.3" fill="#7cba88"/><rect x="1224" y="1045.6" width="2" height="14.3" fill="#8ec17d"/><rect x="1228" y="1045.6" width="2" height="14.3" fill="#77d052"/><rect x="1236" y="1045.6" width="2" height="14.3" fill="#77b88a"/><rect x="1240" y="1045.6" width="3" height="14.3" fill="#8ac07f"/><rect x="1242" y="1045.6" width="3" height="14.3" fill="#86be81"/><rect x="1246" y="1045.6" width="2" height="14.3" fill="#8cc07e"/><rect x="1248" y="1045.6" width="2" height="14.3" fill="#43bd71"/><rect x="1254" y="1045.6" width="2" height="14.3" fill="#44be70"/><rect x="1258" y="1045.6" width="3" height="14.3" fill="#48c06d"/><rect x="1260" y="1045.6" width="2" height="14.3" fill="#74b78c"/><rect x="1264" y="1045.6" width="2" height="14.3" fill="#86be81"/><rect x="1266" y="1045.6" width="2" height="14.3" fill="#82bd84"/><rect x="1282" y="1045.6" width="3" height="14.3" fill="#57c565"/><rect x="1284" y="1045.6" width="2" height="14.3" fill="#80bc85"/><rect x="1290" y="1045.6" width="3" height="14.3" fill="#74cf54"/><rect x="1306" y="1045.6" width="2" height="14.3" fill="#3eba74"/><rect x="702" y="1031.2" width="2" height="14.3" fill="#62c95e"/><rect x="708" y="1031.2" width="2" height="14.3" fill="#72cf55"/><rect x="732" y="1031.2" width="2" height="14.3" fill="#79d151"/><rect x="744" y="1031.2" width="2" height="14.3" fill="#71ce56"/><rect x="760" y="1031.2" width="2" height="14.3" fill="#5ac663"/><rect x="772" y="1031.2" width="2" height="14.3" fill="#89bf80"/><rect x="784" y="1031.2" width="2" height="14.3" fill="#74b78c"/><rect x="786" y="1031.2" width="2" height="14.3" fill="#81bd84"/><rect x="804" y="1031.2" width="3" height="14.3" fill="#44be70"/><rect x="832" y="1031.2" width="2" height="14.3" fill="#69cb5a"/><rect x="880" y="1031.2" width="3" height="14.3" fill="#80bc85"/><rect x="910" y="1031.2" width="3" height="14.3" fill="#8abf7f"/><rect x="916" y="1031.2" width="2" height="14.3" fill="#83bd83"/><rect x="922" y="1031.2" width="2" height="14.3" fill="#56c565"/><rect x="948" y="1031.2" width="3" height="14.3" fill="#85be81"/><rect x="1002" y="1031.2" width="2" height="14.3" fill="#3eba73"/><rect x="1038" y="1031.2" width="2" height="14.3" fill="#7fbc85"/><rect x="1072" y="1031.2" width="3" height="14.3" fill="#3eba73"/><rect x="1218" y="1031.2" width="3" height="14.3" fill="#50c269"/><rect x="1246" y="1031.2" width="2" height="14.3" fill="#83bd83"/><rect x="706" y="1016.9" width="2" height="14.3" fill="#44be70"/><rect x="708" y="1016.9" width="2" height="14.3" fill="#78d151"/><rect x="754" y="1016.9" width="2" height="14.3" fill="#86be81"/><rect x="766" y="1016.9" width="3" height="14.3" fill="#75b88b"/><rect x="774" y="1016.9" width="2" height="14.3" fill="#76d053"/><rect x="796" y="1016.9" width="3" height="14.3" fill="#77b88a"/><rect x="810" y="1016.9" width="2" height="14.3" fill="#41bc72"/><rect x="816" y="1016.9" width="2" height="14.3" fill="#8cc07e"/><rect x="832" y="1016.9" width="2" height="14.3" fill="#52c368"/><rect x="852" y="1016.9" width="3" height="14.3" fill="#61c85f"/><rect x="858" y="1016.9" width="2" height="14.3" fill="#7ebb86"/><rect x="874" y="1016.9" width="3" height="14.3" fill="#7cba87"/><rect x="888" y="1016.9" width="2" height="14.3" fill="#84bd83"/><rect x="906" y="1016.9" width="2" height="14.3" fill="#46bf6f"/><rect x="952" y="1016.9" width="2" height="14.3" fill="#7cba87"/><rect x="972" y="1016.9" width="2" height="14.3" fill="#81bc84"/><rect x="984" y="1016.9" width="3" height="14.3" fill="#7bba88"/><rect x="1002" y="1016.9" width="2" height="14.3" fill="#76b88a"/><rect x="1008" y="1016.9" width="2" height="14.3" fill="#83bd83"/><rect x="1086" y="1016.9" width="3" height="14.3" fill="#76b88b"/><rect x="708" y="1002.6" width="2" height="14.3" fill="#77b88a"/><rect x="762" y="1002.6" width="2" height="14.3" fill="#80bc85"/><rect x="772" y="1002.6" width="2" height="14.3" fill="#88bf80"/><rect x="796" y="1002.6" width="2" height="14.3" fill="#49c06d"/><rect x="810" y="1002.6" width="3" height="14.3" fill="#7cbb87"/><rect x="828" y="1002.6" width="2" height="14.3" fill="#78b98a"/><rect x="852" y="1002.6" width="3" height="14.3" fill="#86be81"/><rect x="868" y="1002.6" width="2" height="14.3" fill="#60c85f"/><rect x="898" y="1002.6" width="3" height="14.3" fill="#8ec17d"/><rect x="900" y="1002.6" width="2" height="14.3" fill="#5cc762"/><rect x="922" y="1002.6" width="2" height="14.3" fill="#7ebb86"/><rect x="930" y="1002.6" width="2" height="14.3" fill="#75b88b"/><rect x="934" y="1002.6" width="2" height="14.3" fill="#53c367"/><rect x="946" y="1002.6" width="2" height="14.3" fill="#7bba88"/><rect x="958" y="1002.6" width="3" height="14.3" fill="#8bc07f"/><rect x="960" y="1002.6" width="2" height="14.3" fill="#79b989"/><rect x="1002" y="1002.6" width="3" height="14.3" fill="#6ccc58"/><rect x="1024" y="1002.6" width="2" height="14.3" fill="#82bd84"/><rect x="1036" y="1002.6" width="2" height="14.3" fill="#57c565"/><rect x="1272" y="1002.6" width="3" height="14.3" fill="#83bd83"/><rect x="708" y="988.3" width="3" height="14.3" fill="#80bc85"/><rect x="732" y="988.3" width="2" height="14.3" fill="#5fc860"/><rect x="754" y="988.3" width="2" height="14.3" fill="#4bc16c"/><rect x="760" y="988.3" width="2" height="14.3" fill="#87be80"/><rect x="766" y="988.3" width="2" height="14.3" fill="#88bf80"/><rect x="796" y="988.3" width="3" height="14.3" fill="#87be80"/><rect x="820" y="988.3" width="2" height="14.3" fill="#76d053"/><rect x="852" y="988.3" width="2" height="14.3" fill="#7bba88"/><rect x="880" y="988.3" width="2" height="14.3" fill="#7bba88"/><rect x="886" y="988.3" width="2" height="14.3" fill="#81bd84"/><rect x="888" y="988.3" width="2" height="14.3" fill="#6bcc59"/><rect x="894" y="988.3" width="2" height="14.3" fill="#7bba88"/><rect x="898" y="988.3" width="2" height="14.3" fill="#4fc26a"/><rect x="900" y="988.3" width="2" height="14.3" fill="#53c367"/><rect x="940" y="988.3" width="2" height="14.3" fill="#85be82"/><rect x="976" y="988.3" width="2" height="14.3" fill="#71ce56"/><rect x="978" y="988.3" width="2" height="14.3" fill="#85bd82"/><rect x="994" y="988.3" width="2" height="14.3" fill="#8bc07e"/><rect x="1006" y="988.3" width="2" height="14.3" fill="#7dbb87"/><rect x="1038" y="988.3" width="2" height="14.3" fill="#48bf6e"/><rect x="1072" y="988.3" width="2" height="14.3" fill="#3eba73"/><rect x="1092" y="988.3" width="2" height="14.3" fill="#73cf55"/><rect x="1134" y="988.3" width="2" height="14.3" fill="#8abf7f"/><rect x="1198" y="988.3" width="2" height="14.3" fill="#4ec26a"/><rect x="1302" y="988.3" width="2" height="14.3" fill="#44be70"/><rect x="1312" y="988.3" width="3" height="14.3" fill="#48bf6e"/><rect x="708" y="974.0" width="2" height="14.3" fill="#8ac07f"/><rect x="766" y="974.0" width="2" height="14.3" fill="#79b989"/><rect x="796" y="974.0" width="2" height="14.3" fill="#65ca5d"/><rect x="810" y="974.0" width="2" height="14.3" fill="#76d053"/><rect x="814" y="974.0" width="3" height="14.3" fill="#8cc07e"/><rect x="820" y="974.0" width="2" height="14.3" fill="#40bb73"/><rect x="828" y="974.0" width="2" height="14.3" fill="#76b88a"/><rect x="850" y="974.0" width="2" height="14.3" fill="#83bd83"/><rect x="880" y="974.0" width="2" height="14.3" fill="#5ac663"/><rect x="906" y="974.0" width="2" height="14.3" fill="#40bb72"/><rect x="912" y="974.0" width="2" height="14.3" fill="#8ec17d"/><rect x="916" y="974.0" width="3" height="14.3" fill="#78b98a"/><rect x="922" y="974.0" width="2" height="14.3" fill="#86be81"/><rect x="930" y="974.0" width="3" height="14.3" fill="#40bc72"/><rect x="942" y="974.0" width="2" height="14.3" fill="#6ccc58"/><rect x="952" y="974.0" width="2" height="14.3" fill="#53c367"/><rect x="960" y="974.0" width="2" height="14.3" fill="#56c565"/><rect x="996" y="974.0" width="3" height="14.3" fill="#72ce55"/><rect x="1008" y="974.0" width="2" height="14.3" fill="#81bc85"/><rect x="1020" y="974.0" width="2" height="14.3" fill="#85be82"/><rect x="1026" y="974.0" width="3" height="14.3" fill="#6ccc58"/><rect x="1156" y="974.0" width="2" height="14.3" fill="#59c564"/><rect x="1182" y="974.0" width="2" height="14.3" fill="#52c368"/><rect x="1212" y="974.0" width="2" height="14.3" fill="#88bf80"/><rect x="1260" y="974.0" width="2" height="14.3" fill="#68cb5b"/><rect x="1290" y="974.0" width="2" height="14.3" fill="#3eba73"/><rect x="724" y="959.7" width="3" height="14.3" fill="#61c85f"/><rect x="784" y="959.7" width="2" height="14.3" fill="#8ec17c"/><rect x="796" y="959.7" width="2" height="14.3" fill="#44be70"/><rect x="820" y="959.7" width="2" height="14.3" fill="#5ec761"/><rect x="832" y="959.7" width="3" height="14.3" fill="#79b989"/><rect x="850" y="959.7" width="3" height="14.3" fill="#74b78c"/><rect x="898" y="959.7" width="3" height="14.3" fill="#55c466"/><rect x="906" y="959.7" width="2" height="14.3" fill="#3fbb73"/><rect x="960" y="959.7" width="3" height="14.3" fill="#7fbb85"/><rect x="972" y="959.7" width="2" height="14.3" fill="#83bd83"/><rect x="994" y="959.7" width="3" height="14.3" fill="#72cf55"/><rect x="1008" y="959.7" width="2" height="14.3" fill="#76b88a"/><rect x="1020" y="959.7" width="3" height="14.3" fill="#58c564"/><rect x="1042" y="959.7" width="3" height="14.3" fill="#86be81"/><rect x="1158" y="959.7" width="2" height="14.3" fill="#78b98a"/><rect x="1164" y="959.7" width="2" height="14.3" fill="#49c06d"/><rect x="1168" y="959.7" width="2" height="14.3" fill="#3fbb73"/><rect x="1234" y="959.7" width="3" height="14.3" fill="#6dcd58"/><rect x="1314" y="959.7" width="2" height="14.3" fill="#5cc662"/><rect x="732" y="945.4" width="3" height="14.3" fill="#83bd83"/><rect x="760" y="945.4" width="2" height="14.3" fill="#83bd83"/><rect x="766" y="945.4" width="2" height="14.3" fill="#73cf55"/><rect x="784" y="945.4" width="2" height="14.3" fill="#68cb5b"/><rect x="796" y="945.4" width="2" height="14.3" fill="#42bc71"/><rect x="808" y="945.4" width="2" height="14.3" fill="#7cbb87"/><rect x="810" y="945.4" width="2" height="14.3" fill="#6ecd57"/><rect x="850" y="945.4" width="2" height="14.3" fill="#76b88b"/><rect x="852" y="945.4" width="2" height="14.3" fill="#8ec17d"/><rect x="876" y="945.4" width="3" height="14.3" fill="#73b78c"/><rect x="936" y="945.4" width="3" height="14.3" fill="#87be81"/><rect x="940" y="945.4" width="3" height="14.3" fill="#47bf6e"/><rect x="952" y="945.4" width="2" height="14.3" fill="#7cba87"/><rect x="964" y="945.4" width="3" height="14.3" fill="#8cc07e"/><rect x="1006" y="945.4" width="2" height="14.3" fill="#60c860"/><rect x="1008" y="945.4" width="2" height="14.3" fill="#8abf7f"/><rect x="1020" y="945.4" width="3" height="14.3" fill="#74cf54"/><rect x="1026" y="945.4" width="2" height="14.3" fill="#6dcd58"/><rect x="1030" y="945.4" width="3" height="14.3" fill="#41bc72"/><rect x="1044" y="945.4" width="2" height="14.3" fill="#7fbb86"/><rect x="1048" y="945.4" width="2" height="14.3" fill="#7bba88"/><rect x="1122" y="945.4" width="3" height="14.3" fill="#89bf80"/><rect x="1126" y="945.4" width="2" height="14.3" fill="#53c367"/><rect x="1212" y="945.4" width="3" height="14.3" fill="#88be80"/><rect x="1224" y="945.4" width="2" height="14.3" fill="#8dc17d"/><rect x="1240" y="945.4" width="2" height="14.3" fill="#7bba88"/><rect x="702" y="931.1" width="2" height="14.3" fill="#7aba89"/><rect x="742" y="931.1" width="2" height="14.3" fill="#7fbc85"/><rect x="760" y="931.1" width="2" height="14.3" fill="#85bd82"/><rect x="768" y="931.1" width="2" height="14.3" fill="#62c95f"/><rect x="792" y="931.1" width="2" height="14.3" fill="#84bd83"/><rect x="796" y="931.1" width="2" height="14.3" fill="#56c466"/><rect x="826" y="931.1" width="2" height="14.3" fill="#72ce55"/><rect x="850" y="931.1" width="2" height="14.3" fill="#65ca5d"/><rect x="852" y="931.1" width="3" height="14.3" fill="#40bb72"/><rect x="882" y="931.1" width="3" height="14.3" fill="#74b78c"/><rect x="898" y="931.1" width="2" height="14.3" fill="#60c860"/><rect x="900" y="931.1" width="2" height="14.3" fill="#85bd82"/><rect x="904" y="931.1" width="2" height="14.3" fill="#8ec17c"/><rect x="906" y="931.1" width="2" height="14.3" fill="#76b88b"/><rect x="928" y="931.1" width="3" height="14.3" fill="#78b98a"/><rect x="940" y="931.1" width="2" height="14.3" fill="#79b989"/><rect x="952" y="931.1" width="3" height="14.3" fill="#4ec16a"/><rect x="960" y="931.1" width="2" height="14.3" fill="#4fc26a"/><rect x="984" y="931.1" width="2" height="14.3" fill="#78b98a"/><rect x="1008" y="931.1" width="2" height="14.3" fill="#6fcd57"/><rect x="1026" y="931.1" width="2" height="14.3" fill="#48bf6e"/><rect x="1030" y="931.1" width="2" height="14.3" fill="#76b88b"/><rect x="1038" y="931.1" width="2" height="14.3" fill="#45be70"/><rect x="1048" y="931.1" width="2" height="14.3" fill="#74b78c"/><rect x="1198" y="931.1" width="2" height="14.3" fill="#86be81"/><rect x="1258" y="931.1" width="3" height="14.3" fill="#76b88b"/><rect x="1282" y="931.1" width="2" height="14.3" fill="#43bd71"/><rect x="708" y="916.8" width="2" height="14.3" fill="#8abf7f"/><rect x="718" y="916.8" width="2" height="14.3" fill="#78b98a"/><rect x="732" y="916.8" width="3" height="14.3" fill="#78d152"/><rect x="760" y="916.8" width="2" height="14.3" fill="#7ebb86"/><rect x="766" y="916.8" width="2" height="14.3" fill="#8dc07e"/><rect x="772" y="916.8" width="2" height="14.3" fill="#73cf55"/><rect x="810" y="916.8" width="3" height="14.3" fill="#41bc72"/><rect x="826" y="916.8" width="2" height="14.3" fill="#78b98a"/><rect x="858" y="916.8" width="2" height="14.3" fill="#83bd83"/><rect x="864" y="916.8" width="2" height="14.3" fill="#80bc85"/><rect x="876" y="916.8" width="2" height="14.3" fill="#74b78c"/><rect x="880" y="916.8" width="2" height="14.3" fill="#3eba74"/><rect x="900" y="916.8" width="2" height="14.3" fill="#76b88b"/><rect x="906" y="916.8" width="2" height="14.3" fill="#79b989"/><rect x="924" y="916.8" width="2" height="14.3" fill="#74b78c"/><rect x="952" y="916.8" width="2" height="14.3" fill="#75d053"/><rect x="958" y="916.8" width="3" height="14.3" fill="#8bc07e"/><rect x="984" y="916.8" width="2" height="14.3" fill="#4fc26a"/><rect x="1002" y="916.8" width="2" height="14.3" fill="#82bd84"/><rect x="1008" y="916.8" width="2" height="14.3" fill="#78b98a"/><rect x="1026" y="916.8" width="2" height="14.3" fill="#43bd71"/><rect x="1038" y="916.8" width="2" height="14.3" fill="#8bc07e"/><rect x="1114" y="916.8" width="2" height="14.3" fill="#77d052"/><rect x="1224" y="916.8" width="3" height="14.3" fill="#45be6f"/><rect x="1374" y="916.8" width="2" height="14.3" fill="#78d152"/><rect x="702" y="902.5" width="2" height="14.3" fill="#66ca5c"/><rect x="706" y="902.5" width="2" height="14.3" fill="#50c269"/><rect x="708" y="902.5" width="2" height="14.3" fill="#84bd83"/><rect x="718" y="902.5" width="2" height="14.3" fill="#83bd83"/><rect x="730" y="902.5" width="3" height="14.3" fill="#74b78c"/><rect x="760" y="902.5" width="2" height="14.3" fill="#75b88b"/><rect x="762" y="902.5" width="3" height="14.3" fill="#46bf6f"/><rect x="772" y="902.5" width="3" height="14.3" fill="#56c466"/><rect x="778" y="902.5" width="3" height="14.3" fill="#41bc72"/><rect x="820" y="902.5" width="3" height="14.3" fill="#41bc72"/><rect x="832" y="902.5" width="2" height="14.3" fill="#75d053"/><rect x="850" y="902.5" width="2" height="14.3" fill="#7aba89"/><rect x="900" y="902.5" width="2" height="14.3" fill="#80bc85"/><rect x="910" y="902.5" width="2" height="14.3" fill="#77d052"/><rect x="928" y="902.5" width="3" height="14.3" fill="#4bc06c"/><rect x="960" y="902.5" width="3" height="14.3" fill="#7fbc85"/><rect x="966" y="902.5" width="2" height="14.3" fill="#3dba74"/><rect x="984" y="902.5" width="3" height="14.3" fill="#3eba74"/><rect x="1054" y="902.5" width="2" height="14.3" fill="#4ec26a"/><rect x="1108" y="902.5" width="2" height="14.3" fill="#7aba89"/><rect x="1168" y="902.5" width="2" height="14.3" fill="#7cba87"/><rect x="1242" y="902.5" width="2" height="14.3" fill="#5ac663"/><rect x="702" y="888.1" width="2" height="14.3" fill="#8bc07e"/><rect x="708" y="888.1" width="2" height="14.3" fill="#51c368"/><rect x="714" y="888.1" width="3" height="14.3" fill="#83bd83"/><rect x="720" y="888.1" width="2" height="14.3" fill="#80bc85"/><rect x="732" y="888.1" width="2" height="14.3" fill="#8cc07e"/><rect x="756" y="888.1" width="2" height="14.3" fill="#74b78c"/><rect x="766" y="888.1" width="2" height="14.3" fill="#8ac07f"/><rect x="774" y="888.1" width="2" height="14.3" fill="#85be81"/><rect x="816" y="888.1" width="2" height="14.3" fill="#47bf6e"/><rect x="852" y="888.1" width="2" height="14.3" fill="#6fcd57"/><rect x="904" y="888.1" width="3" height="14.3" fill="#41bc72"/><rect x="906" y="888.1" width="2" height="14.3" fill="#72cf55"/><rect x="910" y="888.1" width="2" height="14.3" fill="#8bc07f"/><rect x="912" y="888.1" width="2" height="14.3" fill="#4bc16c"/><rect x="928" y="888.1" width="2" height="14.3" fill="#58c564"/><rect x="958" y="888.1" width="2" height="14.3" fill="#83bd83"/><rect x="1002" y="888.1" width="3" height="14.3" fill="#42bc71"/><rect x="1008" y="888.1" width="2" height="14.3" fill="#6bcc59"/><rect x="1036" y="888.1" width="2" height="14.3" fill="#47bf6e"/><rect x="1044" y="888.1" width="2" height="14.3" fill="#40bb73"/><rect x="1110" y="888.1" width="2" height="14.3" fill="#7aba88"/><rect x="1146" y="888.1" width="2" height="14.3" fill="#77d052"/><rect x="1194" y="888.1" width="2" height="14.3" fill="#8bc07f"/><rect x="1240" y="888.1" width="2" height="14.3" fill="#7ebb86"/><rect x="706" y="873.8" width="3" height="14.3" fill="#5ac663"/><rect x="708" y="873.8" width="2" height="14.3" fill="#75b78b"/><rect x="718" y="873.8" width="2" height="14.3" fill="#61c85f"/><rect x="732" y="873.8" width="2" height="14.3" fill="#49c06d"/><rect x="754" y="873.8" width="3" height="14.3" fill="#84bd83"/><rect x="760" y="873.8" width="2" height="14.3" fill="#4ac06d"/><rect x="766" y="873.8" width="2" height="14.3" fill="#68cb5b"/><rect x="784" y="873.8" width="2" height="14.3" fill="#7bba88"/><rect x="796" y="873.8" width="2" height="14.3" fill="#5ec761"/><rect x="808" y="873.8" width="2" height="14.3" fill="#7aba88"/><rect x="820" y="873.8" width="2" height="14.3" fill="#73cf55"/><rect x="826" y="873.8" width="2" height="14.3" fill="#7ebb86"/><rect x="850" y="873.8" width="2" height="14.3" fill="#8dc07e"/><rect x="852" y="873.8" width="2" height="14.3" fill="#65ca5d"/><rect x="880" y="873.8" width="2" height="14.3" fill="#49c06d"/><rect x="898" y="873.8" width="2" height="14.3" fill="#85be82"/><rect x="900" y="873.8" width="2" height="14.3" fill="#7aba88"/><rect x="916" y="873.8" width="2" height="14.3" fill="#7aba89"/><rect x="940" y="873.8" width="2" height="14.3" fill="#7fbb86"/><rect x="952" y="873.8" width="2" height="14.3" fill="#83bd83"/><rect x="960" y="873.8" width="3" height="14.3" fill="#77b88a"/><rect x="966" y="873.8" width="3" height="14.3" fill="#73cf55"/><rect x="1002" y="873.8" width="2" height="14.3" fill="#76b88b"/><rect x="1024" y="873.8" width="2" height="14.3" fill="#75b78b"/><rect x="1072" y="873.8" width="2" height="14.3" fill="#77b88a"/><rect x="1108" y="873.8" width="2" height="14.3" fill="#4cc16b"/><rect x="708" y="859.5" width="2" height="14.3" fill="#87be80"/><rect x="724" y="859.5" width="3" height="14.3" fill="#8cc07e"/><rect x="742" y="859.5" width="2" height="14.3" fill="#83bd83"/><rect x="750" y="859.5" width="2" height="14.3" fill="#78b98a"/><rect x="754" y="859.5" width="3" height="14.3" fill="#41bc72"/><rect x="756" y="859.5" width="3" height="14.3" fill="#8dc07e"/><rect x="760" y="859.5" width="2" height="14.3" fill="#66ca5c"/><rect x="766" y="859.5" width="3" height="14.3" fill="#7cbb87"/><rect x="772" y="859.5" width="3" height="14.3" fill="#5fc860"/><rect x="774" y="859.5" width="3" height="14.3" fill="#76b88b"/><rect x="778" y="859.5" width="2" height="14.3" fill="#7cba87"/><rect x="784" y="859.5" width="2" height="14.3" fill="#89bf80"/><rect x="796" y="859.5" width="2" height="14.3" fill="#74b78c"/><rect x="802" y="859.5" width="2" height="14.3" fill="#5bc663"/><rect x="820" y="859.5" width="3" height="14.3" fill="#63c95e"/><rect x="826" y="859.5" width="2" height="14.3" fill="#77b88a"/><rect x="828" y="859.5" width="3" height="14.3" fill="#5cc662"/><rect x="832" y="859.5" width="2" height="14.3" fill="#4ec26a"/><rect x="850" y="859.5" width="3" height="14.3" fill="#47bf6e"/><rect x="852" y="859.5" width="2" height="14.3" fill="#79b989"/><rect x="894" y="859.5" width="3" height="14.3" fill="#3db974"/><rect x="898" y="859.5" width="2" height="14.3" fill="#54c467"/><rect x="900" y="859.5" width="2" height="14.3" fill="#86be81"/><rect x="910" y="859.5" width="2" height="14.3" fill="#82bd84"/><rect x="1008" y="859.5" width="2" height="14.3" fill="#8dc17d"/><rect x="702" y="845.2" width="2" height="14.3" fill="#67cb5b"/><rect x="708" y="845.2" width="2" height="14.3" fill="#68cb5b"/><rect x="718" y="845.2" width="2" height="14.3" fill="#7cbb87"/><rect x="742" y="845.2" width="2" height="14.3" fill="#6acc5a"/><rect x="754" y="845.2" width="2" height="14.3" fill="#78d151"/><rect x="760" y="845.2" width="2" height="14.3" fill="#6dcd58"/><rect x="772" y="845.2" width="2" height="14.3" fill="#7fbb85"/><rect x="784" y="845.2" width="2" height="14.3" fill="#69cb5a"/><rect x="790" y="845.2" width="2" height="14.3" fill="#67cb5b"/><rect x="804" y="845.2" width="2" height="14.3" fill="#65ca5d"/><rect x="808" y="845.2" width="2" height="14.3" fill="#5ac663"/><rect x="820" y="845.2" width="2" height="14.3" fill="#4ac06d"/><rect x="832" y="845.2" width="2" height="14.3" fill="#50c269"/><rect x="846" y="845.2" width="3" height="14.3" fill="#8abf7f"/><rect x="850" y="845.2" width="3" height="14.3" fill="#80bc85"/><rect x="852" y="845.2" width="2" height="14.3" fill="#4fc269"/><rect x="898" y="845.2" width="3" height="14.3" fill="#48c06d"/><rect x="900" y="845.2" width="2" height="14.3" fill="#7fbc85"/><rect x="910" y="845.2" width="2" height="14.3" fill="#8abf7f"/><rect x="952" y="845.2" width="2" height="14.3" fill="#80bc85"/><rect x="960" y="845.2" width="2" height="14.3" fill="#7cbb87"/><rect x="964" y="845.2" width="2" height="14.3" fill="#85be82"/><rect x="1002" y="845.2" width="2" height="14.3" fill="#6fce57"/><rect x="1030" y="845.2" width="2" height="14.3" fill="#7bba88"/><rect x="702" y="830.9" width="3" height="14.3" fill="#78b98a"/><rect x="706" y="830.9" width="2" height="14.3" fill="#7fbb86"/><rect x="708" y="830.9" width="2" height="14.3" fill="#53c367"/><rect x="738" y="830.9" width="2" height="14.3" fill="#6acc5a"/><rect x="742" y="830.9" width="2" height="14.3" fill="#8abf7f"/><rect x="760" y="830.9" width="3" height="14.3" fill="#8abf7f"/><rect x="766" y="830.9" width="2" height="14.3" fill="#8dc17d"/><rect x="774" y="830.9" width="3" height="14.3" fill="#88bf80"/><rect x="784" y="830.9" width="2" height="14.3" fill="#76b88b"/><rect x="796" y="830.9" width="2" height="14.3" fill="#8cc07e"/><rect x="804" y="830.9" width="2" height="14.3" fill="#43bd71"/><rect x="820" y="830.9" width="2" height="14.3" fill="#7cbb87"/><rect x="826" y="830.9" width="2" height="14.3" fill="#8cc07e"/><rect x="832" y="830.9" width="2" height="14.3" fill="#84bd83"/><rect x="840" y="830.9" width="3" height="14.3" fill="#76d053"/><rect x="846" y="830.9" width="3" height="14.3" fill="#7ebb86"/><rect x="852" y="830.9" width="2" height="14.3" fill="#78d152"/><rect x="864" y="830.9" width="2" height="14.3" fill="#84bd83"/><rect x="886" y="830.9" width="2" height="14.3" fill="#89bf80"/><rect x="900" y="830.9" width="3" height="14.3" fill="#7cba87"/><rect x="916" y="830.9" width="2" height="14.3" fill="#8ec17d"/><rect x="1002" y="830.9" width="2" height="14.3" fill="#76b88b"/><rect x="708" y="816.6" width="2" height="14.3" fill="#76b88a"/><rect x="720" y="816.6" width="2" height="14.3" fill="#83bd83"/><rect x="732" y="816.6" width="2" height="14.3" fill="#7cba87"/><rect x="754" y="816.6" width="2" height="14.3" fill="#85be82"/><rect x="766" y="816.6" width="2" height="14.3" fill="#8ec17d"/><rect x="784" y="816.6" width="3" height="14.3" fill="#6dcd58"/><rect x="790" y="816.6" width="2" height="14.3" fill="#75b88b"/><rect x="796" y="816.6" width="2" height="14.3" fill="#86be81"/><rect x="810" y="816.6" width="3" height="14.3" fill="#65ca5d"/><rect x="820" y="816.6" width="2" height="14.3" fill="#3fba73"/><rect x="832" y="816.6" width="2" height="14.3" fill="#7fbc85"/><rect x="840" y="816.6" width="2" height="14.3" fill="#46bf6f"/><rect x="850" y="816.6" width="2" height="14.3" fill="#75b78b"/><rect x="852" y="816.6" width="2" height="14.3" fill="#8dc17d"/><rect x="880" y="816.6" width="2" height="14.3" fill="#41bc72"/><rect x="898" y="816.6" width="3" height="14.3" fill="#57c565"/><rect x="900" y="816.6" width="2" height="14.3" fill="#7ebb86"/><rect x="906" y="816.6" width="3" height="14.3" fill="#79b989"/><rect x="940" y="816.6" width="3" height="14.3" fill="#74cf54"/><rect x="946" y="816.6" width="3" height="14.3" fill="#66ca5c"/><rect x="948" y="816.6" width="2" height="14.3" fill="#6dcd58"/><rect x="960" y="816.6" width="2" height="14.3" fill="#4cc16b"/><rect x="966" y="816.6" width="2" height="14.3" fill="#7aba89"/><rect x="976" y="816.6" width="2" height="14.3" fill="#7aba89"/><rect x="982" y="816.6" width="2" height="14.3" fill="#79b989"/><rect x="1026" y="816.6" width="2" height="14.3" fill="#41bc72"/><rect x="1030" y="816.6" width="2" height="14.3" fill="#80bc85"/><rect x="708" y="802.3" width="2" height="14.3" fill="#88bf80"/><rect x="718" y="802.3" width="2" height="14.3" fill="#7dbb86"/><rect x="720" y="802.3" width="2" height="14.3" fill="#6dcd58"/><rect x="730" y="802.3" width="2" height="14.3" fill="#44be70"/><rect x="748" y="802.3" width="2" height="14.3" fill="#46bf6f"/><rect x="760" y="802.3" width="2" height="14.3" fill="#8bc07e"/><rect x="766" y="802.3" width="3" height="14.3" fill="#7aba89"/><rect x="768" y="802.3" width="3" height="14.3" fill="#8bc07e"/><rect x="796" y="802.3" width="2" height="14.3" fill="#3eba74"/><rect x="802" y="802.3" width="3" height="14.3" fill="#76b88b"/><rect x="808" y="802.3" width="2" height="14.3" fill="#75b78b"/><rect x="820" y="802.3" width="3" height="14.3" fill="#7aba89"/><rect x="826" y="802.3" width="3" height="14.3" fill="#48bf6e"/><rect x="840" y="802.3" width="2" height="14.3" fill="#7dbb87"/><rect x="850" y="802.3" width="3" height="14.3" fill="#89bf80"/><rect x="886" y="802.3" width="3" height="14.3" fill="#7ebb86"/><rect x="922" y="802.3" width="2" height="14.3" fill="#44be70"/><rect x="928" y="802.3" width="3" height="14.3" fill="#4ec16a"/><rect x="940" y="802.3" width="3" height="14.3" fill="#85be82"/><rect x="948" y="802.3" width="3" height="14.3" fill="#7ebb86"/><rect x="1008" y="802.3" width="2" height="14.3" fill="#77d052"/><rect x="1098" y="802.3" width="2" height="14.3" fill="#7aba89"/><rect x="706" y="788.0" width="3" height="14.3" fill="#52c368"/><rect x="708" y="788.0" width="2" height="14.3" fill="#78b98a"/><rect x="742" y="788.0" width="3" height="14.3" fill="#7fbc85"/><rect x="760" y="788.0" width="2" height="14.3" fill="#8abf7f"/><rect x="766" y="788.0" width="2" height="14.3" fill="#50c269"/><rect x="772" y="788.0" width="2" height="14.3" fill="#80bc85"/><rect x="774" y="788.0" width="2" height="14.3" fill="#89bf80"/><rect x="786" y="788.0" width="2" height="14.3" fill="#5cc762"/><rect x="792" y="788.0" width="2" height="14.3" fill="#76b88b"/><rect x="814" y="788.0" width="2" height="14.3" fill="#81bc84"/><rect x="820" y="788.0" width="2" height="14.3" fill="#8cc07e"/><rect x="826" y="788.0" width="2" height="14.3" fill="#77d052"/><rect x="832" y="788.0" width="2" height="14.3" fill="#8ac07f"/><rect x="850" y="788.0" width="2" height="14.3" fill="#58c564"/><rect x="852" y="788.0" width="2" height="14.3" fill="#8cc07e"/><rect x="880" y="788.0" width="2" height="14.3" fill="#88bf80"/><rect x="906" y="788.0" width="3" height="14.3" fill="#73cf55"/><rect x="916" y="788.0" width="2" height="14.3" fill="#5ec761"/><rect x="918" y="788.0" width="3" height="14.3" fill="#8ac07f"/><rect x="930" y="788.0" width="2" height="14.3" fill="#74cf54"/><rect x="964" y="788.0" width="2" height="14.3" fill="#3eba73"/><rect x="982" y="788.0" width="3" height="14.3" fill="#7aba89"/><rect x="984" y="788.0" width="2" height="14.3" fill="#75d053"/><rect x="1132" y="788.0" width="2" height="14.3" fill="#80bc85"/><rect x="706" y="773.7" width="2" height="14.3" fill="#68cb5b"/><rect x="708" y="773.7" width="3" height="14.3" fill="#5ac663"/><rect x="718" y="773.7" width="2" height="14.3" fill="#8ec17d"/><rect x="766" y="773.7" width="2" height="14.3" fill="#81bd84"/><rect x="784" y="773.7" width="2" height="14.3" fill="#87be80"/><rect x="796" y="773.7" width="2" height="14.3" fill="#6ccc59"/><rect x="820" y="773.7" width="3" height="14.3" fill="#61c85f"/><rect x="826" y="773.7" width="3" height="14.3" fill="#44be70"/><rect x="828" y="773.7" width="3" height="14.3" fill="#7dbb87"/><rect x="832" y="773.7" width="2" height="14.3" fill="#6dcd58"/><rect x="850" y="773.7" width="2" height="14.3" fill="#42bd71"/><rect x="870" y="773.7" width="2" height="14.3" fill="#78b98a"/><rect x="906" y="773.7" width="3" height="14.3" fill="#84bd82"/><rect x="912" y="773.7" width="2" height="14.3" fill="#86be81"/><rect x="916" y="773.7" width="3" height="14.3" fill="#79b989"/><rect x="922" y="773.7" width="3" height="14.3" fill="#8dc17d"/><rect x="940" y="773.7" width="3" height="14.3" fill="#48c06d"/><rect x="976" y="773.7" width="2" height="14.3" fill="#52c368"/><rect x="1002" y="773.7" width="2" height="14.3" fill="#89bf80"/><rect x="1008" y="773.7" width="2" height="14.3" fill="#7cba87"/><rect x="1020" y="773.7" width="2" height="14.3" fill="#74b78c"/><rect x="1102" y="773.7" width="2" height="14.3" fill="#72ce55"/><rect x="1134" y="773.7" width="3" height="14.3" fill="#64ca5d"/><rect x="1164" y="773.7" width="2" height="14.3" fill="#49c06d"/><rect x="1212" y="773.7" width="2" height="14.3" fill="#8cc07e"/><rect x="708" y="759.4" width="2" height="14.3" fill="#61c95f"/><rect x="720" y="759.4" width="3" height="14.3" fill="#7cbb87"/><rect x="742" y="759.4" width="3" height="14.3" fill="#76b88b"/><rect x="744" y="759.4" width="2" height="14.3" fill="#8ac07f"/><rect x="760" y="759.4" width="2" height="14.3" fill="#65ca5d"/><rect x="762" y="759.4" width="2" height="14.3" fill="#73b78c"/><rect x="766" y="759.4" width="3" height="14.3" fill="#7aba88"/><rect x="784" y="759.4" width="3" height="14.3" fill="#56c565"/><rect x="820" y="759.4" width="2" height="14.3" fill="#79b989"/><rect x="826" y="759.4" width="2" height="14.3" fill="#77b88a"/><rect x="844" y="759.4" width="2" height="14.3" fill="#81bd84"/><rect x="850" y="759.4" width="2" height="14.3" fill="#71ce56"/><rect x="852" y="759.4" width="3" height="14.3" fill="#76b88b"/><rect x="894" y="759.4" width="3" height="14.3" fill="#7dbb86"/><rect x="906" y="759.4" width="2" height="14.3" fill="#61c85f"/><rect x="916" y="759.4" width="3" height="14.3" fill="#8abf7f"/><rect x="928" y="759.4" width="2" height="14.3" fill="#79b989"/><rect x="934" y="759.4" width="3" height="14.3" fill="#75d053"/><rect x="964" y="759.4" width="2" height="14.3" fill="#5dc761"/><rect x="1008" y="759.4" width="3" height="14.3" fill="#74b78c"/><rect x="1134" y="759.4" width="2" height="14.3" fill="#60c860"/><rect x="702" y="745.0" width="2" height="14.3" fill="#74b78c"/><rect x="706" y="745.0" width="2" height="14.3" fill="#8ac07f"/><rect x="708" y="745.0" width="2" height="14.3" fill="#77b88a"/><rect x="736" y="745.0" width="2" height="14.3" fill="#8dc07e"/><rect x="760" y="745.0" width="2" height="14.3" fill="#5ec761"/><rect x="766" y="745.0" width="2" height="14.3" fill="#82bd84"/><rect x="774" y="745.0" width="2" height="14.3" fill="#4ac06d"/><rect x="796" y="745.0" width="2" height="14.3" fill="#7ebb86"/><rect x="810" y="745.0" width="3" height="14.3" fill="#7dbb87"/><rect x="820" y="745.0" width="2" height="14.3" fill="#88be80"/><rect x="828" y="745.0" width="2" height="14.3" fill="#7aba88"/><rect x="832" y="745.0" width="3" height="14.3" fill="#7fbc85"/><rect x="850" y="745.0" width="2" height="14.3" fill="#80bc85"/><rect x="852" y="745.0" width="2" height="14.3" fill="#5ec761"/><rect x="880" y="745.0" width="2" height="14.3" fill="#4ec26a"/><rect x="942" y="745.0" width="2" height="14.3" fill="#8ec17d"/><rect x="948" y="745.0" width="2" height="14.3" fill="#81bc84"/><rect x="1008" y="745.0" width="2" height="14.3" fill="#4ec16a"/><rect x="1108" y="745.0" width="2" height="14.3" fill="#79b989"/><rect x="702" y="730.7" width="3" height="14.3" fill="#74cf54"/><rect x="706" y="730.7" width="2" height="14.3" fill="#81bd84"/><rect x="708" y="730.7" width="2" height="14.3" fill="#8bc07e"/><rect x="732" y="730.7" width="3" height="14.3" fill="#8ec17d"/><rect x="742" y="730.7" width="2" height="14.3" fill="#78b98a"/><rect x="754" y="730.7" width="2" height="14.3" fill="#8abf7f"/><rect x="756" y="730.7" width="2" height="14.3" fill="#67cb5b"/><rect x="760" y="730.7" width="2" height="14.3" fill="#8ec17c"/><rect x="766" y="730.7" width="2" height="14.3" fill="#75b88b"/><rect x="772" y="730.7" width="2" height="14.3" fill="#81bd84"/><rect x="774" y="730.7" width="3" height="14.3" fill="#42bd71"/><rect x="780" y="730.7" width="2" height="14.3" fill="#7bba88"/><rect x="784" y="730.7" width="2" height="14.3" fill="#8ec17d"/><rect x="796" y="730.7" width="2" height="14.3" fill="#75b78b"/><rect x="802" y="730.7" width="2" height="14.3" fill="#74b78c"/><rect x="804" y="730.7" width="2" height="14.3" fill="#7fbc85"/><rect x="820" y="730.7" width="2" height="14.3" fill="#6ccc59"/><rect x="832" y="730.7" width="2" height="14.3" fill="#76d053"/><rect x="850" y="730.7" width="2" height="14.3" fill="#83bd83"/><rect x="852" y="730.7" width="2" height="14.3" fill="#41bc72"/><rect x="856" y="730.7" width="2" height="14.3" fill="#74cf54"/><rect x="874" y="730.7" width="3" height="14.3" fill="#70ce56"/><rect x="880" y="730.7" width="2" height="14.3" fill="#6acb5a"/><rect x="898" y="730.7" width="3" height="14.3" fill="#75b88b"/><rect x="900" y="730.7" width="2" height="14.3" fill="#84bd83"/><rect x="906" y="730.7" width="2" height="14.3" fill="#49c06d"/><rect x="922" y="730.7" width="2" height="14.3" fill="#69cb5a"/><rect x="964" y="730.7" width="2" height="14.3" fill="#88bf80"/><rect x="1002" y="730.7" width="2" height="14.3" fill="#59c564"/><rect x="1026" y="730.7" width="3" height="14.3" fill="#60c860"/><rect x="1122" y="730.7" width="2" height="14.3" fill="#83bd83"/><rect x="1350" y="730.7" width="3" height="14.3" fill="#8ec17d"/><rect x="1360" y="730.7" width="2" height="14.3" fill="#7fbb86"/><rect x="702" y="716.4" width="2" height="14.3" fill="#40bb72"/><rect x="732" y="716.4" width="2" height="14.3" fill="#81bd84"/><rect x="738" y="716.4" width="2" height="14.3" fill="#77b88a"/><rect x="754" y="716.4" width="2" height="14.3" fill="#74b78c"/><rect x="756" y="716.4" width="2" height="14.3" fill="#6acc5a"/><rect x="760" y="716.4" width="2" height="14.3" fill="#75b78c"/><rect x="766" y="716.4" width="2" height="14.3" fill="#7cbb87"/><rect x="784" y="716.4" width="2" height="14.3" fill="#77b88a"/><rect x="796" y="716.4" width="2" height="14.3" fill="#7cba87"/><rect x="804" y="716.4" width="2" height="14.3" fill="#7ebb86"/><rect x="810" y="716.4" width="3" height="14.3" fill="#84bd82"/><rect x="820" y="716.4" width="2" height="14.3" fill="#76b88b"/><rect x="826" y="716.4" width="3" height="14.3" fill="#7cba87"/><rect x="832" y="716.4" width="3" height="14.3" fill="#4cc16c"/><rect x="852" y="716.4" width="3" height="14.3" fill="#8abf7f"/><rect x="870" y="716.4" width="2" height="14.3" fill="#4fc269"/><rect x="886" y="716.4" width="2" height="14.3" fill="#81bc84"/><rect x="906" y="716.4" width="2" height="14.3" fill="#74b78c"/><rect x="910" y="716.4" width="2" height="14.3" fill="#41bc72"/><rect x="942" y="716.4" width="2" height="14.3" fill="#7aba88"/><rect x="952" y="716.4" width="3" height="14.3" fill="#75b78c"/><rect x="958" y="716.4" width="2" height="14.3" fill="#77d052"/><rect x="960" y="716.4" width="2" height="14.3" fill="#77b88a"/><rect x="964" y="716.4" width="2" height="14.3" fill="#7dbb87"/><rect x="1008" y="716.4" width="2" height="14.3" fill="#6acc5a"/><rect x="1050" y="716.4" width="3" height="14.3" fill="#3fbb73"/><rect x="772" y="1217.2" width="3" height="14.4" fill="#47bf6e"/><rect x="775" y="1245.8" width="3" height="14.4" fill="#85d349"/><rect x="778" y="1231.5" width="3" height="14.4" fill="#69cb5a"/><rect x="778" y="1217.2" width="3" height="14.4" fill="#3fba73"/><rect x="781" y="1260.2" width="3" height="14.4" fill="#67ca5c"/><rect x="784" y="1274.5" width="3" height="14.4" fill="#42bd71"/><rect x="784" y="1245.8" width="3" height="14.4" fill="#83d34a"/><rect x="784" y="1231.5" width="3" height="14.4" fill="#5fc860"/><rect x="784" y="1217.2" width="3" height="14.4" fill="#3eba73"/><rect x="787" y="1260.2" width="3" height="14.4" fill="#69cb5a"/><rect x="787" y="1245.8" width="3" height="14.4" fill="#90d542"/><rect x="787" y="1231.5" width="3" height="14.4" fill="#5cc662"/><rect x="787" y="1217.2" width="3" height="14.4" fill="#3db974"/><rect x="790" y="1274.5" width="3" height="14.4" fill="#44be70"/><rect x="790" y="1260.2" width="3" height="14.4" fill="#56c565"/><rect x="793" y="1274.5" width="3" height="14.4" fill="#3bb875"/><rect x="793" y="1260.2" width="3" height="14.4" fill="#65ca5d"/><rect x="796" y="1274.5" width="3" height="14.4" fill="#3db974"/><rect x="796" y="1260.2" width="3" height="14.4" fill="#66ca5c"/><rect x="796" y="1245.8" width="3" height="14.4" fill="#8cd545"/><rect x="796" y="1231.5" width="3" height="14.4" fill="#5ac663"/><rect x="799" y="1274.5" width="3" height="14.4" fill="#3bb875"/><rect x="799" y="1245.8" width="3" height="14.4" fill="#7ad150"/><rect x="799" y="1231.5" width="3" height="14.4" fill="#67ca5c"/><rect x="799" y="1217.2" width="3" height="14.4" fill="#48bf6e"/><rect x="802" y="1274.5" width="3" height="14.4" fill="#4bc06c"/><rect x="802" y="1260.2" width="3" height="14.4" fill="#68cb5b"/><rect x="802" y="1245.8" width="3" height="14.4" fill="#84d34a"/><rect x="802" y="1231.5" width="3" height="14.4" fill="#57c565"/><rect x="805" y="1260.2" width="3" height="14.4" fill="#60c860"/><rect x="805" y="1245.8" width="3" height="14.4" fill="#86d448"/><rect x="805" y="1231.5" width="3" height="14.4" fill="#56c565"/><rect x="805" y="1217.2" width="3" height="14.4" fill="#3cb975"/><rect x="808" y="1260.2" width="3" height="14.4" fill="#59c564"/><rect x="808" y="1245.8" width="3" height="14.4" fill="#7ed24e"/><rect x="808" y="1231.5" width="3" height="14.4" fill="#58c564"/><rect x="811" y="1260.2" width="3" height="14.4" fill="#60c860"/><rect x="811" y="1245.8" width="3" height="14.4" fill="#8cd545"/><rect x="811" y="1231.5" width="3" height="14.4" fill="#6acc5a"/><rect x="814" y="1274.5" width="3" height="14.4" fill="#47bf6e"/><rect x="814" y="1260.2" width="3" height="14.4" fill="#65ca5d"/><rect x="814" y="1245.8" width="3" height="14.4" fill="#81d34c"/><rect x="814" y="1231.5" width="3" height="14.4" fill="#6acc5a"/><rect x="814" y="1217.2" width="3" height="14.4" fill="#47bf6e"/><rect x="817" y="1260.2" width="3" height="14.4" fill="#69cb5a"/><rect x="817" y="1245.8" width="3" height="14.4" fill="#85d349"/><rect x="817" y="1231.5" width="3" height="14.4" fill="#63c95e"/><rect x="817" y="1217.2" width="3" height="14.4" fill="#43bd71"/><rect x="820" y="1260.2" width="3" height="14.4" fill="#6bcc59"/><rect x="820" y="1245.8" width="3" height="14.4" fill="#85d34a"/><rect x="820" y="1231.5" width="3" height="14.4" fill="#63c95e"/><rect x="823" y="1274.5" width="3" height="14.4" fill="#3eba73"/><rect x="823" y="1260.2" width="3" height="14.4" fill="#58c564"/><rect x="823" y="1245.8" width="3" height="14.4" fill="#86d349"/><rect x="823" y="1231.5" width="3" height="14.4" fill="#64c95e"/><rect x="826" y="1274.5" width="3" height="14.4" fill="#49c06d"/><rect x="826" y="1260.2" width="3" height="14.4" fill="#68cb5b"/><rect x="826" y="1245.8" width="3" height="14.4" fill="#81d34c"/><rect x="826" y="1231.5" width="3" height="14.4" fill="#59c664"/><rect x="826" y="1217.2" width="3" height="14.4" fill="#43bd71"/><rect x="829" y="1260.2" width="3" height="14.4" fill="#5fc860"/><rect x="829" y="1245.8" width="3" height="14.4" fill="#90d543"/><rect x="829" y="1231.5" width="3" height="14.4" fill="#66ca5c"/><rect x="829" y="1217.2" width="3" height="14.4" fill="#47bf6e"/><rect x="832" y="1260.2" width="3" height="14.4" fill="#5dc761"/><rect x="832" y="1245.8" width="3" height="14.4" fill="#8ed544"/><rect x="832" y="1231.5" width="3" height="14.4" fill="#63c95e"/><rect x="835" y="1274.5" width="3" height="14.4" fill="#43bd71"/><rect x="835" y="1260.2" width="3" height="14.4" fill="#5fc860"/><rect x="835" y="1245.8" width="3" height="14.4" fill="#91d642"/><rect x="835" y="1231.5" width="3" height="14.4" fill="#61c85f"/><rect x="835" y="1217.2" width="3" height="14.4" fill="#43bd71"/><rect x="838" y="1274.5" width="3" height="14.4" fill="#4cc16c"/><rect x="838" y="1260.2" width="3" height="14.4" fill="#69cb5b"/><rect x="838" y="1245.8" width="3" height="14.4" fill="#8dd544"/><rect x="838" y="1231.5" width="3" height="14.4" fill="#6ccc59"/><rect x="841" y="1260.2" width="3" height="14.4" fill="#6dcd58"/><rect x="841" y="1245.8" width="3" height="14.4" fill="#92d641"/><rect x="841" y="1231.5" width="3" height="14.4" fill="#69cb5a"/><rect x="841" y="1217.2" width="3" height="14.4" fill="#3eba73"/><rect x="844" y="1260.2" width="3" height="14.4" fill="#61c85f"/><rect x="844" y="1245.8" width="3" height="14.4" fill="#95d63f"/><rect x="844" y="1231.5" width="3" height="14.4" fill="#64ca5d"/><rect x="847" y="1274.5" width="3" height="14.4" fill="#45be70"/><rect x="847" y="1260.2" width="3" height="14.4" fill="#5bc662"/><rect x="847" y="1245.8" width="3" height="14.4" fill="#90d542"/><rect x="847" y="1231.5" width="3" height="14.4" fill="#61c95f"/><rect x="847" y="1217.2" width="3" height="14.4" fill="#42bd71"/><rect x="850" y="1260.2" width="3" height="14.4" fill="#68cb5b"/><rect x="850" y="1245.8" width="3" height="14.4" fill="#9cd83b"/><rect x="850" y="1231.5" width="3" height="14.4" fill="#64ca5d"/><rect x="853" y="1274.5" width="3" height="14.4" fill="#4dc16b"/><rect x="853" y="1260.2" width="3" height="14.4" fill="#63c95e"/><rect x="853" y="1245.8" width="3" height="14.4" fill="#9dd83a"/><rect x="853" y="1231.5" width="3" height="14.4" fill="#63c95e"/><rect x="856" y="1260.2" width="3" height="14.4" fill="#66ca5c"/><rect x="856" y="1245.8" width="3" height="14.4" fill="#93d641"/><rect x="856" y="1231.5" width="3" height="14.4" fill="#5ec761"/><rect x="856" y="1217.2" width="3" height="14.4" fill="#44be70"/><rect x="859" y="1274.5" width="3" height="14.4" fill="#3fbb73"/><rect x="859" y="1260.2" width="3" height="14.4" fill="#6bcc59"/><rect x="859" y="1245.8" width="3" height="14.4" fill="#8dd544"/><rect x="859" y="1231.5" width="3" height="14.4" fill="#5dc761"/><rect x="862" y="1274.5" width="3" height="14.4" fill="#3fba73"/><rect x="862" y="1260.2" width="3" height="14.4" fill="#63c95e"/><rect x="862" y="1245.8" width="3" height="14.4" fill="#8bd446"/><rect x="862" y="1231.5" width="3" height="14.4" fill="#6ccc59"/><rect x="865" y="1260.2" width="3" height="14.4" fill="#6ccc59"/><rect x="865" y="1245.8" width="3" height="14.4" fill="#97d73e"/><rect x="865" y="1231.5" width="3" height="14.4" fill="#66ca5c"/><rect x="865" y="1217.2" width="3" height="14.4" fill="#4fc26a"/><rect x="868" y="1274.5" width="3" height="14.4" fill="#47bf6e"/><rect x="868" y="1260.2" width="3" height="14.4" fill="#65ca5d"/><rect x="868" y="1245.8" width="3" height="14.4" fill="#a0d839"/><rect x="868" y="1231.5" width="3" height="14.4" fill="#61c85f"/><rect x="868" y="1217.2" width="3" height="14.4" fill="#50c269"/><rect x="871" y="1274.5" width="3" height="14.4" fill="#49c06d"/><rect x="871" y="1260.2" width="3" height="14.4" fill="#5ec761"/><rect x="871" y="1245.8" width="3" height="14.4" fill="#9fd839"/><rect x="871" y="1231.5" width="3" height="14.4" fill="#63c95e"/><rect x="874" y="1274.5" width="3" height="14.4" fill="#42bc71"/><rect x="874" y="1260.2" width="3" height="14.4" fill="#60c860"/><rect x="874" y="1245.8" width="3" height="14.4" fill="#9ed839"/><rect x="874" y="1231.5" width="3" height="14.4" fill="#6dcd58"/><rect x="874" y="1217.2" width="3" height="14.4" fill="#4ec26a"/><rect x="877" y="1260.2" width="3" height="14.4" fill="#6acc5a"/><rect x="877" y="1245.8" width="3" height="14.4" fill="#a0d839"/><rect x="877" y="1231.5" width="3" height="14.4" fill="#63c95e"/><rect x="877" y="1217.2" width="3" height="14.4" fill="#51c368"/><rect x="880" y="1274.5" width="3" height="14.4" fill="#47bf6e"/><rect x="880" y="1260.2" width="3" height="14.4" fill="#6bcc59"/><rect x="880" y="1245.8" width="3" height="14.4" fill="#a4d936"/><rect x="880" y="1231.5" width="3" height="14.4" fill="#67cb5b"/><rect x="880" y="1217.2" width="3" height="14.4" fill="#40bc72"/><rect x="883" y="1274.5" width="3" height="14.4" fill="#42bd71"/><rect x="883" y="1260.2" width="3" height="14.4" fill="#6dcd58"/><rect x="883" y="1245.8" width="3" height="14.4" fill="#95d63f"/><rect x="883" y="1231.5" width="3" height="14.4" fill="#6ecd57"/><rect x="883" y="1217.2" width="3" height="14.4" fill="#44be70"/><rect x="886" y="1260.2" width="3" height="14.4" fill="#6acc5a"/><rect x="886" y="1245.8" width="3" height="14.4" fill="#97d73e"/><rect x="886" y="1231.5" width="3" height="14.4" fill="#71ce56"/><rect x="886" y="1217.2" width="3" height="14.4" fill="#49c06d"/><rect x="889" y="1260.2" width="3" height="14.4" fill="#5dc761"/><rect x="889" y="1245.8" width="3" height="14.4" fill="#94d640"/><rect x="889" y="1231.5" width="3" height="14.4" fill="#72cf55"/><rect x="889" y="1217.2" width="3" height="14.4" fill="#49c06d"/><rect x="892" y="1274.5" width="3" height="14.4" fill="#41bc72"/><rect x="892" y="1260.2" width="3" height="14.4" fill="#61c85f"/><rect x="892" y="1245.8" width="3" height="14.4" fill="#97d73e"/><rect x="892" y="1231.5" width="3" height="14.4" fill="#70ce56"/><rect x="895" y="1260.2" width="3" height="14.4" fill="#5fc860"/><rect x="895" y="1245.8" width="3" height="14.4" fill="#91d642"/><rect x="895" y="1231.5" width="3" height="14.4" fill="#69cb5a"/><rect x="895" y="1217.2" width="3" height="14.4" fill="#49c06d"/><rect x="898" y="1274.5" width="3" height="14.4" fill="#48c06e"/><rect x="898" y="1260.2" width="3" height="14.4" fill="#6dcd58"/><rect x="898" y="1245.8" width="3" height="14.4" fill="#a4d936"/><rect x="898" y="1231.5" width="3" height="14.4" fill="#70ce56"/><rect x="898" y="1217.2" width="3" height="14.4" fill="#47bf6e"/><rect x="901" y="1274.5" width="3" height="14.4" fill="#4bc06c"/><rect x="901" y="1260.2" width="3" height="14.4" fill="#70ce56"/><rect x="901" y="1245.8" width="3" height="14.4" fill="#a7da34"/><rect x="901" y="1231.5" width="3" height="14.4" fill="#60c85f"/><rect x="901" y="1217.2" width="3" height="14.4" fill="#4fc26a"/><rect x="904" y="1274.5" width="3" height="14.4" fill="#4ec16a"/><rect x="904" y="1260.2" width="3" height="14.4" fill="#63c95e"/><rect x="904" y="1245.8" width="3" height="14.4" fill="#a2d937"/><rect x="904" y="1231.5" width="3" height="14.4" fill="#73cf55"/><rect x="904" y="1217.2" width="3" height="14.4" fill="#4ec26a"/><rect x="907" y="1274.5" width="3" height="14.4" fill="#44be70"/><rect x="907" y="1260.2" width="3" height="14.4" fill="#6dcd58"/><rect x="907" y="1245.8" width="3" height="14.4" fill="#8fd543"/><rect x="907" y="1231.5" width="3" height="14.4" fill="#6ccc59"/><rect x="907" y="1217.2" width="3" height="14.4" fill="#41bc72"/><rect x="910" y="1274.5" width="3" height="14.4" fill="#4fc26a"/><rect x="910" y="1260.2" width="3" height="14.4" fill="#6fce57"/><rect x="910" y="1245.8" width="3" height="14.4" fill="#a7da34"/><rect x="910" y="1231.5" width="3" height="14.4" fill="#71ce56"/><rect x="913" y="1260.2" width="3" height="14.4" fill="#67ca5c"/><rect x="913" y="1245.8" width="3" height="14.4" fill="#97d73e"/><rect x="913" y="1231.5" width="3" height="14.4" fill="#67ca5c"/><rect x="913" y="1217.2" width="3" height="14.4" fill="#44be70"/><rect x="916" y="1260.2" width="3" height="14.4" fill="#70ce56"/><rect x="916" y="1245.8" width="3" height="14.4" fill="#a1d938"/><rect x="916" y="1231.5" width="3" height="14.4" fill="#6fcd57"/><rect x="916" y="1217.2" width="3" height="14.4" fill="#54c466"/><rect x="919" y="1274.5" width="3" height="14.4" fill="#44be70"/><rect x="919" y="1260.2" width="3" height="14.4" fill="#70ce56"/><rect x="919" y="1245.8" width="3" height="14.4" fill="#95d63f"/><rect x="919" y="1231.5" width="3" height="14.4" fill="#6bcc59"/><rect x="922" y="1260.2" width="3" height="14.4" fill="#75cf54"/><rect x="922" y="1245.8" width="3" height="14.4" fill="#acdb31"/><rect x="922" y="1231.5" width="3" height="14.4" fill="#6ccc59"/><rect x="922" y="1217.2" width="3" height="14.4" fill="#45be70"/><rect x="925" y="1260.2" width="3" height="14.4" fill="#6ccc59"/><rect x="925" y="1245.8" width="3" height="14.4" fill="#a1d937"/><rect x="925" y="1231.5" width="3" height="14.4" fill="#69cb5a"/><rect x="925" y="1217.2" width="3" height="14.4" fill="#4ec26a"/><rect x="928" y="1274.5" width="3" height="14.4" fill="#4fc26a"/><rect x="928" y="1260.2" width="3" height="14.4" fill="#64c95d"/><rect x="928" y="1245.8" width="3" height="14.4" fill="#a6da34"/><rect x="928" y="1231.5" width="3" height="14.4" fill="#74cf54"/><rect x="928" y="1217.2" width="3" height="14.4" fill="#52c368"/><rect x="931" y="1274.5" width="3" height="14.4" fill="#4dc16b"/><rect x="931" y="1260.2" width="3" height="14.4" fill="#72cf55"/><rect x="931" y="1245.8" width="3" height="14.4" fill="#96d73f"/><rect x="931" y="1231.5" width="3" height="14.4" fill="#65ca5d"/><rect x="931" y="1217.2" width="3" height="14.4" fill="#42bd71"/><rect x="934" y="1274.5" width="3" height="14.4" fill="#53c367"/><rect x="934" y="1260.2" width="3" height="14.4" fill="#64ca5d"/><rect x="934" y="1245.8" width="3" height="14.4" fill="#addb30"/><rect x="934" y="1231.5" width="3" height="14.4" fill="#66ca5c"/><rect x="934" y="1217.2" width="3" height="14.4" fill="#46bf6f"/><rect x="937" y="1260.2" width="3" height="14.4" fill="#71ce56"/><rect x="937" y="1245.8" width="3" height="14.4" fill="#a1d937"/><rect x="937" y="1231.5" width="3" height="14.4" fill="#64c95d"/><rect x="940" y="1274.5" width="3" height="14.4" fill="#43be70"/><rect x="940" y="1260.2" width="3" height="14.4" fill="#71ce56"/><rect x="940" y="1245.8" width="3" height="14.4" fill="#97d73e"/><rect x="940" y="1231.5" width="3" height="14.4" fill="#6acb5a"/><rect x="943" y="1274.5" width="3" height="14.4" fill="#4cc16b"/><rect x="943" y="1260.2" width="3" height="14.4" fill="#74cf54"/><rect x="943" y="1245.8" width="3" height="14.4" fill="#9fd839"/><rect x="943" y="1231.5" width="3" height="14.4" fill="#66ca5c"/><rect x="943" y="1217.2" width="3" height="14.4" fill="#4fc269"/><rect x="946" y="1260.2" width="3" height="14.4" fill="#75cf54"/><rect x="946" y="1245.8" width="3" height="14.4" fill="#9cd83b"/><rect x="946" y="1231.5" width="3" height="14.4" fill="#63c95e"/><rect x="946" y="1217.2" width="3" height="14.4" fill="#47bf6e"/><rect x="949" y="1274.5" width="3" height="14.4" fill="#46bf6f"/><rect x="949" y="1260.2" width="3" height="14.4" fill="#6fcd57"/><rect x="949" y="1245.8" width="3" height="14.4" fill="#abda32"/><rect x="949" y="1231.5" width="3" height="14.4" fill="#65ca5d"/><rect x="949" y="1217.2" width="3" height="14.4" fill="#4ac06c"/><rect x="952" y="1260.2" width="3" height="14.4" fill="#6fce57"/><rect x="952" y="1245.8" width="3" height="14.4" fill="#a0d838"/><rect x="952" y="1231.5" width="3" height="14.4" fill="#6ecd57"/><rect x="955" y="1260.2" width="3" height="14.4" fill="#75d053"/><rect x="955" y="1245.8" width="3" height="14.4" fill="#afdb2f"/><rect x="955" y="1231.5" width="3" height="14.4" fill="#6acc5a"/><rect x="958" y="1274.5" width="3" height="14.4" fill="#56c466"/><rect x="958" y="1260.2" width="3" height="14.4" fill="#64c95d"/><rect x="958" y="1245.8" width="3" height="14.4" fill="#b2dc2d"/><rect x="958" y="1231.5" width="3" height="14.4" fill="#6acb5a"/><rect x="958" y="1217.2" width="3" height="14.4" fill="#53c367"/><rect x="961" y="1274.5" width="3" height="14.4" fill="#56c565"/><rect x="961" y="1260.2" width="3" height="14.4" fill="#79d151"/><rect x="961" y="1245.8" width="3" height="14.4" fill="#acdb31"/><rect x="961" y="1231.5" width="3" height="14.4" fill="#69cb5b"/><rect x="964" y="1274.5" width="3" height="14.4" fill="#4dc16b"/><rect x="964" y="1260.2" width="3" height="14.4" fill="#69cb5a"/><rect x="964" y="1245.8" width="3" height="14.4" fill="#a8da33"/><rect x="964" y="1231.5" width="3" height="14.4" fill="#6ecd57"/><rect x="964" y="1217.2" width="3" height="14.4" fill="#56c465"/><rect x="967" y="1260.2" width="3" height="14.4" fill="#78d052"/><rect x="967" y="1245.8" width="3" height="14.4" fill="#9dd83a"/><rect x="967" y="1231.5" width="3" height="14.4" fill="#6bcc59"/><rect x="967" y="1217.2" width="3" height="14.4" fill="#55c466"/><rect x="970" y="1274.5" width="3" height="14.4" fill="#58c564"/><rect x="970" y="1260.2" width="3" height="14.4" fill="#6acb5a"/><rect x="970" y="1245.8" width="3" height="14.4" fill="#aedb2f"/><rect x="970" y="1231.5" width="3" height="14.4" fill="#6ccc58"/><rect x="970" y="1217.2" width="3" height="14.4" fill="#50c269"/><rect x="973" y="1274.5" width="3" height="14.4" fill="#4bc06c"/><rect x="973" y="1260.2" width="3" height="14.4" fill="#6dcd58"/><rect x="973" y="1245.8" width="3" height="14.4" fill="#b5dc2b"/><rect x="973" y="1231.5" width="3" height="14.4" fill="#77d052"/><rect x="973" y="1217.2" width="3" height="14.4" fill="#59c564"/><rect x="976" y="1274.5" width="3" height="14.4" fill="#4ac06c"/><rect x="976" y="1260.2" width="3" height="14.4" fill="#75d053"/><rect x="976" y="1245.8" width="3" height="14.4" fill="#b5dd2b"/><rect x="976" y="1231.5" width="3" height="14.4" fill="#6dcd58"/><rect x="979" y="1274.5" width="3" height="14.4" fill="#49c06d"/><rect x="979" y="1260.2" width="3" height="14.4" fill="#73cf55"/><rect x="979" y="1245.8" width="3" height="14.4" fill="#a5d935"/><rect x="979" y="1231.5" width="3" height="14.4" fill="#66ca5c"/><rect x="982" y="1260.2" width="3" height="14.4" fill="#74cf54"/><rect x="982" y="1245.8" width="3" height="14.4" fill="#9cd83b"/><rect x="982" y="1231.5" width="3" height="14.4" fill="#68cb5b"/><rect x="982" y="1217.2" width="3" height="14.4" fill="#59c564"/><rect x="985" y="1260.2" width="3" height="14.4" fill="#68cb5b"/><rect x="985" y="1245.8" width="3" height="14.4" fill="#abdb31"/><rect x="985" y="1231.5" width="3" height="14.4" fill="#70ce57"/><rect x="988" y="1260.2" width="3" height="14.4" fill="#67cb5c"/><rect x="988" y="1245.8" width="3" height="14.4" fill="#a7da34"/><rect x="988" y="1231.5" width="3" height="14.4" fill="#75d053"/><rect x="988" y="1217.2" width="3" height="14.4" fill="#55c466"/><rect x="991" y="1260.2" width="3" height="14.4" fill="#6dcd58"/><rect x="991" y="1245.8" width="3" height="14.4" fill="#a1d938"/><rect x="991" y="1231.5" width="3" height="14.4" fill="#67cb5b"/><rect x="991" y="1217.2" width="3" height="14.4" fill="#57c565"/><rect x="994" y="1260.2" width="3" height="14.4" fill="#67cb5b"/><rect x="994" y="1245.8" width="3" height="14.4" fill="#b8dd29"/><rect x="994" y="1231.5" width="3" height="14.4" fill="#79d151"/><rect x="997" y="1274.5" width="3" height="14.4" fill="#54c467"/><rect x="997" y="1260.2" width="3" height="14.4" fill="#70ce57"/><rect x="997" y="1245.8" width="3" height="14.4" fill="#a3d937"/><rect x="997" y="1231.5" width="3" height="14.4" fill="#79d151"/><rect x="1000" y="1274.5" width="3" height="14.4" fill="#4dc16a"/><rect x="1000" y="1260.2" width="3" height="14.4" fill="#74cf54"/><rect x="1000" y="1245.8" width="3" height="14.4" fill="#b8dd29"/><rect x="1000" y="1231.5" width="3" height="14.4" fill="#6fce57"/><rect x="1000" y="1217.2" width="3" height="14.4" fill="#4cc16b"/><rect x="1003" y="1260.2" width="3" height="14.4" fill="#75d053"/><rect x="1003" y="1245.8" width="3" height="14.4" fill="#9fd839"/><rect x="1003" y="1231.5" width="3" height="14.4" fill="#6fcd57"/><rect x="1006" y="1274.5" width="3" height="14.4" fill="#4dc16b"/><rect x="1006" y="1260.2" width="3" height="14.4" fill="#70ce56"/><rect x="1006" y="1245.8" width="3" height="14.4" fill="#a6da35"/><rect x="1006" y="1231.5" width="3" height="14.4" fill="#70ce56"/><rect x="1006" y="1217.2" width="3" height="14.4" fill="#59c664"/><rect x="1009" y="1260.2" width="3" height="14.4" fill="#74cf54"/><rect x="1009" y="1245.8" width="3" height="14.4" fill="#badd28"/><rect x="1009" y="1231.5" width="3" height="14.4" fill="#6ecd57"/><rect x="1012" y="1274.5" width="3" height="14.4" fill="#48c06d"/><rect x="1012" y="1260.2" width="3" height="14.4" fill="#73cf55"/><rect x="1012" y="1245.8" width="3" height="14.4" fill="#a4d936"/><rect x="1012" y="1231.5" width="3" height="14.4" fill="#71ce56"/><rect x="1012" y="1217.2" width="3" height="14.4" fill="#52c368"/><rect x="1015" y="1260.2" width="3" height="14.4" fill="#7dd24e"/><rect x="1015" y="1245.8" width="3" height="14.4" fill="#b6dd2b"/><rect x="1015" y="1231.5" width="3" height="14.4" fill="#79d151"/><rect x="1018" y="1260.2" width="3" height="14.4" fill="#6acb5a"/><rect x="1018" y="1245.8" width="3" height="14.4" fill="#b1dc2d"/><rect x="1018" y="1231.5" width="3" height="14.4" fill="#7cd24f"/><rect x="1018" y="1217.2" width="3" height="14.4" fill="#52c368"/><rect x="1021" y="1260.2" width="3" height="14.4" fill="#6fce57"/><rect x="1021" y="1245.8" width="3" height="14.4" fill="#addb30"/><rect x="1021" y="1231.5" width="3" height="14.4" fill="#74cf54"/><rect x="1021" y="1217.2" width="3" height="14.4" fill="#4ac06c"/><rect x="1024" y="1274.5" width="3" height="14.4" fill="#56c565"/><rect x="1024" y="1260.2" width="3" height="14.4" fill="#72cf55"/><rect x="1024" y="1245.8" width="3" height="14.4" fill="#b9dd28"/><rect x="1024" y="1231.5" width="3" height="14.4" fill="#77d052"/><rect x="1024" y="1217.2" width="3" height="14.4" fill="#54c466"/><rect x="1027" y="1260.2" width="3" height="14.4" fill="#75d053"/><rect x="1027" y="1245.8" width="3" height="14.4" fill="#a8da33"/><rect x="1027" y="1231.5" width="3" height="14.4" fill="#6fcd57"/><rect x="1030" y="1274.5" width="3" height="14.4" fill="#4ac06d"/><rect x="1030" y="1260.2" width="3" height="14.4" fill="#72ce55"/><rect x="1030" y="1245.8" width="3" height="14.4" fill="#a6da35"/><rect x="1030" y="1231.5" width="3" height="14.4" fill="#6dcd58"/><rect x="1030" y="1217.2" width="3" height="14.4" fill="#5ac663"/><rect x="1033" y="1274.5" width="3" height="14.4" fill="#4ac06d"/><rect x="1033" y="1260.2" width="3" height="14.4" fill="#7ad151"/><rect x="1033" y="1245.8" width="3" height="14.4" fill="#abdb31"/><rect x="1033" y="1231.5" width="3" height="14.4" fill="#7ed24e"/><rect x="1033" y="1217.2" width="3" height="14.4" fill="#49c06d"/><rect x="1036" y="1274.5" width="3" height="14.4" fill="#5bc663"/><rect x="1036" y="1260.2" width="3" height="14.4" fill="#71ce56"/><rect x="1036" y="1245.8" width="3" height="14.4" fill="#b2dc2d"/><rect x="1036" y="1231.5" width="3" height="14.4" fill="#77d052"/><rect x="1036" y="1217.2" width="3" height="14.4" fill="#59c664"/><rect x="1039" y="1274.5" width="3" height="14.4" fill="#5dc762"/><rect x="1039" y="1260.2" width="3" height="14.4" fill="#69cb5b"/><rect x="1039" y="1245.8" width="3" height="14.4" fill="#afdb2f"/><rect x="1039" y="1231.5" width="3" height="14.4" fill="#7ad150"/><rect x="1042" y="1274.5" width="3" height="14.4" fill="#54c467"/><rect x="1042" y="1260.2" width="3" height="14.4" fill="#6dcd58"/><rect x="1042" y="1245.8" width="3" height="14.4" fill="#a4d936"/><rect x="1042" y="1231.5" width="3" height="14.4" fill="#76d053"/><rect x="1045" y="1260.2" width="3" height="14.4" fill="#7bd150"/><rect x="1045" y="1245.8" width="3" height="14.4" fill="#afdb2f"/><rect x="1045" y="1231.5" width="3" height="14.4" fill="#6ccc59"/><rect x="1048" y="1274.5" width="3" height="14.4" fill="#54c467"/><rect x="1048" y="1260.2" width="3" height="14.4" fill="#7cd14f"/><rect x="1048" y="1245.8" width="3" height="14.4" fill="#b2dc2d"/><rect x="1048" y="1231.5" width="3" height="14.4" fill="#76d053"/><rect x="1048" y="1217.2" width="3" height="14.4" fill="#55c466"/><rect x="1051" y="1274.5" width="3" height="14.4" fill="#49c06d"/><rect x="1051" y="1260.2" width="3" height="14.4" fill="#78d151"/><rect x="1051" y="1245.8" width="3" height="14.4" fill="#b1dc2e"/><rect x="1051" y="1231.5" width="3" height="14.4" fill="#7ed24e"/><rect x="1051" y="1217.2" width="3" height="14.4" fill="#56c465"/><rect x="1054" y="1274.5" width="3" height="14.4" fill="#4fc26a"/><rect x="1054" y="1260.2" width="3" height="14.4" fill="#68cb5b"/><rect x="1054" y="1245.8" width="3" height="14.4" fill="#b0db2e"/><rect x="1054" y="1231.5" width="3" height="14.4" fill="#74cf54"/><rect x="1057" y="1274.5" width="3" height="14.4" fill="#4fc26a"/><rect x="1057" y="1260.2" width="3" height="14.4" fill="#70ce56"/><rect x="1057" y="1245.8" width="3" height="14.4" fill="#a6da35"/><rect x="1057" y="1231.5" width="3" height="14.4" fill="#77d052"/><rect x="1060" y="1274.5" width="3" height="14.4" fill="#5cc762"/><rect x="1060" y="1260.2" width="3" height="14.4" fill="#7bd150"/><rect x="1060" y="1245.8" width="3" height="14.4" fill="#b6dd2b"/><rect x="1060" y="1231.5" width="3" height="14.4" fill="#7dd24f"/><rect x="1060" y="1217.2" width="3" height="14.4" fill="#59c564"/><rect x="1063" y="1274.5" width="3" height="14.4" fill="#4fc26a"/><rect x="1063" y="1260.2" width="3" height="14.4" fill="#6dcd58"/><rect x="1063" y="1245.8" width="3" height="14.4" fill="#b5dc2b"/><rect x="1063" y="1231.5" width="3" height="14.4" fill="#73cf55"/><rect x="1063" y="1217.2" width="3" height="14.4" fill="#5dc762"/><rect x="1066" y="1274.5" width="3" height="14.4" fill="#49c06d"/><rect x="1066" y="1260.2" width="3" height="14.4" fill="#7dd24e"/><rect x="1066" y="1245.8" width="3" height="14.4" fill="#badd28"/><rect x="1066" y="1231.5" width="3" height="14.4" fill="#70ce56"/><rect x="1066" y="1217.2" width="3" height="14.4" fill="#5bc663"/><rect x="1069" y="1274.5" width="3" height="14.4" fill="#49c06d"/><rect x="1069" y="1260.2" width="3" height="14.4" fill="#71ce56"/><rect x="1069" y="1245.8" width="3" height="14.4" fill="#bbde28"/><rect x="1069" y="1231.5" width="3" height="14.4" fill="#76d053"/><rect x="1069" y="1217.2" width="3" height="14.4" fill="#59c664"/><rect x="1072" y="1260.2" width="3" height="14.4" fill="#71ce56"/><rect x="1072" y="1245.8" width="3" height="14.4" fill="#b5dc2b"/><rect x="1072" y="1231.5" width="3" height="14.4" fill="#75cf54"/><rect x="1075" y="1274.5" width="3" height="14.4" fill="#4ac06c"/><rect x="1075" y="1260.2" width="3" height="14.4" fill="#73cf55"/><rect x="1075" y="1245.8" width="3" height="14.4" fill="#a4d936"/><rect x="1075" y="1231.5" width="3" height="14.4" fill="#7cd24f"/><rect x="1078" y="1260.2" width="3" height="14.4" fill="#7cd24f"/><rect x="1078" y="1245.8" width="3" height="14.4" fill="#b2dc2d"/><rect x="1078" y="1231.5" width="3" height="14.4" fill="#7cd24f"/><rect x="1078" y="1217.2" width="3" height="14.4" fill="#4ec26a"/><rect x="1081" y="1274.5" width="3" height="14.4" fill="#4bc06c"/><rect x="1081" y="1260.2" width="3" height="14.4" fill="#76d053"/><rect x="1081" y="1245.8" width="3" height="14.4" fill="#b8dd29"/><rect x="1081" y="1231.5" width="3" height="14.4" fill="#68cb5b"/><rect x="1081" y="1217.2" width="3" height="14.4" fill="#5dc762"/><rect x="1084" y="1274.5" width="3" height="14.4" fill="#58c565"/><rect x="1084" y="1260.2" width="3" height="14.4" fill="#73cf55"/><rect x="1084" y="1245.8" width="3" height="14.4" fill="#acdb31"/><rect x="1084" y="1231.5" width="3" height="14.4" fill="#73cf55"/><rect x="1084" y="1217.2" width="3" height="14.4" fill="#4ec16a"/><rect x="1087" y="1260.2" width="3" height="14.4" fill="#6fcd57"/><rect x="1087" y="1245.8" width="3" height="14.4" fill="#b5dc2b"/><rect x="1087" y="1231.5" width="3" height="14.4" fill="#6bcc59"/><rect x="1090" y="1260.2" width="3" height="14.4" fill="#6ccc59"/><rect x="1090" y="1245.8" width="3" height="14.4" fill="#b5dc2b"/><rect x="1090" y="1231.5" width="3" height="14.4" fill="#73cf55"/><rect x="1090" y="1217.2" width="3" height="14.4" fill="#49c06d"/><rect x="1093" y="1274.5" width="3" height="14.4" fill="#49c06d"/><rect x="1093" y="1260.2" width="3" height="14.4" fill="#68cb5b"/><rect x="1093" y="1245.8" width="3" height="14.4" fill="#acdb31"/><rect x="1093" y="1231.5" width="3" height="14.4" fill="#79d151"/><rect x="1096" y="1260.2" width="3" height="14.4" fill="#6dcd58"/><rect x="1096" y="1245.8" width="3" height="14.4" fill="#b8dd29"/><rect x="1096" y="1231.5" width="3" height="14.4" fill="#79d151"/><rect x="1096" y="1217.2" width="3" height="14.4" fill="#50c269"/><rect x="1099" y="1260.2" width="3" height="14.4" fill="#72ce55"/><rect x="1099" y="1245.8" width="3" height="14.4" fill="#a8da33"/><rect x="1099" y="1231.5" width="3" height="14.4" fill="#71ce56"/><rect x="1102" y="1260.2" width="3" height="14.4" fill="#79d151"/><rect x="1102" y="1245.8" width="3" height="14.4" fill="#b4dc2c"/><rect x="1102" y="1231.5" width="3" height="14.4" fill="#6bcc59"/><rect x="1102" y="1217.2" width="3" height="14.4" fill="#48bf6e"/><rect x="1105" y="1260.2" width="3" height="14.4" fill="#73cf54"/><rect x="1105" y="1245.8" width="3" height="14.4" fill="#a2d937"/><rect x="1105" y="1231.5" width="3" height="14.4" fill="#6bcc59"/><rect x="1108" y="1260.2" width="3" height="14.4" fill="#78d152"/><rect x="1108" y="1245.8" width="3" height="14.4" fill="#b8dd29"/><rect x="1108" y="1231.5" width="3" height="14.4" fill="#6ecd57"/><rect x="1108" y="1217.2" width="3" height="14.4" fill="#55c466"/><rect x="1111" y="1260.2" width="3" height="14.4" fill="#6bcc59"/><rect x="1111" y="1245.8" width="3" height="14.4" fill="#b6dd2b"/><rect x="1111" y="1231.5" width="3" height="14.4" fill="#76d052"/><rect x="1114" y="1274.5" width="3" height="14.4" fill="#59c664"/><rect x="1114" y="1260.2" width="3" height="14.4" fill="#75d053"/><rect x="1114" y="1245.8" width="3" height="14.4" fill="#b4dc2b"/><rect x="1114" y="1231.5" width="3" height="14.4" fill="#69cb5a"/><rect x="1117" y="1274.5" width="3" height="14.4" fill="#4ac06c"/><rect x="1117" y="1260.2" width="3" height="14.4" fill="#6fcd57"/><rect x="1117" y="1245.8" width="3" height="14.4" fill="#a9da32"/><rect x="1117" y="1231.5" width="3" height="14.4" fill="#6ecd57"/><rect x="1117" y="1217.2" width="3" height="14.4" fill="#58c564"/><rect x="1120" y="1274.5" width="3" height="14.4" fill="#59c564"/><rect x="1120" y="1260.2" width="3" height="14.4" fill="#75d053"/><rect x="1120" y="1245.8" width="3" height="14.4" fill="#a6da34"/><rect x="1120" y="1231.5" width="3" height="14.4" fill="#76d053"/><rect x="1120" y="1217.2" width="3" height="14.4" fill="#58c564"/><rect x="1123" y="1260.2" width="3" height="14.4" fill="#67cb5c"/><rect x="1123" y="1245.8" width="3" height="14.4" fill="#addb30"/><rect x="1123" y="1231.5" width="3" height="14.4" fill="#6ccc59"/><rect x="1123" y="1217.2" width="3" height="14.4" fill="#48bf6e"/><rect x="1126" y="1260.2" width="3" height="14.4" fill="#68cb5b"/><rect x="1126" y="1245.8" width="3" height="14.4" fill="#b2dc2d"/><rect x="1126" y="1231.5" width="3" height="14.4" fill="#68cb5b"/><rect x="1129" y="1260.2" width="3" height="14.4" fill="#71ce56"/><rect x="1129" y="1245.8" width="3" height="14.4" fill="#b1dc2e"/><rect x="1129" y="1231.5" width="3" height="14.4" fill="#73cf55"/><rect x="1129" y="1217.2" width="3" height="14.4" fill="#4cc16b"/><rect x="1132" y="1274.5" width="3" height="14.4" fill="#58c564"/><rect x="1132" y="1260.2" width="3" height="14.4" fill="#76d053"/><rect x="1132" y="1245.8" width="3" height="14.4" fill="#b2dc2d"/><rect x="1132" y="1231.5" width="3" height="14.4" fill="#76d053"/><rect x="1135" y="1274.5" width="3" height="14.4" fill="#58c565"/><rect x="1135" y="1260.2" width="3" height="14.4" fill="#6fcd57"/><rect x="1135" y="1245.8" width="3" height="14.4" fill="#9dd83a"/><rect x="1135" y="1231.5" width="3" height="14.4" fill="#78d052"/><rect x="1135" y="1217.2" width="3" height="14.4" fill="#56c565"/><rect x="1138" y="1260.2" width="3" height="14.4" fill="#74cf54"/><rect x="1138" y="1245.8" width="3" height="14.4" fill="#a3d936"/><rect x="1138" y="1231.5" width="3" height="14.4" fill="#70ce57"/><rect x="1138" y="1217.2" width="3" height="14.4" fill="#52c368"/><rect x="1141" y="1260.2" width="3" height="14.4" fill="#6dcd58"/><rect x="1141" y="1245.8" width="3" height="14.4" fill="#afdb2f"/><rect x="1141" y="1231.5" width="3" height="14.4" fill="#7ad151"/><rect x="1141" y="1217.2" width="3" height="14.4" fill="#52c368"/><rect x="1144" y="1260.2" width="3" height="14.4" fill="#76d053"/><rect x="1144" y="1245.8" width="3" height="14.4" fill="#b0dc2e"/><rect x="1144" y="1231.5" width="3" height="14.4" fill="#74cf54"/><rect x="1147" y="1274.5" width="3" height="14.4" fill="#53c467"/><rect x="1147" y="1260.2" width="3" height="14.4" fill="#70ce56"/><rect x="1147" y="1245.8" width="3" height="14.4" fill="#addb30"/><rect x="1147" y="1231.5" width="3" height="14.4" fill="#65ca5d"/><rect x="1147" y="1217.2" width="3" height="14.4" fill="#59c664"/><rect x="1150" y="1260.2" width="3" height="14.4" fill="#6ccc58"/><rect x="1150" y="1245.8" width="3" height="14.4" fill="#aedb2f"/><rect x="1150" y="1231.5" width="3" height="14.4" fill="#65ca5d"/><rect x="1150" y="1217.2" width="3" height="14.4" fill="#4fc26a"/><rect x="1153" y="1274.5" width="3" height="14.4" fill="#48c06e"/><rect x="1153" y="1260.2" width="3" height="14.4" fill="#78d152"/><rect x="1153" y="1245.8" width="3" height="14.4" fill="#9ed83a"/><rect x="1153" y="1231.5" width="3" height="14.4" fill="#64ca5d"/><rect x="1156" y="1274.5" width="3" height="14.4" fill="#4dc16a"/><rect x="1156" y="1260.2" width="3" height="14.4" fill="#65ca5d"/><rect x="1156" y="1245.8" width="3" height="14.4" fill="#acdb31"/><rect x="1156" y="1231.5" width="3" height="14.4" fill="#69cb5a"/><rect x="1159" y="1274.5" width="3" height="14.4" fill="#50c269"/><rect x="1159" y="1260.2" width="3" height="14.4" fill="#65ca5d"/><rect x="1159" y="1245.8" width="3" height="14.4" fill="#9fd839"/><rect x="1159" y="1231.5" width="3" height="14.4" fill="#6bcc59"/><rect x="1159" y="1217.2" width="3" height="14.4" fill="#53c367"/><rect x="1162" y="1274.5" width="3" height="14.4" fill="#51c369"/><rect x="1162" y="1260.2" width="3" height="14.4" fill="#6fcd57"/><rect x="1162" y="1245.8" width="3" height="14.4" fill="#a4d936"/><rect x="1162" y="1231.5" width="3" height="14.4" fill="#76d053"/><rect x="1165" y="1274.5" width="3" height="14.4" fill="#51c369"/><rect x="1165" y="1260.2" width="3" height="14.4" fill="#75cf54"/><rect x="1165" y="1245.8" width="3" height="14.4" fill="#addb30"/><rect x="1165" y="1231.5" width="3" height="14.4" fill="#6bcc59"/><rect x="1165" y="1217.2" width="3" height="14.4" fill="#47bf6e"/><rect x="1168" y="1260.2" width="3" height="14.4" fill="#6acc5a"/><rect x="1168" y="1245.8" width="3" height="14.4" fill="#a9da32"/><rect x="1168" y="1231.5" width="3" height="14.4" fill="#67cb5b"/><rect x="1168" y="1217.2" width="3" height="14.4" fill="#48bf6e"/><rect x="1171" y="1260.2" width="3" height="14.4" fill="#76d053"/><rect x="1171" y="1245.8" width="3" height="14.4" fill="#a2d937"/><rect x="1171" y="1231.5" width="3" height="14.4" fill="#74cf54"/><rect x="1171" y="1217.2" width="3" height="14.4" fill="#58c565"/><rect x="1174" y="1274.5" width="3" height="14.4" fill="#50c269"/><rect x="1174" y="1260.2" width="3" height="14.4" fill="#72ce55"/><rect x="1174" y="1245.8" width="3" height="14.4" fill="#abdb31"/><rect x="1174" y="1231.5" width="3" height="14.4" fill="#66ca5c"/><rect x="1177" y="1274.5" width="3" height="14.4" fill="#44be70"/><rect x="1177" y="1260.2" width="3" height="14.4" fill="#6bcc59"/><rect x="1177" y="1245.8" width="3" height="14.4" fill="#a9da32"/><rect x="1177" y="1231.5" width="3" height="14.4" fill="#6ecd58"/><rect x="1177" y="1217.2" width="3" height="14.4" fill="#4ac06d"/><rect x="1180" y="1260.2" width="3" height="14.4" fill="#74cf54"/><rect x="1180" y="1245.8" width="3" height="14.4" fill="#aada32"/><rect x="1180" y="1231.5" width="3" height="14.4" fill="#64ca5d"/><rect x="1183" y="1274.5" width="3" height="14.4" fill="#51c369"/><rect x="1183" y="1260.2" width="3" height="14.4" fill="#75d053"/><rect x="1183" y="1245.8" width="3" height="14.4" fill="#95d63f"/><rect x="1183" y="1231.5" width="3" height="14.4" fill="#73cf54"/><rect x="1183" y="1217.2" width="3" height="14.4" fill="#46bf6f"/><rect x="1186" y="1260.2" width="3" height="14.4" fill="#74cf54"/><rect x="1186" y="1245.8" width="3" height="14.4" fill="#9ad73c"/><rect x="1186" y="1231.5" width="3" height="14.4" fill="#62c95f"/><rect x="1189" y="1274.5" width="3" height="14.4" fill="#45bf6f"/><rect x="1189" y="1260.2" width="3" height="14.4" fill="#6ecd58"/><rect x="1189" y="1245.8" width="3" height="14.4" fill="#a9da32"/><rect x="1189" y="1231.5" width="3" height="14.4" fill="#66ca5c"/><rect x="1189" y="1217.2" width="3" height="14.4" fill="#55c466"/><rect x="1192" y="1274.5" width="3" height="14.4" fill="#53c367"/><rect x="1192" y="1260.2" width="3" height="14.4" fill="#67ca5c"/><rect x="1192" y="1245.8" width="3" height="14.4" fill="#98d73e"/><rect x="1192" y="1231.5" width="3" height="14.4" fill="#68cb5b"/><rect x="1192" y="1217.2" width="3" height="14.4" fill="#43bd71"/><rect x="1195" y="1274.5" width="3" height="14.4" fill="#4dc16b"/><rect x="1195" y="1260.2" width="3" height="14.4" fill="#65ca5d"/><rect x="1195" y="1245.8" width="3" height="14.4" fill="#94d640"/><rect x="1195" y="1231.5" width="3" height="14.4" fill="#62c95f"/><rect x="1198" y="1260.2" width="3" height="14.4" fill="#61c95f"/><rect x="1198" y="1245.8" width="3" height="14.4" fill="#94d640"/><rect x="1198" y="1231.5" width="3" height="14.4" fill="#6dcd58"/><rect x="1198" y="1217.2" width="3" height="14.4" fill="#4cc16c"/><rect x="1201" y="1260.2" width="3" height="14.4" fill="#63c95e"/><rect x="1201" y="1245.8" width="3" height="14.4" fill="#a4d936"/><rect x="1201" y="1231.5" width="3" height="14.4" fill="#74cf54"/><rect x="1204" y="1274.5" width="3" height="14.4" fill="#53c367"/><rect x="1204" y="1260.2" width="3" height="14.4" fill="#74cf54"/><rect x="1204" y="1245.8" width="3" height="14.4" fill="#91d642"/><rect x="1204" y="1231.5" width="3" height="14.4" fill="#66ca5c"/><rect x="1207" y="1260.2" width="3" height="14.4" fill="#70ce56"/><rect x="1207" y="1245.8" width="3" height="14.4" fill="#9ad73c"/><rect x="1207" y="1231.5" width="3" height="14.4" fill="#6acb5a"/><rect x="1207" y="1217.2" width="3" height="14.4" fill="#4dc16b"/><rect x="1210" y="1260.2" width="3" height="14.4" fill="#65ca5d"/><rect x="1210" y="1245.8" width="3" height="14.4" fill="#96d73f"/><rect x="1210" y="1231.5" width="3" height="14.4" fill="#74cf54"/><rect x="1210" y="1217.2" width="3" height="14.4" fill="#4dc16b"/><rect x="1213" y="1274.5" width="3" height="14.4" fill="#49c06d"/><rect x="1213" y="1260.2" width="3" height="14.4" fill="#62c95f"/><rect x="1213" y="1245.8" width="3" height="14.4" fill="#94d640"/><rect x="1213" y="1231.5" width="3" height="14.4" fill="#65ca5c"/><rect x="1213" y="1217.2" width="3" height="14.4" fill="#49c06d"/><rect x="1216" y="1260.2" width="3" height="14.4" fill="#63c95e"/><rect x="1216" y="1245.8" width="3" height="14.4" fill="#98d73d"/><rect x="1216" y="1231.5" width="3" height="14.4" fill="#61c85f"/><rect x="1216" y="1217.2" width="3" height="14.4" fill="#51c368"/><rect x="1219" y="1260.2" width="3" height="14.4" fill="#70ce56"/><rect x="1219" y="1245.8" width="3" height="14.4" fill="#8dd544"/><rect x="1219" y="1231.5" width="3" height="14.4" fill="#6ecd58"/><rect x="1219" y="1217.2" width="3" height="14.4" fill="#43be70"/><rect x="1222" y="1274.5" width="3" height="14.4" fill="#43bd71"/><rect x="1222" y="1260.2" width="3" height="14.4" fill="#60c85f"/><rect x="1222" y="1245.8" width="3" height="14.4" fill="#96d73f"/><rect x="1222" y="1231.5" width="3" height="14.4" fill="#6dcd58"/><rect x="1225" y="1260.2" width="3" height="14.4" fill="#5fc860"/><rect x="1225" y="1245.8" width="3" height="14.4" fill="#91d642"/><rect x="1225" y="1231.5" width="3" height="14.4" fill="#67cb5b"/><rect x="1225" y="1217.2" width="3" height="14.4" fill="#51c368"/><rect x="1228" y="1274.5" width="3" height="14.4" fill="#50c269"/><rect x="1228" y="1260.2" width="3" height="14.4" fill="#6fcd57"/><rect x="1228" y="1245.8" width="3" height="14.4" fill="#8ed544"/><rect x="1228" y="1231.5" width="3" height="14.4" fill="#5fc860"/><rect x="1231" y="1274.5" width="3" height="14.4" fill="#50c269"/><rect x="1231" y="1260.2" width="3" height="14.4" fill="#66ca5c"/><rect x="1231" y="1245.8" width="3" height="14.4" fill="#9cd83b"/><rect x="1231" y="1231.5" width="3" height="14.4" fill="#6acc5a"/><rect x="1231" y="1217.2" width="3" height="14.4" fill="#43bd71"/><rect x="1234" y="1274.5" width="3" height="14.4" fill="#48bf6e"/><rect x="1234" y="1260.2" width="3" height="14.4" fill="#5dc761"/><rect x="1234" y="1245.8" width="3" height="14.4" fill="#96d73e"/><rect x="1234" y="1231.5" width="3" height="14.4" fill="#6bcc59"/><rect x="1237" y="1274.5" width="3" height="14.4" fill="#43be70"/><rect x="1237" y="1260.2" width="3" height="14.4" fill="#63c95e"/><rect x="1237" y="1245.8" width="3" height="14.4" fill="#a2d937"/><rect x="1237" y="1231.5" width="3" height="14.4" fill="#62c95e"/><rect x="1237" y="1217.2" width="3" height="14.4" fill="#45bf6f"/><rect x="1240" y="1260.2" width="3" height="14.4" fill="#6dcd58"/><rect x="1240" y="1245.8" width="3" height="14.4" fill="#92d641"/><rect x="1240" y="1231.5" width="3" height="14.4" fill="#5ec761"/><rect x="1243" y="1274.5" width="3" height="14.4" fill="#50c269"/><rect x="1243" y="1260.2" width="3" height="14.4" fill="#6ccc59"/><rect x="1243" y="1245.8" width="3" height="14.4" fill="#8ed544"/><rect x="1243" y="1231.5" width="3" height="14.4" fill="#5fc860"/><rect x="1246" y="1274.5" width="3" height="14.4" fill="#43bd70"/><rect x="1246" y="1260.2" width="3" height="14.4" fill="#6fce57"/><rect x="1246" y="1245.8" width="3" height="14.4" fill="#92d641"/><rect x="1246" y="1231.5" width="3" height="14.4" fill="#5ec761"/><rect x="1246" y="1217.2" width="3" height="14.4" fill="#45be70"/><rect x="1249" y="1260.2" width="3" height="14.4" fill="#61c85f"/><rect x="1249" y="1245.8" width="3" height="14.4" fill="#92d641"/><rect x="1249" y="1231.5" width="3" height="14.4" fill="#63c95e"/><rect x="1252" y="1274.5" width="3" height="14.4" fill="#4bc06c"/><rect x="1252" y="1260.2" width="3" height="14.4" fill="#66ca5c"/><rect x="1252" y="1245.8" width="3" height="14.4" fill="#96d73f"/><rect x="1252" y="1231.5" width="3" height="14.4" fill="#63c95e"/><rect x="1252" y="1217.2" width="3" height="14.4" fill="#48c06d"/><rect x="1255" y="1274.5" width="3" height="14.4" fill="#49c06d"/><rect x="1255" y="1260.2" width="3" height="14.4" fill="#6ecd57"/><rect x="1255" y="1245.8" width="3" height="14.4" fill="#9ed839"/><rect x="1255" y="1231.5" width="3" height="14.4" fill="#69cb5b"/><rect x="1255" y="1217.2" width="3" height="14.4" fill="#4fc26a"/><rect x="1258" y="1274.5" width="3" height="14.4" fill="#3fba73"/><rect x="1258" y="1260.2" width="3" height="14.4" fill="#6bcc59"/><rect x="1258" y="1245.8" width="3" height="14.4" fill="#90d543"/><rect x="1258" y="1231.5" width="3" height="14.4" fill="#5fc860"/><rect x="1261" y="1260.2" width="3" height="14.4" fill="#66ca5c"/><rect x="1261" y="1245.8" width="3" height="14.4" fill="#98d73d"/><rect x="1261" y="1231.5" width="3" height="14.4" fill="#5cc762"/><rect x="1264" y="1274.5" width="3" height="14.4" fill="#4cc16b"/><rect x="1264" y="1260.2" width="3" height="14.4" fill="#5dc761"/><rect x="1264" y="1245.8" width="3" height="14.4" fill="#8bd446"/><rect x="1264" y="1231.5" width="3" height="14.4" fill="#61c85f"/><rect x="1264" y="1217.2" width="3" height="14.4" fill="#4fc26a"/><rect x="1267" y="1274.5" width="3" height="14.4" fill="#43bd70"/><rect x="1267" y="1260.2" width="3" height="14.4" fill="#62c95e"/><rect x="1267" y="1245.8" width="3" height="14.4" fill="#8fd543"/><rect x="1267" y="1231.5" width="3" height="14.4" fill="#5ac663"/><rect x="1270" y="1260.2" width="3" height="14.4" fill="#5fc860"/><rect x="1270" y="1245.8" width="3" height="14.4" fill="#99d73d"/><rect x="1270" y="1231.5" width="3" height="14.4" fill="#6ccc59"/><rect x="1273" y="1260.2" width="3" height="14.4" fill="#6ecd57"/><rect x="1273" y="1245.8" width="3" height="14.4" fill="#88d448"/><rect x="1273" y="1231.5" width="3" height="14.4" fill="#60c860"/><rect x="1273" y="1217.2" width="3" height="14.4" fill="#45be6f"/><rect x="1276" y="1260.2" width="3" height="14.4" fill="#61c85f"/><rect x="1276" y="1245.8" width="3" height="14.4" fill="#8ed544"/><rect x="1276" y="1231.5" width="3" height="14.4" fill="#6ecd58"/><rect x="1279" y="1274.5" width="3" height="14.4" fill="#41bc71"/><rect x="1279" y="1260.2" width="3" height="14.4" fill="#63c95e"/><rect x="1279" y="1245.8" width="3" height="14.4" fill="#83d34b"/><rect x="1279" y="1231.5" width="3" height="14.4" fill="#63c95e"/><rect x="1279" y="1217.2" width="3" height="14.4" fill="#4dc16b"/><rect x="1282" y="1260.2" width="3" height="14.4" fill="#63c95e"/><rect x="1282" y="1245.8" width="3" height="14.4" fill="#8cd545"/><rect x="1282" y="1231.5" width="3" height="14.4" fill="#6ecd58"/><rect x="1282" y="1217.2" width="3" height="14.4" fill="#46bf6f"/><rect x="1285" y="1260.2" width="3" height="14.4" fill="#58c564"/><rect x="1285" y="1245.8" width="3" height="14.4" fill="#81d24c"/><rect x="1285" y="1231.5" width="3" height="14.4" fill="#5ac663"/><rect x="1288" y="1274.5" width="3" height="14.4" fill="#3fba73"/><rect x="1288" y="1260.2" width="3" height="14.4" fill="#68cb5b"/><rect x="1288" y="1245.8" width="3" height="14.4" fill="#82d34b"/><rect x="1288" y="1231.5" width="3" height="14.4" fill="#67cb5b"/><rect x="1288" y="1217.2" width="3" height="14.4" fill="#40bb73"/><rect x="1291" y="1274.5" width="3" height="14.4" fill="#43bd71"/><rect x="1291" y="1260.2" width="3" height="14.4" fill="#5ac663"/><rect x="1291" y="1245.8" width="3" height="14.4" fill="#8bd446"/><rect x="1291" y="1231.5" width="3" height="14.4" fill="#6acc5a"/><rect x="1294" y="1274.5" width="3" height="14.4" fill="#4cc16b"/><rect x="1294" y="1260.2" width="3" height="14.4" fill="#5bc662"/><rect x="1294" y="1245.8" width="3" height="14.4" fill="#84d34a"/><rect x="1294" y="1231.5" width="3" height="14.4" fill="#6bcc59"/><rect x="1297" y="1274.5" width="3" height="14.4" fill="#40bb72"/><rect x="1297" y="1260.2" width="3" height="14.4" fill="#58c564"/><rect x="1297" y="1245.8" width="3" height="14.4" fill="#87d448"/><rect x="1297" y="1231.5" width="3" height="14.4" fill="#65ca5d"/><rect x="1300" y="1274.5" width="3" height="14.4" fill="#43bd71"/><rect x="1300" y="1260.2" width="3" height="14.4" fill="#5fc860"/><rect x="1300" y="1245.8" width="3" height="14.4" fill="#8cd545"/><rect x="1300" y="1231.5" width="3" height="14.4" fill="#5ec761"/><rect x="1300" y="1217.2" width="3" height="14.4" fill="#49c06d"/><rect x="1303" y="1260.2" width="3" height="14.4" fill="#5fc860"/><rect x="1303" y="1245.8" width="3" height="14.4" fill="#8ed544"/><rect x="1303" y="1231.5" width="3" height="14.4" fill="#5fc860"/><rect x="1306" y="1274.5" width="3" height="14.4" fill="#41bc72"/><rect x="1306" y="1260.2" width="3" height="14.4" fill="#5ec761"/><rect x="1306" y="1245.8" width="3" height="14.4" fill="#87d448"/><rect x="1306" y="1231.5" width="3" height="14.4" fill="#5ec761"/><rect x="1309" y="1260.2" width="3" height="14.4" fill="#5dc762"/><rect x="1309" y="1245.8" width="3" height="14.4" fill="#81d34c"/><rect x="1309" y="1231.5" width="3" height="14.4" fill="#63c95e"/><rect x="1309" y="1217.2" width="3" height="14.4" fill="#41bc72"/><rect x="1312" y="1260.2" width="3" height="14.4" fill="#59c663"/><rect x="1312" y="1245.8" width="3" height="14.4" fill="#90d542"/><rect x="1312" y="1231.5" width="3" height="14.4" fill="#5dc761"/><rect x="1312" y="1217.2" width="3" height="14.4" fill="#43bd71"/><rect x="1315" y="1260.2" width="3" height="14.4" fill="#65ca5d"/><rect x="1315" y="1245.8" width="3" height="14.4" fill="#90d542"/><rect x="1315" y="1231.5" width="3" height="14.4" fill="#5bc663"/><rect x="1315" y="1217.2" width="3" height="14.4" fill="#3cb975"/><rect x="1318" y="1274.5" width="3" height="14.4" fill="#40bb73"/><rect x="1318" y="1260.2" width="3" height="14.4" fill="#65ca5c"/><rect x="1318" y="1245.8" width="3" height="14.4" fill="#85d34a"/><rect x="1318" y="1231.5" width="3" height="14.4" fill="#5dc761"/><rect x="1318" y="1217.2" width="3" height="14.4" fill="#49c06d"/><rect x="1321" y="1274.5" width="3" height="14.4" fill="#40bb72"/><rect x="1321" y="1260.2" width="3" height="14.4" fill="#58c564"/><rect x="1321" y="1245.8" width="3" height="14.4" fill="#88d448"/><rect x="1321" y="1231.5" width="3" height="14.4" fill="#5fc860"/><rect x="1321" y="1217.2" width="3" height="14.4" fill="#42bd71"/><rect x="1324" y="1274.5" width="3" height="14.4" fill="#47bf6f"/><rect x="1324" y="1260.2" width="3" height="14.4" fill="#59c663"/><rect x="1324" y="1245.8" width="3" height="14.4" fill="#7ed24e"/><rect x="1324" y="1231.5" width="3" height="14.4" fill="#5bc663"/><rect x="1327" y="1274.5" width="3" height="14.4" fill="#3db974"/><rect x="1327" y="1260.2" width="3" height="14.4" fill="#64c95d"/><rect x="1327" y="1245.8" width="3" height="14.4" fill="#82d34b"/><rect x="1327" y="1231.5" width="3" height="14.4" fill="#59c564"/><rect x="1330" y="1260.2" width="3" height="14.4" fill="#5bc662"/><rect x="1330" y="1245.8" width="3" height="14.4" fill="#8bd446"/><rect x="1330" y="1231.5" width="3" height="14.4" fill="#62c95e"/><rect x="1330" y="1217.2" width="3" height="14.4" fill="#3bb875"/><rect x="1333" y="1260.2" width="3" height="14.4" fill="#57c565"/><rect x="1333" y="1245.8" width="3" height="14.4" fill="#8dd544"/><rect x="1333" y="1231.5" width="3" height="14.4" fill="#5ac663"/><rect x="1336" y="1274.5" width="3" height="14.4" fill="#41bc72"/><rect x="1336" y="1260.2" width="3" height="14.4" fill="#5cc762"/><rect x="1336" y="1245.8" width="3" height="14.4" fill="#90d542"/><rect x="1336" y="1231.5" width="3" height="14.4" fill="#5cc662"/><rect x="1336" y="1217.2" width="3" height="14.4" fill="#48bf6e"/><rect x="1339" y="1260.2" width="3" height="14.4" fill="#60c860"/><rect x="1339" y="1245.8" width="3" height="14.4" fill="#87d448"/><rect x="1339" y="1231.5" width="3" height="14.4" fill="#5ac663"/><rect x="1339" y="1217.2" width="3" height="14.4" fill="#43bd71"/><rect x="1342" y="1274.5" width="3" height="14.4" fill="#40bb72"/><rect x="1342" y="1260.2" width="3" height="14.4" fill="#5dc761"/><rect x="1342" y="1245.8" width="3" height="14.4" fill="#7dd24e"/><rect x="1342" y="1231.5" width="3" height="14.4" fill="#60c85f"/><rect x="1342" y="1217.2" width="3" height="14.4" fill="#44be70"/><rect x="1345" y="1274.5" width="3" height="14.4" fill="#42bd71"/><rect x="1345" y="1260.2" width="3" height="14.4" fill="#58c564"/><rect x="1345" y="1245.8" width="3" height="14.4" fill="#79d151"/><rect x="1345" y="1231.5" width="3" height="14.4" fill="#5fc860"/><rect x="1345" y="1217.2" width="3" height="14.4" fill="#3bb875"/><rect x="1348" y="1260.2" width="3" height="14.4" fill="#62c95e"/><rect x="1348" y="1245.8" width="3" height="14.4" fill="#88d447"/><rect x="1348" y="1231.5" width="3" height="14.4" fill="#5ec761"/><rect x="1348" y="1217.2" width="3" height="14.4" fill="#42bc71"/><rect x="1351" y="1260.2" width="3" height="14.4" fill="#66ca5c"/><rect x="1351" y="1245.8" width="3" height="14.4" fill="#7cd24f"/><rect x="1351" y="1231.5" width="3" height="14.4" fill="#54c467"/><rect x="1351" y="1217.2" width="3" height="14.4" fill="#3bb875"/><rect x="1354" y="1274.5" width="3" height="14.4" fill="#45be6f"/><rect x="1354" y="1260.2" width="3" height="14.4" fill="#5ec761"/><rect x="1354" y="1245.8" width="3" height="14.4" fill="#87d448"/><rect x="1354" y="1231.5" width="3" height="14.4" fill="#5bc662"/><rect x="1354" y="1217.2" width="3" height="14.4" fill="#46bf6f"/><rect x="1357" y="1274.5" width="3" height="14.4" fill="#3cb975"/><rect x="1357" y="1260.2" width="3" height="14.4" fill="#58c564"/><rect x="1357" y="1245.8" width="3" height="14.4" fill="#90d542"/><rect x="1357" y="1231.5" width="3" height="14.4" fill="#58c564"/><rect x="1357" y="1217.2" width="3" height="14.4" fill="#47bf6f"/><rect x="1360" y="1274.5" width="3" height="14.4" fill="#3bb875"/><rect x="1360" y="1260.2" width="3" height="14.4" fill="#66ca5c"/><rect x="1360" y="1245.8" width="3" height="14.4" fill="#8ad446"/><rect x="1360" y="1231.5" width="3" height="14.4" fill="#66ca5c"/><rect x="1360" y="1217.2" width="3" height="14.4" fill="#3cb875"/><rect x="1363" y="1274.5" width="3" height="14.4" fill="#3fbb73"/><rect x="1363" y="1260.2" width="3" height="14.4" fill="#5ec761"/><rect x="1363" y="1245.8" width="3" height="14.4" fill="#90d543"/><rect x="1363" y="1231.5" width="3" height="14.4" fill="#64c95d"/><rect x="1363" y="1217.2" width="3" height="14.4" fill="#3eba73"/><rect x="1366" y="1274.5" width="3" height="14.4" fill="#40bc72"/><rect x="1366" y="1260.2" width="3" height="14.4" fill="#56c466"/><rect x="1366" y="1245.8" width="3" height="14.4" fill="#8fd543"/><rect x="1366" y="1231.5" width="3" height="14.4" fill="#58c564"/><rect x="1366" y="1217.2" width="3" height="14.4" fill="#39b776"/><rect x="1369" y="1245.8" width="3" height="14.4" fill="#8bd446"/><rect x="1369" y="1231.5" width="3" height="14.4" fill="#55c466"/><rect x="725" y="741" width="574" height="150" fill="rgba(219,160,235,0.2)" stroke="#7b2a8e" stroke-width="3"/><rect x="708.5" y="1119" width="740" height="273.6" fill="rgba(219,160,235,0.2)" stroke="#4e3f58" stroke-width="3"/><rect x="704" y="1433.5" width="722" height="101" fill="rgba(219,160,235,0.2)" stroke="#7b2a8e" stroke-width="3"/><rect x="680.5" y="716.6" width="798.2" height="901.9" fill="none" stroke="#000" stroke-width="2.5"/><path d="M669.5 1610.8 H680.5" stroke="#000" stroke-width="2.5"/><path d="M669.5 1467.7 H680.5" stroke="#000" stroke-width="2.5"/><path d="M669.5 1324.6 H680.5" stroke="#000" stroke-width="2.5"/><path d="M669.5 1181.5 H680.5" stroke="#000" stroke-width="2.5"/><path d="M669.5 1038.4 H680.5" stroke="#000" stroke-width="2.5"/><path d="M669.5 895.3 H680.5" stroke="#000" stroke-width="2.5"/><path d="M669.5 752.2 H680.5" stroke="#000" stroke-width="2.5"/><path d="M840.0 1618.5 V1629.5" stroke="#000" stroke-width="2.5"/><path d="M999.6 1618.5 V1629.5" stroke="#000" stroke-width="2.5"/><path d="M1159.1 1618.5 V1629.5" stroke="#000" stroke-width="2.5"/><path d="M1318.7 1618.5 V1629.5" stroke="#000" stroke-width="2.5"/><path d="M1478.2 1618.5 V1629.5" stroke="#000" stroke-width="2.5"/></svg>
<div style="position:absolute;left:645.6px;top:1594.7px;font-size:30.8px;line-height:1;font-weight:normal;color:#111;white-space:nowrap;font-family:"Liberation Sans", sans-serif;">0</div>
<div style="position:absolute;left:630.2px;top:1451.6px;font-size:30.8px;line-height:1;font-weight:normal;color:#111;white-space:nowrap;font-family:"Liberation Sans", sans-serif;">10</div>
<div style="position:absolute;left:630.2px;top:1308.5px;font-size:30.8px;line-height:1;font-weight:normal;color:#111;white-space:nowrap;font-family:"Liberation Sans", sans-serif;">20</div>
<div style="position:absolute;left:630.2px;top:1165.4px;font-size:30.8px;line-height:1;font-weight:normal;color:#111;white-space:nowrap;font-family:"Liberation Sans", sans-serif;">30</div>
<div style="position:absolute;left:630.2px;top:1022.3px;font-size:30.8px;line-height:1;font-weight:normal;color:#111;white-space:nowrap;font-family:"Liberation Sans", sans-serif;">40</div>
<div style="position:absolute;left:630.2px;top:879.2px;font-size:30.8px;line-height:1;font-weight:normal;color:#111;white-space:nowrap;font-family:"Liberation Sans", sans-serif;">50</div>
<div style="position:absolute;left:630.2px;top:736.1px;font-size:30.8px;line-height:1;font-weight:normal;color:#111;white-space:nowrap;font-family:"Liberation Sans", sans-serif;">60</div>
<div style="position:absolute;left:797.5px;top:1630.9px;font-size:30.8px;line-height:1;font-weight:normal;color:#111;white-space:nowrap;font-family:"Liberation Sans", sans-serif;">20000</div>
<div style="position:absolute;left:957.1px;top:1630.9px;font-size:30.8px;line-height:1;font-weight:normal;color:#111;white-space:nowrap;font-family:"Liberation Sans", sans-serif;">40000</div>
<div style="position:absolute;left:1116.6px;top:1630.9px;font-size:30.8px;line-height:1;font-weight:normal;color:#111;white-space:nowrap;font-family:"Liberation Sans", sans-serif;">60000</div>
<div style="position:absolute;left:1276.2px;top:1630.9px;font-size:30.8px;line-height:1;font-weight:normal;color:#111;white-space:nowrap;font-family:"Liberation Sans", sans-serif;">80000</div>
<div style="position:absolute;left:1428.0px;top:1630.9px;font-size:30.8px;line-height:1;font-weight:normal;color:#111;white-space:nowrap;font-family:"Liberation Sans", sans-serif;">100000</div>
<div style="position:absolute;left:956.0px;top:1675.5px;font-size:31.3px;line-height:1;font-weight:normal;color:#111;white-space:nowrap;font-family:"Liberation Sans", sans-serif;">Time-of-flight (<i>μs</i>)</div>
<div style="position:absolute;left:582px;top:1236px;transform-origin:0 0;transform:rotate(-90deg);font-size:30px;line-height:1;color:#111;white-space:nowrap">Spectrum</div>
<div style="position:absolute;left:1583.0px;top:699.0px;width:81.0px;height:931.0px;background:linear-gradient(#f6e62f 0%,#e8e436 4%,#c5df3c 11%,#8ed24a 19%,#5ec45c 27%,#4aae7a 34%,#3e9c80 42%,#2f8a88 50%,#2a7488 58%,#2b5f88 66%,#35508a 73%,#433e80 81%,#432a70 89%,#3e1050 100%);border:2.5px solid #000;box-sizing:border-box"></div>
<svg style="position:absolute;left:0;top:0" width="1700" height="1700"><path d="M1663 720.5 H1674" stroke="#000" stroke-width="2.5"/><path d="M1663 794.7 H1674" stroke="#000" stroke-width="2.5"/><path d="M1663 870.2 H1674" stroke="#000" stroke-width="2.5"/><path d="M1663 944.3 H1674" stroke="#000" stroke-width="2.5"/><path d="M1663 1020.3 H1674" stroke="#000" stroke-width="2.5"/><path d="M1663 1094.8 H1674" stroke="#000" stroke-width="2.5"/><path d="M1663 1170 H1674" stroke="#000" stroke-width="2.5"/><path d="M1663 1245 H1674" stroke="#000" stroke-width="2.5"/><path d="M1663 1320 H1674" stroke="#000" stroke-width="2.5"/><path d="M1663 1396 H1674" stroke="#000" stroke-width="2.5"/><path d="M1663 1471 H1674" stroke="#000" stroke-width="2.5"/><path d="M1663 1546.7 H1674" stroke="#000" stroke-width="2.5"/><path d="M1663 1628.8 H1674" stroke="#000" stroke-width="2.5"/></svg>
<div style="position:absolute;left:1685.0px;top:708.1px;font-size:30px;line-height:1;font-weight:normal;color:#111;white-space:nowrap;font-family:"Liberation Sans", sans-serif;">10</div>
<div style="position:absolute;left:1720.0px;top:700.7px;font-size:21px;line-height:1;font-weight:normal;color:#111;white-space:nowrap;font-family:"Liberation Sans", sans-serif;letter-spacing:2px">3</div>
<div style="position:absolute;left:1685.0px;top:782.3px;font-size:30px;line-height:1;font-weight:normal;color:#111;white-space:nowrap;font-family:"Liberation Sans", sans-serif;">10</div>
<div style="position:absolute;left:1720.0px;top:774.9px;font-size:21px;line-height:1;font-weight:normal;color:#111;white-space:nowrap;font-family:"Liberation Sans", sans-serif;letter-spacing:2px">2</div>
<div style="position:absolute;left:1685.0px;top:857.8px;font-size:30px;line-height:1;font-weight:normal;color:#111;white-space:nowrap;font-family:"Liberation Sans", sans-serif;">10</div>
<div style="position:absolute;left:1720.0px;top:850.4px;font-size:21px;line-height:1;font-weight:normal;color:#111;white-space:nowrap;font-family:"Liberation Sans", sans-serif;letter-spacing:2px">1</div>
<div style="position:absolute;left:1685.0px;top:931.9px;font-size:30px;line-height:1;font-weight:normal;color:#111;white-space:nowrap;font-family:"Liberation Sans", sans-serif;">10</div>
<div style="position:absolute;left:1720.0px;top:924.5px;font-size:21px;line-height:1;font-weight:normal;color:#111;white-space:nowrap;font-family:"Liberation Sans", sans-serif;letter-spacing:2px">0</div>
<div style="position:absolute;left:1685.0px;top:1007.9px;font-size:30px;line-height:1;font-weight:normal;color:#111;white-space:nowrap;font-family:"Liberation Sans", sans-serif;">10</div>
<div style="position:absolute;left:1720.0px;top:1000.5px;font-size:21px;line-height:1;font-weight:normal;color:#111;white-space:nowrap;font-family:"Liberation Sans", sans-serif;letter-spacing:2px">−1</div>
<div style="position:absolute;left:1685.0px;top:1082.4px;font-size:30px;line-height:1;font-weight:normal;color:#111;white-space:nowrap;font-family:"Liberation Sans", sans-serif;">10</div>
<div style="position:absolute;left:1720.0px;top:1075.0px;font-size:21px;line-height:1;font-weight:normal;color:#111;white-space:nowrap;font-family:"Liberation Sans", sans-serif;letter-spacing:2px">−2</div>
<div style="position:absolute;left:1685.0px;top:1157.6px;font-size:30px;line-height:1;font-weight:normal;color:#111;white-space:nowrap;font-family:"Liberation Sans", sans-serif;">10</div>
<div style="position:absolute;left:1720.0px;top:1150.2px;font-size:21px;line-height:1;font-weight:normal;color:#111;white-space:nowrap;font-family:"Liberation Sans", sans-serif;letter-spacing:2px">−3</div>
<div style="position:absolute;left:1685.0px;top:1232.6px;font-size:30px;line-height:1;font-weight:normal;color:#111;white-space:nowrap;font-family:"Liberation Sans", sans-serif;">10</div>
<div style="position:absolute;left:1720.0px;top:1225.2px;font-size:21px;line-height:1;font-weight:normal;color:#111;white-space:nowrap;font-family:"Liberation Sans", sans-serif;letter-spacing:2px">−4</div>
<div style="position:absolute;left:1685.0px;top:1307.6px;font-size:30px;line-height:1;font-weight:normal;color:#111;white-space:nowrap;font-family:"Liberation Sans", sans-serif;">10</div>
<div style="position:absolute;left:1720.0px;top:1300.2px;font-size:21px;line-height:1;font-weight:normal;color:#111;white-space:nowrap;font-family:"Liberation Sans", sans-serif;letter-spacing:2px">−5</div>
<div style="position:absolute;left:1685.0px;top:1383.6px;font-size:30px;line-height:1;font-weight:normal;color:#111;white-space:nowrap;font-family:"Liberation Sans", sans-serif;">10</div>
<div style="position:absolute;left:1720.0px;top:1376.2px;font-size:21px;line-height:1;font-weight:normal;color:#111;white-space:nowrap;font-family:"Liberation Sans", sans-serif;letter-spacing:2px">−6</div>
<div style="position:absolute;left:1685.0px;top:1458.6px;font-size:30px;line-height:1;font-weight:normal;color:#111;white-space:nowrap;font-family:"Liberation Sans", sans-serif;">10</div>
<div style="position:absolute;left:1720.0px;top:1451.2px;font-size:21px;line-height:1;font-weight:normal;color:#111;white-space:nowrap;font-family:"Liberation Sans", sans-serif;letter-spacing:2px">−7</div>
<div style="position:absolute;left:1685.0px;top:1534.3px;font-size:30px;line-height:1;font-weight:normal;color:#111;white-space:nowrap;font-family:"Liberation Sans", sans-serif;">10</div>
<div style="position:absolute;left:1720.0px;top:1526.9px;font-size:21px;line-height:1;font-weight:normal;color:#111;white-space:nowrap;font-family:"Liberation Sans", sans-serif;letter-spacing:2px">−8</div>
<div style="position:absolute;left:1685.0px;top:1613.6px;font-size:30px;line-height:1;font-weight:normal;color:#111;white-space:nowrap;font-family:"Liberation Sans", sans-serif;">0</div>
<div style="position:absolute;left:2066.0px;top:434.0px;width:1084.0px;height:1372.0px;background:#fff"></div>
<svg style="position:absolute;left:0;top:0" width="3200" height="1850"><path d="M2271.8 639.9V785.5M2277.8 579.4V749.3M2280.8 623.1V772.4M2285.3 629.7V742.9M2315.3 637.4V776.2M2318.3 634.7V738.1M2319.8 631.6V761.1M2321.3 644.1V736.1M2327.3 665.3V753.3M2330.3 647.4V748.5M2346.8 674.1V738.8M2363.3 639.5V744.6M2369.3 636.5V741.1M2370.8 632.9V730.1M2372.3 643.8V719.1M2373.8 648.0V694.1M2385.8 640.7V693.6M2388.8 642.6V684.6M2399.3 657.7V691.4M2402.3 652.6V711.9M2403.8 652.1V719.9M2411.3 668.1V707.2M2417.3 660.9V713.6M2420.3 671.4V696.4M2421.8 681.3V709.9M2423.3 661.1V693.4M2435.3 695.2V727.1M2436.8 693.4V726.5M2438.3 695.9V726.5M2444.3 706.3V750.7M2445.8 721.2V750.9M2450.3 744.2V770.6M2451.8 761.4V787.7M2474.3 810.8V856.3M2480.3 811.5V862.4M2483.3 826.6V865.6M2489.3 817.2V842.9M2490.8 807.5V850.8M2501.3 809.9V831.7M2508.8 789.1V825.2M2520.8 788.2V833.3M2532.8 803.4V841.0M2538.8 807.9V843.8M2549.3 836.0V871.7M2568.8 897.7V930.0M2573.3 922.8V961.6M2579.3 948.2V973.5M2585.3 980.5V1001.8M2588.3 995.3V1019.1M2589.8 985.6V1029.2M2598.8 1025.2V1060.0M2600.3 1037.1V1072.8M2606.3 1071.3V1099.8M2616.8 1082.8V1088.9M2622.8 1061.3V1089.9M2654.3 1017.6V1049.8M2655.8 1018.0V1048.7M2660.3 1034.8V1049.2M2666.3 1049.7V1065.3M2691.8 1115.5V1138.9M2694.8 1130.7V1167.7M2706.8 1212.5V1250.0M2714.3 1237.0V1335.5M2723.3 1222.6V1272.7M2726.3 1202.7V1262.7M2754.8 1182.2V1198.9M2757.8 1184.2V1205.0M2762.3 1187.6V1222.8M2777.3 1243.1V1282.4M2783.3 1269.9V1325.1M2784.8 1283.7V1343.1M2819.3 1264.0V1308.7M2823.8 1251.3V1295.2M2826.8 1244.4V1306.3M2835.8 1251.6V1322.5M2844.8 1283.4V1319.1M2854.6 1299.9V1346.1M2859.2 1300.2V1321.0M2863.8 1327.1V1361.1M2870.7 1322.1V1361.2M2873.0 1323.8V1364.4M2877.6 1311.2V1336.2M2879.9 1321.4V1347.7M2886.8 1310.3V1388.9M2889.1 1314.4V1347.2M2891.4 1315.5V1357.3M2896.0 1334.7V1378.2M2900.6 1359.4V1392.4M2905.2 1343.6V1445.5M2907.5 1343.6V1446.2M2916.7 1341.8V1378.7M2928.2 1336.8V1380.4M2935.1 1339.7V1382.6M2939.7 1348.2V1393.0M2946.6 1357.3V1392.0M2951.2 1354.0V1380.2M2953.5 1370.9V1392.0M2955.8 1348.0V1451.8M2960.4 1335.8V1411.0M2965.0 1349.2V1455.3M2969.6 1332.0V1394.8M2971.9 1354.1V1414.4M2983.4 1342.0V1423.2M2990.3 1353.7V1452.1M2994.9 1381.0V1462.0M2997.2 1363.3V1455.3M3008.7 1360.8V1412.3M3011.0 1354.9V1404.5M3013.3 1400.3V1422.9M3024.8 1386.7V1464.6M3027.1 1384.3V1554.2M3029.4 1396.3V1478.6M3031.7 1410.2V1487.0M3034.0 1397.9V1568.2M3036.3 1406.3V1586.5M3040.9 1421.2V1477.6M3043.2 1411.1V1478.9M3045.5 1395.4V1505.8M3050.1 1368.8V1515.7M3054.7 1343.7V1431.1M3061.6 1366.1V1599.8M3070.8 1389.6V1465.2M3073.1 1332.0V1486.1M3075.4 1342.8V1461.0M3082.3 1397.4V1503.4M3091.5 1411.2V1521.7M2273 525V700M2276.7 536V690M2284.7 553V700M2312.5 550V690M2302 578V700M2356.5 604V700M2387.5 642V700M2969 1350V1677M3029 1420V1662M3046 1400V1622M3076 1410V1677M3082 1440V1677M3088 1420V1677M3094 1450V1677M3004 1400V1600M3064 1350V1640" stroke="#8fcdf3" stroke-width="1.4"/><path d="M2258.0 650.9V840.0M2259.5 714.0V825.7M2261.0 698.4V820.7M2262.5 681.1V789.0M2264.0 673.5V824.9M2265.5 639.4V819.4M2267.0 596.9V798.3M2268.5 644.2V820.0M2270.0 639.3V788.5M2271.5 645.9V794.9M2273.0 615.8V780.8M2274.5 568.7V715.6M2276.0 578.9V751.1M2277.5 656.4V809.0M2279.0 615.6V780.4M2280.5 670.4V818.2M2282.0 586.0V778.4M2283.5 622.8V752.8M2285.0 631.6V821.5M2286.5 608.7V808.1M2288.0 592.6V728.5M2289.5 604.0V819.9M2291.0 619.2V745.2M2292.5 596.3V815.2M2294.0 615.9V788.6M2295.5 627.2V821.1M2297.0 643.5V759.7M2298.5 656.1V808.2M2300.0 619.6V780.5M2301.5 629.0V795.5M2303.0 606.8V784.8M2304.5 620.6V742.5M2306.0 616.8V784.1M2307.5 625.4V786.0M2309.0 616.2V792.7M2310.5 613.0V783.2M2312.0 616.9V792.0M2313.5 629.6V782.0M2315.0 648.4V774.7M2316.5 630.3V744.6M2318.0 626.9V763.4M2319.5 642.1V736.4M2321.0 646.7V762.7M2322.5 621.5V720.2M2324.0 641.5V727.4M2325.5 659.8V756.7M2327.0 621.9V768.2M2328.5 641.5V754.1M2330.0 622.6V763.6M2331.5 682.8V747.0M2333.0 664.3V757.3M2334.5 644.4V732.8M2336.0 661.4V769.5M2337.5 657.9V768.7M2339.0 650.4V767.8M2340.5 641.5V722.3M2342.0 652.4V756.8M2343.5 635.2V721.3M2345.0 664.2V741.8M2346.5 648.8V750.5M2348.0 669.6V755.2M2349.5 653.5V734.1M2351.0 651.0V750.4M2352.5 643.8V729.1M2354.0 651.1V733.7M2355.5 642.7V746.0M2357.0 630.9V732.9M2358.5 668.6V737.8M2360.0 631.8V739.0M2361.5 634.7V750.0M2363.0 653.0V721.1M2364.5 672.3V731.2M2366.0 643.6V724.2M2367.5 628.1V743.2M2369.0 629.9V739.3M2370.5 637.5V719.6M2372.0 642.2V701.5M2373.5 668.7V731.7M2375.0 647.3V741.7M2376.5 634.2V701.7M2378.0 631.1V726.3M2379.5 639.9V709.7M2381.0 657.3V713.9M2382.5 660.8V730.4M2384.0 634.8V696.0M2385.5 650.5V721.1M2387.0 633.1V691.4M2388.5 649.0V732.2M2390.0 662.6V723.8M2391.5 643.7V716.2M2393.0 651.7V724.1M2394.5 650.2V725.6M2396.0 643.3V721.3M2397.5 648.8V696.2M2399.0 667.3V715.7M2400.5 651.1V713.4M2402.0 649.5V722.7M2403.5 649.1V698.9M2405.0 638.1V701.6M2406.5 648.1V713.4M2408.0 644.9V700.1M2409.5 665.8V708.0M2411.0 642.4V706.4M2412.5 659.7V716.2M2414.0 656.7V712.3M2415.5 660.3V721.3M2417.0 666.4V710.4M2418.5 662.4V701.4M2420.0 677.3V710.5M2421.5 660.7V703.1M2423.0 661.4V707.2M2424.5 666.0V700.4M2426.0 671.5V726.1M2427.5 668.6V715.5M2429.0 673.1V726.6M2430.5 678.5V731.1M2432.0 681.4V713.6M2433.5 692.8V727.9M2435.0 686.4V727.0M2436.5 691.7V729.7M2438.0 695.1V745.5M2439.5 700.8V745.5M2441.0 697.8V755.7M2442.5 705.6V752.4M2444.0 713.6V756.5M2445.5 725.3V755.6M2447.0 721.8V781.3M2448.5 738.4V778.8M2450.0 754.3V792.1M2451.5 744.1V795.4M2453.0 759.4V805.5M2454.5 751.7V812.0M2456.0 776.5V822.4M2457.5 759.9V802.1M2459.0 765.9V822.8M2460.5 781.3V829.8M2462.0 791.9V835.2M2463.5 779.7V849.9M2465.0 796.5V852.7M2466.5 793.4V831.3M2468.0 812.1V864.1M2469.5 793.0V864.6M2471.0 815.1V863.8M2472.5 807.7V860.1M2474.0 807.7V871.8M2475.5 801.4V880.0M2477.0 803.0V867.6M2478.5 810.6V865.9M2480.0 801.8V872.3M2481.5 819.1V872.3M2483.0 796.6V869.9M2484.5 803.3V857.2M2486.0 815.2V869.4M2487.5 810.7V851.9M2489.0 800.6V856.4M2490.5 804.3V860.9M2492.0 799.6V850.8M2493.5 790.6V851.8M2495.0 789.5V851.1M2496.5 797.7V844.2M2498.0 801.5V842.0M2499.5 804.2V837.7M2501.0 791.0V836.5M2502.5 784.4V829.2M2504.0 778.0V833.2M2505.5 777.3V827.3M2507.0 787.6V826.2M2508.5 778.3V813.8M2510.0 777.8V832.8M2511.5 775.8V832.3M2513.0 786.5V814.1M2514.5 785.7V832.0M2516.0 784.8V828.0M2517.5 783.8V825.0M2519.0 780.6V840.5M2520.5 794.3V831.1M2522.0 783.8V834.5M2523.5 788.6V840.6M2525.0 794.0V842.1M2526.5 791.5V826.7M2528.0 794.4V824.4M2529.5 799.3V842.0M2531.0 795.7V844.6M2532.5 797.0V836.1M2534.0 807.9V837.3M2535.5 801.4V835.6M2537.0 804.0V851.6M2538.5 806.6V858.7M2540.0 823.0V848.5M2541.5 809.0V864.4M2543.0 810.6V866.6M2544.5 817.0V861.3M2546.0 838.6V873.0M2547.5 834.3V876.3M2549.0 832.2V883.6M2550.5 841.9V885.9M2552.0 849.8V880.8M2553.5 861.7V889.0M2555.0 846.1V890.1M2556.5 854.3V909.5M2558.0 864.3V907.0M2559.5 868.2V913.4M2561.0 871.4V911.0M2562.5 890.8V926.5M2564.0 878.9V924.3M2565.5 886.5V930.0M2567.0 894.8V934.5M2568.5 895.1V947.9M2570.0 900.6V963.7M2571.5 918.3V968.9M2573.0 922.9V975.1M2574.5 919.6V966.2M2576.0 930.4V972.7M2577.5 938.5V976.2M2579.0 936.6V994.4M2580.5 948.6V998.0M2582.0 956.0V1009.7M2583.5 973.1V1007.4M2585.0 966.8V1019.6M2586.5 988.1V1025.2M2588.0 985.0V1036.0M2589.5 988.0V1028.7M2591.0 992.4V1038.5M2592.5 1015.8V1053.8M2594.0 1017.9V1058.5M2595.5 1024.7V1060.9M2597.0 1021.7V1060.8M2598.5 1035.7V1077.7M2600.0 1048.9V1084.9M2601.5 1055.3V1087.2M2603.0 1065.5V1100.6M2604.5 1068.7V1103.3M2606.0 1087.5V1114.0M2607.5 1087.8V1113.0M2609.0 1071.6V1109.7M2610.5 1065.4V1098.5M2612.0 1074.2V1101.5M2613.5 1067.1V1100.3M2615.0 1073.4V1096.8M2616.5 1062.0V1092.8M2618.0 1059.9V1090.8M2619.5 1050.4V1095.4M2621.0 1055.9V1090.8M2622.5 1049.5V1087.2M2624.0 1036.2V1081.1M2625.5 1033.8V1077.6M2627.0 1044.9V1083.5M2628.5 1037.4V1081.9M2630.0 1026.3V1073.4M2631.5 1026.9V1064.0M2633.0 1029.9V1065.6M2634.5 1025.6V1062.2M2636.0 1027.8V1052.6M2637.5 1020.0V1057.9M2639.0 1020.2V1051.7M2640.5 1017.0V1046.3M2642.0 1018.2V1056.5M2643.5 1013.1V1053.4M2645.0 1026.8V1052.6M2646.5 1026.2V1053.0M2648.0 1023.8V1052.9M2649.5 1011.6V1045.9M2651.0 1014.3V1046.0M2652.5 1012.6V1049.8M2654.0 1012.6V1053.4M2655.5 1018.4V1057.7M2657.0 1015.1V1055.0M2658.5 1028.3V1055.1M2660.0 1026.8V1060.8M2661.5 1031.6V1065.6M2663.0 1027.0V1058.4M2664.5 1042.1V1066.4M2666.0 1035.6V1076.4M2667.5 1045.3V1079.4M2669.0 1034.7V1080.1M2670.5 1042.3V1077.7M2672.0 1055.5V1083.1M2673.5 1045.4V1074.0M2675.0 1046.3V1080.6M2676.5 1056.2V1100.1M2678.0 1064.3V1097.6M2679.5 1070.5V1102.3M2681.0 1064.6V1114.2M2682.5 1070.3V1122.6M2684.0 1081.7V1129.5M2685.5 1094.6V1125.6M2687.0 1092.9V1132.5M2688.5 1108.7V1139.6M2690.0 1114.0V1143.1M2691.5 1118.8V1152.5M2693.0 1129.2V1167.8M2694.5 1125.6V1169.5M2696.0 1141.3V1185.3M2697.5 1153.6V1189.9M2699.0 1166.1V1204.0M2700.5 1160.0V1204.1M2702.0 1185.5V1236.4M2703.5 1172.9V1249.7M2705.0 1206.1V1259.1M2706.5 1217.8V1271.7M2708.0 1219.2V1274.6M2709.5 1208.7V1277.7M2711.0 1225.6V1323.1M2712.5 1233.5V1337.6M2714.0 1241.1V1311.9M2715.5 1223.8V1308.7M2717.0 1226.2V1288.8M2718.5 1227.3V1298.7M2720.0 1220.2V1293.5M2721.5 1218.2V1281.5M2723.0 1209.7V1275.0M2724.5 1201.6V1270.3M2726.0 1219.2V1256.2M2727.5 1190.0V1235.0M2729.0 1189.9V1244.8M2730.5 1180.0V1241.2M2732.0 1179.3V1224.1M2733.5 1168.6V1220.8M2735.0 1164.5V1227.5M2736.5 1186.1V1228.7M2738.0 1169.5V1209.0M2739.5 1168.4V1214.1M2741.0 1153.8V1207.5M2742.5 1143.7V1205.8M2744.0 1146.5V1201.7M2745.5 1160.2V1204.6M2747.0 1145.4V1190.8M2748.5 1156.3V1196.0M2750.0 1158.3V1214.5M2751.5 1166.3V1202.1M2753.0 1172.3V1206.3M2754.5 1167.5V1229.3M2756.0 1177.0V1209.9M2757.5 1178.0V1233.2M2759.0 1180.3V1238.9M2760.5 1185.0V1227.4M2762.0 1192.9V1226.2M2763.5 1198.7V1246.6M2765.0 1202.3V1240.7M2766.5 1196.1V1252.3M2768.0 1212.5V1253.6M2769.5 1213.4V1250.2M2771.0 1221.7V1268.3M2772.5 1219.3V1265.6M2774.0 1231.3V1288.7M2775.5 1238.4V1287.8M2777.0 1240.7V1293.9M2778.5 1247.0V1306.7M2780.0 1258.6V1316.2M2781.5 1265.4V1330.7M2783.0 1278.7V1346.0M2784.5 1277.3V1323.2M2786.0 1300.9V1346.9M2787.5 1297.2V1341.8M2789.0 1288.4V1350.4M2790.5 1291.6V1357.5M2792.0 1280.3V1363.6M2793.5 1300.1V1359.7M2795.0 1274.9V1353.0M2796.5 1278.5V1378.2M2798.0 1278.4V1361.6M2799.5 1303.7V1378.9M2801.0 1283.6V1379.6M2802.5 1265.9V1365.0M2804.0 1296.8V1376.3M2805.5 1264.3V1361.1M2807.0 1263.3V1352.1M2808.5 1266.4V1369.0M2810.0 1294.0V1352.6M2811.5 1261.9V1349.0M2813.0 1259.5V1346.8M2814.5 1247.1V1341.2M2816.0 1259.8V1324.4M2817.5 1254.8V1311.5M2819.0 1244.1V1314.9M2820.5 1240.5V1323.8M2822.0 1249.8V1298.3M2823.5 1234.8V1316.4M2825.0 1239.2V1309.0M2826.5 1232.4V1289.4M2828.0 1241.8V1316.3M2829.5 1266.6V1320.2M2831.0 1244.0V1324.4M2832.5 1242.3V1306.2M2834.0 1241.7V1328.1M2835.5 1263.3V1315.2M2837.0 1263.9V1335.0M2838.5 1254.3V1315.5M2840.0 1265.9V1342.2M2841.5 1264.9V1336.7M2843.0 1279.3V1319.2M2844.5 1283.0V1333.9M2846.0 1286.7V1350.1M2847.5 1284.2V1355.3M2849.0 1278.5V1333.3M2850.5 1283.6V1315.2M2852.8 1295.4V1355.0M2855.1 1297.8V1384.4M2857.4 1291.0V1329.4M2859.7 1301.5V1384.8M2862.0 1322.0V1364.9M2864.3 1312.2V1360.3M2866.6 1338.7V1380.0M2868.9 1320.1V1363.4M2871.2 1319.7V1367.2M2873.5 1319.2V1354.6M2875.8 1308.2V1339.2M2878.1 1311.9V1352.1M2880.4 1298.9V1353.7M2882.7 1316.9V1357.7M2885.0 1305.9V1395.6M2887.3 1308.6V1353.6M2889.6 1307.2V1360.2M2891.9 1319.0V1401.4M2894.2 1334.0V1379.3M2896.5 1336.2V1395.4M2898.8 1351.8V1398.2M2901.1 1331.9V1387.0M2903.4 1342.3V1453.6M2905.7 1337.0V1453.2M2908.0 1347.8V1385.9M2910.3 1356.7V1393.3M2912.6 1341.6V1381.7M2914.9 1339.1V1385.5M2917.2 1345.1V1435.8M2919.5 1328.0V1437.6M2921.8 1325.9V1365.3M2924.1 1351.7V1387.1M2926.4 1332.9V1381.6M2928.7 1354.1V1404.5M2931.0 1335.1V1417.3M2933.3 1332.3V1391.7M2935.6 1352.5V1389.0M2937.9 1345.6V1398.0M2940.2 1341.0V1436.5M2942.5 1349.7V1395.6M2944.8 1348.4V1398.1M2947.1 1344.9V1457.7M2949.4 1351.9V1390.1M2951.7 1366.2V1398.8M2954.0 1339.1V1453.3M2956.3 1360.9V1437.8M2958.6 1331.5V1412.6M2960.9 1341.8V1383.2M2963.2 1344.0V1457.8M2965.5 1356.3V1415.5M2967.8 1326.5V1397.3M2970.1 1353.8V1417.1M2972.4 1347.3V1463.4M2974.7 1344.6V1416.2M2977.0 1354.1V1411.1M2979.3 1357.3V1412.9M2981.6 1333.8V1428.7M2983.9 1356.6V1435.4M2986.2 1354.5V1495.7M2988.5 1349.8V1461.3M2990.8 1344.5V1444.5M2993.1 1371.8V1468.1M2995.4 1356.7V1464.0M2997.7 1360.0V1420.9M3000.0 1352.2V1472.2M3002.3 1368.7V1414.6M3004.6 1357.9V1413.1M3006.9 1358.3V1421.5M3009.2 1352.5V1406.3M3011.5 1398.3V1430.7M3013.8 1395.9V1546.3M3016.1 1375.4V1441.3M3018.4 1384.3V1463.0M3020.7 1373.5V1469.6M3023.0 1385.3V1474.1M3025.3 1379.7V1556.5M3027.6 1392.4V1483.3M3029.9 1403.5V1495.2M3032.2 1393.3V1573.7M3034.5 1404.4V1594.5M3036.8 1413.1V1494.1M3039.1 1415.9V1487.3M3041.4 1404.4V1482.7M3043.7 1394.2V1514.5M3046.0 1393.4V1473.5M3048.3 1367.6V1517.1M3050.6 1376.3V1480.3M3052.9 1336.8V1438.6M3055.2 1340.8V1540.2M3057.5 1345.8V1427.8M3059.8 1359.7V1604.9M3062.1 1355.8V1428.7M3064.4 1354.0V1474.5M3066.7 1393.2V1517.8M3069.0 1385.1V1475.1M3071.3 1330.0V1490.5M3073.6 1337.8V1470.6M3075.9 1372.9V1497.5M3078.2 1374.5V1504.8M3080.5 1391.0V1513.3M3082.8 1405.3V1500.2M3085.1 1388.5V1522.7M3087.4 1443.8V1561.7M3089.7 1409.4V1528.1M3092.0 1450.2V1628.4M2271 505V700M2274.7 516V690M2282.7 533V700M2310.5 530V690M2300 558V700M2354.5 584V700M2385.5 622V700M2967 1330V1677M3027 1400V1662M3044 1380V1622M3074 1390V1677M3080 1420V1677M3086 1400V1677M3092 1430V1677M3002 1380V1600M3062 1330V1640" stroke="#2d6aa8" stroke-width="2"/><path d="M2258.0 754.2 L2259.5 778.5 L2261.0 771.0 L2262.5 731.6 L2264.0 746.0 L2265.5 671.4 L2267.0 758.7 L2268.5 719.5 L2270.0 738.2 L2271.5 701.8 L2273.0 727.7 L2274.5 643.0 L2276.0 640.5 L2277.5 746.7 L2279.0 680.3 L2280.5 738.5 L2282.0 712.6 L2283.5 681.7 L2285.0 667.2 L2286.5 677.0 L2288.0 659.5 L2289.5 669.2 L2291.0 668.5 L2292.5 706.2 L2294.0 709.9 L2295.5 674.9 L2297.0 709.8 L2298.5 745.0 L2300.0 724.3 L2301.5 687.2 L2303.0 688.2 L2304.5 662.1 L2306.0 702.7 L2307.5 692.0 L2309.0 691.8 L2310.5 744.8 L2312.0 675.6 L2313.5 718.6 L2315.0 715.6 L2316.5 712.5 L2318.0 679.2 L2319.5 666.4 L2321.0 697.2 L2322.5 680.0 L2324.0 682.7 L2325.5 689.3 L2327.0 703.6 L2328.5 719.5 L2330.0 729.0 L2331.5 724.1 L2333.0 704.7 L2334.5 688.2 L2336.0 727.8 L2337.5 702.3 L2339.0 690.2 L2340.5 681.6 L2342.0 691.5 L2343.5 663.8 L2345.0 712.4 L2346.5 701.1 L2348.0 709.1 L2349.5 695.8 L2351.0 691.3 L2352.5 665.3 L2354.0 716.0 L2355.5 688.4 L2357.0 691.3 L2358.5 712.4 L2360.0 666.8 L2361.5 678.9 L2363.0 690.3 L2364.5 707.2 L2366.0 705.4 L2367.5 714.9 L2369.0 696.0 L2370.5 668.8 L2372.0 666.2 L2373.5 706.3 L2375.0 691.0 L2376.5 662.4 L2378.0 685.0 L2379.5 672.1 L2381.0 684.4 L2382.5 694.6 L2384.0 662.1 L2385.5 700.0 L2387.0 658.7 L2388.5 667.5 L2390.0 695.1 L2391.5 667.2 L2393.0 673.7 L2394.5 692.4 L2396.0 683.1 L2397.5 661.8 L2399.0 690.9 L2400.5 685.1 L2402.0 675.2 L2403.5 667.1 L2405.0 662.5 L2406.5 688.8 L2408.0 667.3 L2409.5 690.8 L2411.0 679.0 L2412.5 681.8 L2414.0 671.5 L2415.5 688.7 L2417.0 681.0 L2418.5 685.0 L2420.0 698.7 L2421.5 678.2 L2423.0 678.7 L2424.5 678.6 L2426.0 706.9 L2427.5 682.3 L2429.0 695.9 L2430.5 696.7 L2432.0 693.8 L2433.5 717.0 L2435.0 708.5 L2436.5 704.8 L2438.0 723.0 L2439.5 729.6 L2441.0 732.9 L2442.5 728.1 L2444.0 734.1 L2445.5 733.4 L2447.0 764.2 L2448.5 757.6 L2450.0 772.9 L2451.5 785.7 L2453.0 791.3 L2454.5 793.1 L2456.0 794.0 L2457.5 781.0 L2459.0 799.2 L2460.5 796.8 L2462.0 817.3 L2463.5 829.9 L2465.0 814.0 L2466.5 805.2 L2468.0 841.1 L2469.5 837.6 L2471.0 830.4 L2472.5 827.3 L2474.0 843.1 L2475.5 854.6 L2477.0 842.0 L2478.5 845.7 L2480.0 840.2 L2481.5 851.3 L2483.0 850.4 L2484.5 840.6 L2486.0 844.4 L2487.5 824.8 L2489.0 841.0 L2490.5 832.5 L2492.0 816.9 L2493.5 810.7 L2495.0 805.8 L2496.5 825.6 L2498.0 829.4 L2499.5 829.4 L2501.0 803.5 L2502.5 817.1 L2504.0 819.6 L2505.5 812.2 L2507.0 816.0 L2508.5 794.8 L2510.0 811.3 L2511.5 817.5 L2513.0 795.7 L2514.5 804.2 L2516.0 797.1 L2517.5 799.1 L2519.0 810.6 L2520.5 806.1 L2522.0 819.3 L2523.5 813.7 L2525.0 809.1 L2526.5 803.4 L2528.0 805.0 L2529.5 831.1 L2531.0 807.6 L2532.5 806.5 L2534.0 821.3 L2535.5 821.1 L2537.0 838.9 L2538.5 828.3 L2540.0 837.5 L2541.5 835.0 L2543.0 837.7 L2544.5 835.1 L2546.0 862.0 L2547.5 851.2 L2549.0 844.0 L2550.5 851.1 L2552.0 865.8 L2553.5 879.5 L2555.0 866.8 L2556.5 869.5 L2558.0 873.5 L2559.5 887.1 L2561.0 889.3 L2562.5 909.2 L2564.0 894.3 L2565.5 917.4 L2567.0 906.7 L2568.5 930.5 L2570.0 938.1 L2571.5 931.8 L2573.0 944.4 L2574.5 950.9 L2576.0 955.0 L2577.5 947.7 L2579.0 960.1 L2580.5 982.8 L2582.0 970.8 L2583.5 996.8 L2585.0 975.0 L2586.5 1007.8 L2588.0 1005.5 L2589.5 997.4 L2591.0 1029.2 L2592.5 1035.2 L2594.0 1027.8 L2595.5 1051.7 L2597.0 1043.0 L2598.5 1055.0 L2600.0 1069.0 L2601.5 1064.7 L2603.0 1088.7 L2604.5 1093.8 L2606.0 1103.4 L2607.5 1102.1 L2609.0 1082.6 L2610.5 1078.6 L2612.0 1089.6 L2613.5 1073.6 L2615.0 1087.4 L2616.5 1085.4 L2618.0 1067.7 L2619.5 1062.1 L2621.0 1067.6 L2622.5 1077.3 L2624.0 1064.1 L2625.5 1060.5 L2627.0 1068.0 L2628.5 1045.7 L2630.0 1051.5 L2631.5 1045.7 L2633.0 1055.5 L2634.5 1052.0 L2636.0 1036.7 L2637.5 1046.3 L2639.0 1032.5 L2640.5 1029.6 L2642.0 1034.2 L2643.5 1044.2 L2645.0 1042.2 L2646.5 1042.3 L2648.0 1035.1 L2649.5 1035.7 L2651.0 1030.1 L2652.5 1033.5 L2654.0 1038.0 L2655.5 1026.5 L2657.0 1031.6 L2658.5 1043.1 L2660.0 1048.0 L2661.5 1050.6 L2663.0 1046.7 L2664.5 1058.6 L2666.0 1052.3 L2667.5 1056.5 L2669.0 1061.7 L2670.5 1070.0 L2672.0 1076.3 L2673.5 1056.6 L2675.0 1056.7 L2676.5 1069.2 L2678.0 1082.2 L2679.5 1081.4 L2681.0 1095.2 L2682.5 1106.1 L2684.0 1107.2 L2685.5 1108.2 L2687.0 1120.6 L2688.5 1130.9 L2690.0 1125.6 L2691.5 1125.8 L2693.0 1149.9 L2694.5 1137.8 L2696.0 1165.6 L2697.5 1169.9 L2699.0 1189.9 L2700.5 1176.6 L2702.0 1205.5 L2703.5 1206.1 L2705.0 1231.5 L2706.5 1241.2 L2708.0 1243.5 L2709.5 1236.0 L2711.0 1246.9 L2712.5 1257.1 L2714.0 1288.7 L2715.5 1263.6 L2717.0 1244.2 L2718.5 1275.7 L2720.0 1269.9 L2721.5 1252.8 L2723.0 1233.4 L2724.5 1222.4 L2726.0 1244.3 L2727.5 1215.2 L2729.0 1205.4 L2730.5 1222.5 L2732.0 1196.7 L2733.5 1190.5 L2735.0 1213.6 L2736.5 1211.5 L2738.0 1189.7 L2739.5 1201.5 L2741.0 1180.9 L2742.5 1163.2 L2744.0 1175.0 L2745.5 1187.6 L2747.0 1170.2 L2748.5 1177.2 L2750.0 1203.7 L2751.5 1176.0 L2753.0 1188.3 L2754.5 1210.5 L2756.0 1190.5 L2757.5 1189.0 L2759.0 1213.9 L2760.5 1206.8 L2762.0 1202.4 L2763.5 1229.7 L2765.0 1222.5 L2766.5 1228.2 L2768.0 1221.5 L2769.5 1224.2 L2771.0 1251.6 L2772.5 1244.3 L2774.0 1267.9 L2775.5 1272.8 L2777.0 1261.6 L2778.5 1283.9 L2780.0 1294.3 L2781.5 1296.7 L2783.0 1293.2 L2784.5 1291.7 L2786.0 1329.1 L2787.5 1319.1 L2789.0 1332.8 L2790.5 1316.2 L2792.0 1317.4 L2793.5 1325.5 L2795.0 1313.2 L2796.5 1329.1 L2798.0 1335.9 L2799.5 1333.0 L2801.0 1327.6 L2802.5 1323.2 L2804.0 1348.5 L2805.5 1296.5 L2807.0 1330.9 L2808.5 1318.6 L2810.0 1326.3 L2811.5 1328.9 L2813.0 1304.9 L2814.5 1310.7 L2816.0 1304.7 L2817.5 1285.5 L2819.0 1281.6 L2820.5 1291.0 L2822.0 1274.0 L2823.5 1293.6 L2825.0 1269.7 L2826.5 1260.4 L2828.0 1283.6 L2829.5 1294.2 L2831.0 1258.1 L2832.5 1291.7 L2834.0 1283.6 L2835.5 1280.1 L2837.0 1289.4 L2838.5 1286.6 L2840.0 1281.5 L2841.5 1301.6 L2843.0 1298.4 L2844.5 1313.8 L2846.0 1309.7 L2847.5 1296.7 L2849.0 1309.7 L2850.5 1311.5 L2852.8 1308.2 L2855.1 1322.6 L2857.4 1316.3 L2859.7 1335.6 L2862.0 1333.7 L2864.3 1326.0 L2866.6 1353.6 L2868.9 1350.2 L2871.2 1326.0 L2873.5 1346.3 L2875.8 1318.8 L2878.1 1335.5 L2880.4 1339.4 L2882.7 1334.2 L2885.0 1318.7 L2887.3 1346.4 L2889.6 1331.9 L2891.9 1351.5 L2894.2 1360.6 L2896.5 1365.4 L2898.8 1389.2 L2901.1 1354.1 L2903.4 1371.1 L2905.7 1375.8 L2908.0 1356.2 L2910.3 1381.7 L2912.6 1354.6 L2914.9 1364.4 L2917.2 1355.1 L2919.5 1357.4 L2921.8 1354.7 L2924.1 1372.2 L2926.4 1354.2 L2928.7 1368.2 L2931.0 1363.1 L2933.3 1353.7 L2935.6 1369.3 L2937.9 1355.1 L2940.2 1353.8 L2942.5 1380.5 L2944.8 1356.0 L2947.1 1384.8 L2949.4 1370.1 L2951.7 1391.7 L2954.0 1361.9 L2956.3 1391.1 L2958.6 1365.8 L2960.9 1360.3 L2963.2 1362.2 L2965.5 1387.6 L2967.8 1360.2 L2970.1 1388.5 L2972.4 1372.0 L2974.7 1400.0 L2977.0 1392.7 L2979.3 1384.0 L2981.6 1404.5 L2983.9 1369.4 L2986.2 1367.4 L2988.5 1401.3 L2990.8 1381.4 L2993.1 1399.7 L2995.4 1376.1 L2997.7 1407.8 L3000.0 1373.4 L3002.3 1397.7 L3004.6 1381.7 L3006.9 1386.7 L3009.2 1376.3 L3011.5 1422.3 L3013.8 1429.8 L3016.1 1431.3 L3018.4 1396.4 L3020.7 1396.7 L3023.0 1423.6 L3025.3 1445.0 L3027.6 1454.2 L3029.9 1433.5 L3032.2 1439.2 L3034.5 1467.7 L3036.8 1445.0 L3039.1 1469.2 L3041.4 1445.0 L3043.7 1447.3 L3046.0 1460.1 L3048.3 1396.5 L3050.6 1421.1 L3052.9 1388.6 L3055.2 1424.2 L3057.5 1367.3 L3059.8 1380.5 L3062.1 1398.9 L3064.4 1376.3 L3066.7 1438.0 L3069.0 1445.9 L3071.3 1383.0 L3073.6 1393.0 L3075.9 1396.8 L3078.2 1481.3 L3080.5 1421.2 L3082.8 1462.6 L3085.1 1458.5 L3087.4 1483.4 L3089.7 1453.8 L3092.0 1495.9" fill="none" stroke="#2a65a2" stroke-width="1.8"/><path d="M2255.5 1677 V680" stroke="#2d6aa8" stroke-width="5"/><path d="M2255.5 760 L2258 640" stroke="#2d6aa8" stroke-width="4"/><path d="M2258.5 1677 V958.0" stroke="#86c3ef" stroke-width="1.5"/><rect x="2213" y="449" width="925" height="1228" fill="none" stroke="#000" stroke-width="2.5"/><path d="M2196 680.3 H2213" stroke="#000" stroke-width="2.5"/><path d="M2196 915.6 H2213" stroke="#000" stroke-width="2.5"/><path d="M2196 1150.9 H2213" stroke="#000" stroke-width="2.5"/><path d="M2196 1386.2 H2213" stroke="#000" stroke-width="2.5"/><path d="M2196 1621.5 H2213" stroke="#000" stroke-width="2.5"/><path d="M2967 1677 V1692" stroke="#000" stroke-width="2.5"/><rect x="2959" y="461" width="167.5" height="36" rx="4" fill="#fff" stroke="#d8d8d8" stroke-width="1.5"/><path d="M2964 476 H3014" stroke="#2a68a6" stroke-width="3"/><path d="M2991 466 V489" stroke="#2a68a6" stroke-width="2.5"/></svg>
<div style="position:absolute;left:3030.0px;top:463.3px;font-size:24.4px;line-height:1;font-weight:normal;color:#111;white-space:nowrap;font-family:"Liberation Sans", sans-serif;">spec 15</div>
<div style="position:absolute;left:2140.0px;top:666.9px;font-size:30px;line-height:1;font-weight:normal;color:#111;white-space:nowrap;font-family:"Liberation Sans", sans-serif;">10</div>
<div style="position:absolute;left:2171.0px;top:661.5px;font-size:21px;line-height:1;font-weight:normal;color:#111;white-space:nowrap;font-family:"Liberation Sans", sans-serif;">0</div>
<div style="position:absolute;left:2120.0px;top:902.2px;font-size:30px;line-height:1;font-weight:normal;color:#111;white-space:nowrap;font-family:"Liberation Sans", sans-serif;">10</div>
<div style="position:absolute;left:2157.0px;top:895.8px;font-size:21px;line-height:1;font-weight:normal;color:#111;white-space:nowrap;font-family:"Liberation Sans", sans-serif;letter-spacing:2px">−1</div>
<div style="position:absolute;left:2120.0px;top:1137.5px;font-size:30px;line-height:1;font-weight:normal;color:#111;white-space:nowrap;font-family:"Liberation Sans", sans-serif;">10</div>
<div style="position:absolute;left:2157.0px;top:1131.1px;font-size:21px;line-height:1;font-weight:normal;color:#111;white-space:nowrap;font-family:"Liberation Sans", sans-serif;letter-spacing:2px">−2</div>
<div style="position:absolute;left:2120.0px;top:1372.8px;font-size:30px;line-height:1;font-weight:normal;color:#111;white-space:nowrap;font-family:"Liberation Sans", sans-serif;">10</div>
<div style="position:absolute;left:2157.0px;top:1366.4px;font-size:21px;line-height:1;font-weight:normal;color:#111;white-space:nowrap;font-family:"Liberation Sans", sans-serif;letter-spacing:2px">−3</div>
<div style="position:absolute;left:2120.0px;top:1608.1px;font-size:30px;line-height:1;font-weight:normal;color:#111;white-space:nowrap;font-family:"Liberation Sans", sans-serif;">10</div>
<div style="position:absolute;left:2157.0px;top:1601.7px;font-size:21px;line-height:1;font-weight:normal;color:#111;white-space:nowrap;font-family:"Liberation Sans", sans-serif;letter-spacing:2px">−4</div>
<div style="position:absolute;left:2937.0px;top:1704.2px;font-size:30px;line-height:1;font-weight:normal;color:#111;white-space:nowrap;font-family:"Liberation Sans", sans-serif;">10</div>
<div style="position:absolute;left:2972.0px;top:1697.2px;font-size:21px;line-height:1;font-weight:normal;color:#111;white-space:nowrap;font-family:"Liberation Sans", sans-serif;letter-spacing:2px">−1</div>
<div style="position:absolute;left:2626.0px;top:1753.3px;font-size:28px;line-height:1;font-weight:normal;color:#222;white-space:nowrap;font-family:"Liberation Sans", sans-serif;letter-spacing:1.5px">q (<i>Å</i><span style="font-size:20px;position:relative;top:-12px;margin-left:5px;letter-spacing:2px">−1</span>)</div>
<div style="position:absolute;left:2080px;top:1143px;transform-origin:0 0;transform:rotate(-90deg);font-size:27px;letter-spacing:1.7px;line-height:1;color:#111;white-space:nowrap">Reflectivity</div>
<svg style="position:absolute;left:0;top:0" width="3268" height="2222"><path d="M1808.0 131.0 L1129.7 238.0" stroke="#e5411d" stroke-width="5.5" fill="none"/><path d="M1104.0 242.0 L1131.6 224.5 L1135.7 250.2 Z" fill="#e5411d"/><path d="M2016.0 133.0 L1793.7 234.2" stroke="#e5411d" stroke-width="5.5" fill="none"/><path d="M1770.0 245.0 L1791.9 220.7 L1802.7 244.4 Z" fill="#e5411d"/><path d="M519.0 340.0 L355.7 363.3" stroke="#e5411d" stroke-width="5.5" fill="none"/><path d="M330.0 367.0 L357.9 349.9 L361.5 375.6 Z" fill="#e5411d"/><path d="M519.0 340.0 L444.4 431.8" stroke="#e5411d" stroke-width="5.5" fill="none"/><path d="M428.0 452.0 L436.8 420.5 L457.0 436.9 Z" fill="#e5411d"/><path d="M1044.0 428.0 L904.5 399.2" stroke="#e5411d" stroke-width="5.5" fill="none"/><path d="M879.0 394.0 L911.0 387.3 L905.8 412.8 Z" fill="#e5411d"/><path d="M1377.0 475.0 L1240.3 730.1" stroke="#e5411d" stroke-width="5.5" fill="none"/><path d="M1228.0 753.0 L1230.7 720.4 L1253.6 732.7 Z" fill="#e5411d"/><path d="M1377.0 475.0 L1355.9 1112.0" stroke="#e5411d" stroke-width="5.5" fill="none"/><path d="M1355.0 1138.0 L1343.0 1107.6 L1369.0 1108.4 Z" fill="#e5411d"/><path d="M2962.0 1968.0 L3046.9 2037.5" stroke="#e5411d" stroke-width="5.5" fill="none"/><path d="M3067.0 2054.0 L3035.6 2045.0 L3052.0 2024.9 Z" fill="#e5411d"/></svg>
<div style="position:absolute;left:1616.0px;top:71.5px;font-size:47.8px;line-height:1;font-weight:bold;color:#e5411d;white-space:nowrap;font-family:"Liberation Sans", sans-serif;">1. Enter run and angle</div>
<div style="position:absolute;left:522.0px;top:292.6px;font-size:47.1px;line-height:1;font-weight:bold;color:#e5411d;white-space:nowrap;font-family:"Liberation Sans", sans-serif;">2. Select segments</div>
<div style="position:absolute;left:1072.0px;top:402.7px;font-size:47.8px;line-height:1;font-weight:bold;color:#e5411d;white-space:nowrap;font-family:"Liberation Sans", sans-serif;">3. Select regions of interest</div>
<div style="position:absolute;left:2568.0px;top:1915.8px;font-size:47.5px;line-height:1;font-weight:bold;color:#e5411d;white-space:nowrap;font-family:"Liberation Sans", sans-serif;">4. Apply to batch</div>
</body></html>
